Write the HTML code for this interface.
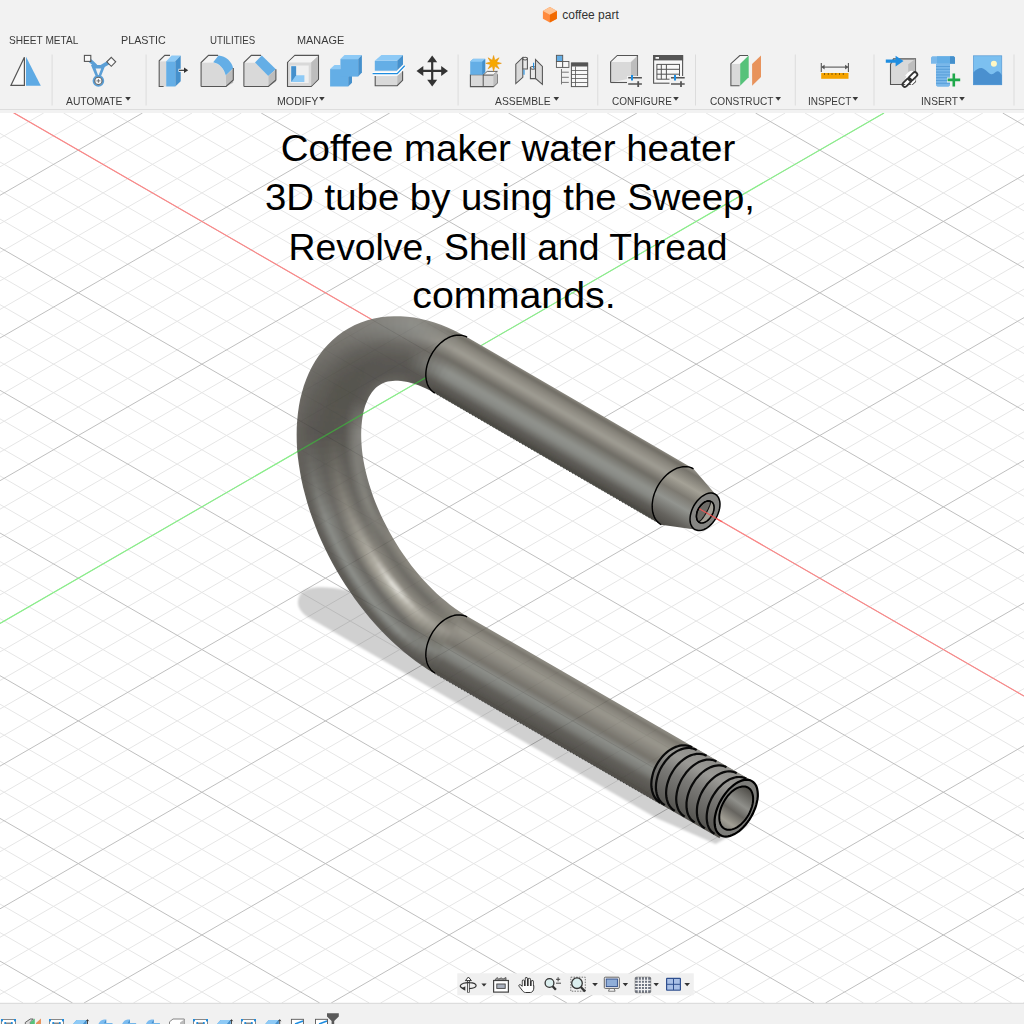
<!DOCTYPE html>
<html><head><meta charset="utf-8"><style>
html,body{margin:0;padding:0;width:1024px;height:1024px;overflow:hidden;background:#f0f0f0;font-family:"Liberation Sans",sans-serif;}
svg{display:block}
#vp{position:absolute;left:0;top:0;}
.tab{position:absolute;top:33px;font-size:10px;color:#3c3c3c;white-space:nowrap}
.lbl{position:absolute;top:94px;font-size:10px;color:#3c3c3c;white-space:nowrap}
.sep{position:absolute;top:55px;width:1px;height:50px;background:#d9d9d9}
.ic{position:absolute;}
</style></head><body>
<svg id="vp" width="1024" height="1024" viewBox="0 0 1024 1024">
<defs>
<clipPath id="vpclip"><rect x="0" y="113" width="1024" height="890"/></clipPath>
<filter id="blur1" x="-5%" y="-5%" width="110%" height="110%"><feGaussianBlur stdDeviation="0.8"/></filter>
<filter id="blur15" x="-10%" y="-10%" width="120%" height="120%"><feGaussianBlur stdDeviation="0.9"/></filter>
<clipPath id="tubeclip"><path d="M693.5 468.8L467.2 337.2L460.7 333.7L454.3 330.4L447.7 327.5L441.1 324.8L434.5 322.5L427.8 320.5L421.1 318.9L414.4 317.6L407.6 316.7L400.8 316.2L394.0 316.2L387.2 316.5L380.5 317.3L373.9 318.6L367.3 320.3L360.9 322.5L354.7 325.1L348.7 328.2L342.9 331.8L337.5 335.8L332.3 340.2L327.5 344.9L323.0 350.0L318.9 355.4L315.2 361.0L311.8 366.9L308.8 373.0L306.2 379.3L303.8 385.7L301.9 392.4L300.2 399.1L298.9 406.0L297.9 413.0L297.2 420.1L296.7 427.3L296.6 434.6L296.7 442.0L297.1 449.4L297.8 456.9L298.8 464.5L300.0 472.1L301.4 479.7L303.1 487.4L305.1 495.1L307.2 502.8L309.6 510.5L312.2 518.1L315.1 525.8L318.1 533.4L321.4 541.0L324.9 548.5L328.6 555.9L332.4 563.2L336.5 570.5L340.8 577.7L345.2 584.7L349.8 591.6L354.5 598.4L359.4 605.1L364.5 611.5L369.7 617.9L375.0 624.0L380.5 630.0L386.1 635.7L391.8 641.3L397.6 646.6L403.6 651.7L409.6 656.6L415.7 661.2L421.9 665.6L428.1 669.7L434.5 673.6L719.5 838.2L752.5 781.0L467.5 616.4L463.2 613.9L458.8 611.0L454.4 608.0L450.0 604.7L445.6 601.1L441.2 597.4L436.7 593.4L432.4 589.2L428.0 584.8L423.7 580.2L419.5 575.4L415.4 570.5L411.3 565.4L407.4 560.1L403.6 554.7L399.8 549.2L396.3 543.6L392.8 537.8L389.5 532.0L386.4 526.1L383.4 520.2L380.5 514.2L377.9 508.2L375.4 502.2L373.1 496.2L371.1 490.2L369.2 484.2L367.5 478.3L366.0 472.5L364.7 466.7L363.6 461.0L362.7 455.4L362.0 450.0L361.6 444.7L361.3 439.6L361.2 434.6L361.3 429.8L361.6 425.2L362.0 420.9L362.6 416.8L363.3 412.9L364.2 409.2L365.2 405.8L366.4 402.7L367.6 399.9L368.8 397.3L370.2 394.9L371.6 392.8L373.0 390.9L374.5 389.3L375.9 387.8L377.5 386.5L379.0 385.4L380.6 384.4L382.3 383.5L384.1 382.8L386.0 382.1L388.0 381.6L390.3 381.2L392.7 380.9L395.2 380.7L398.0 380.8L401.0 381.0L404.1 381.4L407.5 382.0L411.0 382.9L414.6 384.0L418.4 385.3L422.4 386.9L426.4 388.7L430.6 390.8L434.8 393.2L661.2 524.7Z"/></clipPath>
<linearGradient id="coneg" gradientUnits="userSpaceOnUse" x1="707" y1="476.3" x2="675" y2="531.7">
<stop offset="0" stop-color="#9a978e"/><stop offset="0.08" stop-color="#77746c"/><stop offset="0.28" stop-color="#a4a196"/><stop offset="0.45" stop-color="#7d7a72"/><stop offset="0.62" stop-color="#92948f"/><stop offset="0.85" stop-color="#65635e"/><stop offset="1" stop-color="#504e49"/></linearGradient>
<linearGradient id="thrg" gradientUnits="userSpaceOnUse" x1="722" y1="764" x2="690" y2="820">
<stop offset="0" stop-color="#8f8e8a"/><stop offset="0.25" stop-color="#9a9995"/><stop offset="0.5" stop-color="#7a7976"/><stop offset="0.75" stop-color="#686764"/><stop offset="1" stop-color="#555450"/></linearGradient>
<linearGradient id="holeg" gradientUnits="userSpaceOnUse" x1="750" y1="790" x2="722" y2="830">
<stop offset="0" stop-color="#4f4d48"/><stop offset="0.35" stop-color="#8f8f8a"/><stop offset="0.55" stop-color="#66645f"/><stop offset="0.8" stop-color="#a19e94"/><stop offset="1" stop-color="#777570"/></linearGradient>
</defs>
<rect x="0" y="113" width="1024" height="890" fill="#ffffff"/>
<g clip-path="url(#vpclip)">
<path d="M953.3 113.0L1024.0 153.8M903.8 113.0L1024.0 182.4M854.4 113.0L1024.0 210.9M0.0 138.2L43.7 113.0M805.0 113.0L1024.0 239.5M0.0 166.8L93.1 113.0M706.1 113.0L1024.0 296.5M0.0 223.8L192.0 113.0M656.7 113.0L1024.0 325.1M0.0 252.4L241.4 113.0M607.2 113.0L1024.0 353.6M0.0 280.9L290.8 113.0M557.8 113.0L1024.0 382.2M0.0 309.5L340.3 113.0M458.9 113.0L1024.0 439.2M0.0 366.5L439.1 113.0M409.5 113.0L1024.0 467.8M0.0 395.1L488.6 113.0M360.1 113.0L1024.0 496.3M0.0 423.6L538.0 113.0M310.6 113.0L1024.0 524.9M0.0 452.2L587.4 113.0M211.8 113.0L1024.0 581.9M0.0 509.2L686.3 113.0M162.3 113.0L1024.0 610.5M0.0 537.8L735.7 113.0M112.9 113.0L1024.0 639.0M0.0 566.3L785.2 113.0M63.5 113.0L1024.0 667.6M0.0 594.9L834.6 113.0M0.0 133.4L1024.0 724.6M0.0 651.9L933.5 113.0M0.0 162.0L1024.0 753.2M0.0 680.5L982.9 113.0M0.0 190.5L1024.0 781.7M0.0 709.0L1024.0 117.8M0.0 219.1L1024.0 810.3M0.0 737.6L1024.0 146.4M0.0 276.1L1024.0 867.3M0.0 794.6L1024.0 203.4M0.0 304.7L1024.0 895.9M0.0 823.2L1024.0 232.0M0.0 333.2L1024.0 924.4M0.0 851.7L1024.0 260.5M0.0 361.8L1024.0 953.0M0.0 880.3L1024.0 289.1M0.0 418.8L1011.8 1003.0M0.0 937.3L1024.0 346.1M0.0 447.4L962.4 1003.0M0.0 965.9L1024.0 374.7M0.0 475.9L912.9 1003.0M0.0 994.4L1024.0 403.2M0.0 504.5L863.5 1003.0M34.6 1003.0L1024.0 431.8M0.0 561.5L764.6 1003.0M133.4 1003.0L1024.0 488.8M0.0 590.1L715.2 1003.0M182.9 1003.0L1024.0 517.4M0.0 618.6L665.8 1003.0M232.3 1003.0L1024.0 545.9M0.0 647.2L616.3 1003.0M281.7 1003.0L1024.0 574.5M0.0 704.2L517.5 1003.0M380.6 1003.0L1024.0 631.5M0.0 732.8L468.0 1003.0M430.0 1003.0L1024.0 660.1M0.0 761.3L418.6 1003.0M479.5 1003.0L1024.0 688.6M0.0 789.9L369.2 1003.0M528.9 1003.0L1024.0 717.2M0.0 846.9L270.3 1003.0M627.8 1003.0L1024.0 774.2M0.0 875.5L220.9 1003.0M677.2 1003.0L1024.0 802.8M0.0 904.0L171.4 1003.0M726.6 1003.0L1024.0 831.3M0.0 932.6L122.0 1003.0M776.1 1003.0L1024.0 859.9M0.0 989.6L23.1 1003.0M874.9 1003.0L1024.0 916.9M924.4 1003.0L1024.0 945.5M973.8 1003.0L1024.0 974.0M1023.2 1003.0L1024.0 1002.6" stroke="#e6e6e6" stroke-width="1" fill="none"/>
<path d="M1002.7 113.0L1024.0 125.3M755.5 113.0L1024.0 268.0M0.0 195.3L142.5 113.0M508.4 113.0L1024.0 410.7M0.0 338.0L389.7 113.0M261.2 113.0L1024.0 553.4M0.0 480.7L636.9 113.0M14.0 113.0L1024.0 696.1M0.0 623.4L884.0 113.0M0.0 247.6L1024.0 838.8M0.0 766.1L1024.0 174.9M0.0 390.3L1024.0 981.5M0.0 908.8L1024.0 317.6M0.0 533.0L814.1 1003.0M84.0 1003.0L1024.0 460.3M0.0 675.7L566.9 1003.0M331.2 1003.0L1024.0 603.0M0.0 818.4L319.7 1003.0M578.3 1003.0L1024.0 745.7M0.0 961.1L72.6 1003.0M825.5 1003.0L1024.0 888.4" stroke="#bfbfbf" stroke-width="1" fill="none"/>
<line x1="13.5" y1="112.7" x2="1024" y2="696.1" stroke="#ff8585" stroke-width="1.15"/>
<line x1="884" y1="113" x2="0" y2="623.4" stroke="#88f288" stroke-width="1.15"/>
<path d="M420.0 640.0L347.8 590.3C318 584.5 305 588 301 593.5C297 599 297 606 300.5 610C302 612.5 304 614 306 615.9L656.2 818.1L715.6 844L748.4 825.6L740 780Z" fill="#000" fill-opacity="0.185" filter="url(#blur15)"/>
<g clip-path="url(#tubeclip)"><g filter="url(#blur1)"><path d="M693.5 468.8L467.2 337.2L460.7 333.7L454.3 330.4L447.7 327.5L441.1 324.8L434.5 322.5L427.8 320.5L421.1 318.9L414.4 317.6L407.6 316.7L400.8 316.2L394.0 316.2L387.2 316.5L380.5 317.3L373.9 318.6L367.3 320.3L360.9 322.5L354.7 325.1L348.7 328.2L342.9 331.8L337.5 335.8L332.3 340.2L327.5 344.9L323.0 350.0L318.9 355.4L315.2 361.0L311.8 366.9L308.8 373.0L306.2 379.3L303.8 385.7L301.9 392.4L300.2 399.1L298.9 406.0L297.9 413.0L297.2 420.1L296.7 427.3L296.6 434.6L296.7 442.0L297.1 449.4L297.8 456.9L298.8 464.5L300.0 472.1L301.4 479.7L303.1 487.4L305.1 495.1L307.2 502.8L309.6 510.5L312.2 518.1L315.1 525.8L318.1 533.4L321.4 541.0L324.9 548.5L328.6 555.9L332.4 563.2L336.5 570.5L340.8 577.7L345.2 584.7L349.8 591.6L354.5 598.4L359.4 605.1L364.5 611.5L369.7 617.9L375.0 624.0L380.5 630.0L386.1 635.7L391.8 641.3L397.6 646.6L403.6 651.7L409.6 656.6L415.7 661.2L421.9 665.6L428.1 669.7L434.5 673.6L719.5 838.2L752.5 781.0L467.5 616.4L463.2 613.9L458.8 611.0L454.4 608.0L450.0 604.7L445.6 601.1L441.2 597.4L436.7 593.4L432.4 589.2L428.0 584.8L423.7 580.2L419.5 575.4L415.4 570.5L411.3 565.4L407.4 560.1L403.6 554.7L399.8 549.2L396.3 543.6L392.8 537.8L389.5 532.0L386.4 526.1L383.4 520.2L380.5 514.2L377.9 508.2L375.4 502.2L373.1 496.2L371.1 490.2L369.2 484.2L367.5 478.3L366.0 472.5L364.7 466.7L363.6 461.0L362.7 455.4L362.0 450.0L361.6 444.7L361.3 439.6L361.2 434.6L361.3 429.8L361.6 425.2L362.0 420.9L362.6 416.8L363.3 412.9L364.2 409.2L365.2 405.8L366.4 402.7L367.6 399.9L368.8 397.3L370.2 394.9L371.6 392.8L373.0 390.9L374.5 389.3L375.9 387.8L377.5 386.5L379.0 385.4L380.6 384.4L382.3 383.5L384.1 382.8L386.0 382.1L388.0 381.6L390.3 381.2L392.7 380.9L395.2 380.7L398.0 380.8L401.0 381.0L404.1 381.4L407.5 382.0L411.0 382.9L414.6 384.0L418.4 385.3L422.4 386.9L426.4 388.7L430.6 390.8L434.8 393.2L661.2 524.7Z" fill="#6e6c66" stroke="#6e6c66" stroke-width="3"/><path d="M694.2 468.3L467.3 336.4L465.4 339.5L692.4 471.4Z" fill="#908d84"/><path d="M693.2 470.0L466.2 338.1L464.4 341.2L691.4 473.1Z" fill="#6f6c64"/><path d="M692.2 471.7L465.2 339.8L463.4 343.0L690.4 474.9Z" fill="#75726a"/><path d="M691.2 473.5L464.2 341.6L462.4 344.7L689.4 476.6Z" fill="#807d74"/><path d="M690.2 475.2L463.2 343.3L461.4 346.5L688.4 478.4Z" fill="#88857c"/><path d="M689.2 477.0L462.2 345.1L460.4 348.2L687.3 480.1Z" fill="#8e8b82"/><path d="M688.2 478.7L461.2 346.8L459.4 350.0L686.3 481.9Z" fill="#949188"/><path d="M687.1 480.5L460.2 348.6L458.4 351.7L685.3 483.6Z" fill="#99968d"/><path d="M686.1 482.2L459.2 350.3L457.4 353.5L684.3 485.4Z" fill="#9f9c93"/><path d="M685.1 484.0L458.2 352.1L456.3 355.2L683.3 487.1Z" fill="#9b988f"/><path d="M684.1 485.7L457.2 353.8L455.3 357.0L682.3 488.9Z" fill="#928f86"/><path d="M683.1 487.5L456.1 355.6L454.3 358.7L681.3 490.6Z" fill="#89867e"/><path d="M682.1 489.2L455.1 357.3L453.3 360.5L680.3 492.4Z" fill="#807d75"/><path d="M681.1 491.0L454.1 359.1L452.3 362.2L679.3 494.1Z" fill="#77746d"/><path d="M680.1 492.7L453.1 360.8L451.3 364.0L678.3 495.9Z" fill="#706d66"/><path d="M679.1 494.5L452.1 362.6L450.3 365.7L677.2 497.6Z" fill="#76746d"/><path d="M678.1 496.2L451.1 364.3L449.3 367.5L676.2 499.4Z" fill="#7c7b74"/><path d="M677.0 498.0L450.1 366.1L448.3 369.2L675.2 501.1Z" fill="#82827c"/><path d="M676.0 499.7L449.1 367.8L447.3 371.0L674.2 502.9Z" fill="#888983"/><path d="M675.0 501.5L448.1 369.6L446.3 372.7L673.2 504.6Z" fill="#8e908a"/><path d="M674.0 503.2L447.1 371.3L445.2 374.5L672.2 506.4Z" fill="#90928d"/><path d="M673.0 505.0L446.1 373.1L444.2 376.2L671.2 508.1Z" fill="#8d8f8a"/><path d="M672.0 506.7L445.0 374.8L443.2 378.0L670.2 509.9Z" fill="#8a8c87"/><path d="M671.0 508.5L444.0 376.6L442.2 379.7L669.2 511.6Z" fill="#858782"/><path d="M670.0 510.2L443.0 378.3L441.2 381.5L668.2 513.4Z" fill="#7c7c77"/><path d="M669.0 512.0L442.0 380.1L440.2 383.2L667.2 515.1Z" fill="#72726d"/><path d="M668.0 513.7L441.0 381.8L439.2 385.0L666.1 516.9Z" fill="#696863"/><path d="M667.0 515.5L440.0 383.6L438.2 386.7L665.1 518.6Z" fill="#5f5d58"/><path d="M665.9 517.2L439.0 385.3L437.2 388.5L664.1 520.4Z" fill="#5b5954"/><path d="M664.9 519.0L438.0 387.1L436.2 390.2L663.1 522.1Z" fill="#56544f"/><path d="M663.9 520.7L437.0 388.8L435.2 391.9L662.1 523.8Z" fill="#514f4a"/><path d="M662.9 522.5L436.0 390.6L434.1 393.7L661.1 525.6Z" fill="#4a4843"/><path d="M467.9 336.7L460.8 332.8L459.1 336.0L466.0 339.8Z" fill="#908d84"/><path d="M466.8 338.5L459.9 334.6L458.2 337.8L465.0 341.6Z" fill="#716e66"/><path d="M465.8 340.2L458.9 336.4L457.2 339.6L464.0 343.3Z" fill="#77746c"/><path d="M464.8 341.9L458.0 338.2L456.3 341.4L463.0 345.1Z" fill="#817e75"/><path d="M463.8 343.7L457.0 340.0L455.3 343.2L462.0 346.8Z" fill="#88867d"/><path d="M462.8 345.4L456.1 341.7L454.4 345.0L461.0 348.6Z" fill="#8e8b82"/><path d="M461.8 347.2L455.2 343.5L453.5 346.7L460.0 350.3Z" fill="#939088"/><path d="M460.8 348.9L454.2 345.3L452.5 348.5L459.0 352.1Z" fill="#98968d"/><path d="M459.8 350.7L453.3 347.1L451.6 350.3L458.0 353.8Z" fill="#9e9b92"/><path d="M458.8 352.4L452.3 348.9L450.6 352.1L457.0 355.6Z" fill="#99978e"/><path d="M457.8 354.2L451.4 350.7L449.7 353.9L455.9 357.3Z" fill="#918e86"/><path d="M456.8 355.9L450.4 352.5L448.8 355.7L454.9 359.1Z" fill="#88857d"/><path d="M455.7 357.7L449.5 354.2L447.8 357.5L453.9 360.8Z" fill="#7f7d75"/><path d="M454.7 359.4L448.6 356.0L446.9 359.2L452.9 362.6Z" fill="#77746d"/><path d="M453.7 361.2L447.6 357.8L445.9 361.0L451.9 364.3Z" fill="#6f6d66"/><path d="M452.7 362.9L446.7 359.6L445.0 362.8L450.9 366.1Z" fill="#75736d"/><path d="M451.7 364.7L445.7 361.4L444.0 364.6L449.9 367.8Z" fill="#7b7973"/><path d="M450.7 366.4L444.8 363.2L443.1 366.4L448.9 369.6Z" fill="#80807a"/><path d="M449.7 368.2L443.9 365.0L442.2 368.2L447.9 371.3Z" fill="#868681"/><path d="M448.7 369.9L442.9 366.7L441.2 370.0L446.9 373.1Z" fill="#8b8d87"/><path d="M447.7 371.7L442.0 368.5L440.3 371.7L445.9 374.8Z" fill="#8d8e89"/><path d="M446.7 373.4L441.0 370.3L439.3 373.5L444.8 376.6Z" fill="#8a8c87"/><path d="M445.7 375.2L440.1 372.1L438.4 375.3L443.8 378.3Z" fill="#878984"/><path d="M444.6 376.9L439.1 373.9L437.5 377.1L442.8 380.1Z" fill="#83847f"/><path d="M443.6 378.7L438.2 375.7L436.5 378.9L441.8 381.8Z" fill="#7a7a75"/><path d="M442.6 380.4L437.3 377.5L435.6 380.7L440.8 383.6Z" fill="#71706b"/><path d="M441.6 382.2L436.3 379.2L434.6 382.5L439.8 385.3Z" fill="#686762"/><path d="M440.6 383.9L435.4 381.0L433.7 384.2L438.8 387.1Z" fill="#5f5d58"/><path d="M439.6 385.7L434.4 382.8L432.7 386.0L437.8 388.8Z" fill="#5b5954"/><path d="M438.6 387.4L433.5 384.6L431.8 387.8L436.8 390.6Z" fill="#56544f"/><path d="M437.6 389.2L432.6 386.4L430.9 389.6L435.8 392.3Z" fill="#52504b"/><path d="M436.6 390.9L431.6 388.2L429.9 391.4L434.7 394.0Z" fill="#4c4a45"/><path d="M461.4 333.1L454.3 329.6L452.7 332.8L459.7 336.4Z" fill="#908d85"/><path d="M460.5 334.9L453.4 331.4L451.9 334.7L458.8 338.1Z" fill="#75736b"/><path d="M459.5 336.7L452.6 333.2L451.0 336.5L457.8 339.9Z" fill="#7a7870"/><path d="M458.6 338.5L451.7 335.0L450.1 338.3L456.9 341.7Z" fill="#838078"/><path d="M457.7 340.3L450.8 336.8L449.3 340.1L456.0 343.5Z" fill="#89877f"/><path d="M456.7 342.1L450.0 338.7L448.4 341.9L455.0 345.3Z" fill="#8e8b83"/><path d="M455.8 343.9L449.1 340.5L447.5 343.8L454.1 347.1Z" fill="#929087"/><path d="M454.8 345.6L448.2 342.3L446.6 345.6L453.1 348.9Z" fill="#96948c"/><path d="M453.9 347.4L447.3 344.1L445.8 347.4L452.2 350.6Z" fill="#9b9890"/><path d="M453.0 349.2L446.5 346.0L444.9 349.2L451.3 352.4Z" fill="#97948c"/><path d="M452.0 351.0L445.6 347.8L444.0 351.1L450.3 354.2Z" fill="#8f8c84"/><path d="M451.1 352.8L444.7 349.6L443.2 352.9L449.4 356.0Z" fill="#86847c"/><path d="M450.1 354.6L443.9 351.4L442.3 354.7L448.4 357.8Z" fill="#7e7c74"/><path d="M449.2 356.3L443.0 353.2L441.4 356.5L447.5 359.6Z" fill="#76736d"/><path d="M448.2 358.1L442.1 355.1L440.6 358.3L446.5 361.3Z" fill="#6f6d66"/><path d="M447.3 359.9L441.3 356.9L439.7 360.2L445.6 363.1Z" fill="#74726b"/><path d="M446.4 361.7L440.4 358.7L438.8 362.0L444.7 364.9Z" fill="#787771"/><path d="M445.4 363.5L439.5 360.5L438.0 363.8L443.7 366.7Z" fill="#7d7c76"/><path d="M444.5 365.3L438.7 362.4L437.1 365.6L442.8 368.5Z" fill="#81817c"/><path d="M443.5 367.1L437.8 364.2L436.2 367.5L441.8 370.3Z" fill="#868681"/><path d="M442.6 368.8L436.9 366.0L435.3 369.3L440.9 372.1Z" fill="#868883"/><path d="M441.7 370.6L436.0 367.8L434.5 371.1L440.0 373.8Z" fill="#848580"/><path d="M440.7 372.4L435.2 369.6L433.6 372.9L439.0 375.6Z" fill="#81837e"/><path d="M439.8 374.2L434.3 371.5L432.7 374.7L438.1 377.4Z" fill="#7d7e79"/><path d="M438.8 376.0L433.4 373.3L431.9 376.6L437.1 379.2Z" fill="#757671"/><path d="M437.9 377.8L432.6 375.1L431.0 378.4L436.2 381.0Z" fill="#6e6d68"/><path d="M436.9 379.6L431.7 376.9L430.1 380.2L435.2 382.8Z" fill="#66645f"/><path d="M436.0 381.3L430.8 378.8L429.3 382.0L434.3 384.6Z" fill="#5e5c57"/><path d="M435.1 383.1L430.0 380.6L428.4 383.9L433.4 386.3Z" fill="#5b5954"/><path d="M434.1 384.9L429.1 382.4L427.5 385.7L432.4 388.1Z" fill="#575550"/><path d="M433.2 386.7L428.2 384.2L426.7 387.5L431.5 389.9Z" fill="#54524d"/><path d="M432.2 388.5L427.3 386.0L425.8 389.3L430.5 391.7Z" fill="#4f4d48"/><path d="M454.9 329.9L447.7 326.6L446.3 329.9L453.4 333.1Z" fill="#908d85"/><path d="M454.1 331.7L446.9 328.5L445.5 331.8L452.5 335.0Z" fill="#797770"/><path d="M453.2 333.5L446.1 330.3L444.7 333.7L451.6 336.8Z" fill="#7d7b74"/><path d="M452.3 335.3L445.4 332.2L443.9 335.5L450.8 338.6Z" fill="#84827b"/><path d="M451.5 337.1L444.6 334.0L443.1 337.4L449.9 340.4Z" fill="#8a8880"/><path d="M450.6 339.0L443.8 335.9L442.3 339.2L449.0 342.2Z" fill="#8d8c84"/><path d="M449.7 340.8L443.0 337.7L441.6 341.1L448.1 344.1Z" fill="#918f87"/><path d="M448.8 342.6L442.2 339.6L440.8 342.9L447.3 345.9Z" fill="#94928b"/><path d="M448.0 344.4L441.4 341.5L440.0 344.8L446.4 347.7Z" fill="#98968e"/><path d="M447.1 346.3L440.6 343.3L439.2 346.7L445.5 349.5Z" fill="#94928a"/><path d="M446.2 348.1L439.8 345.2L438.4 348.5L444.7 351.4Z" fill="#8c8a83"/><path d="M445.4 349.9L439.0 347.0L437.6 350.4L443.8 353.2Z" fill="#85837b"/><path d="M444.5 351.7L438.2 348.9L436.8 352.2L442.9 355.0Z" fill="#7d7b74"/><path d="M443.6 353.5L437.4 350.7L436.0 354.1L442.1 356.8Z" fill="#76736c"/><path d="M442.8 355.4L436.6 352.6L435.2 355.9L441.2 358.6Z" fill="#6f6c66"/><path d="M441.9 357.2L435.8 354.5L434.4 357.8L440.3 360.5Z" fill="#72706a"/><path d="M441.0 359.0L435.1 356.3L433.6 359.7L439.5 362.3Z" fill="#76746f"/><path d="M440.2 360.8L434.3 358.2L432.8 361.5L438.6 364.1Z" fill="#797873"/><path d="M439.3 362.7L433.5 360.0L432.0 363.4L437.7 365.9Z" fill="#7d7c77"/><path d="M438.4 364.5L432.7 361.9L431.3 365.2L436.8 367.8Z" fill="#80807b"/><path d="M437.5 366.3L431.9 363.7L430.5 367.1L436.0 369.6Z" fill="#80817c"/><path d="M436.7 368.1L431.1 365.6L429.7 368.9L435.1 371.4Z" fill="#7e7f7a"/><path d="M435.8 369.9L430.3 367.5L428.9 370.8L434.2 373.2Z" fill="#7c7c77"/><path d="M434.9 371.8L429.5 369.3L428.1 372.7L433.4 375.0Z" fill="#787974"/><path d="M434.1 373.6L428.7 371.2L427.3 374.5L432.5 376.9Z" fill="#71716c"/><path d="M433.2 375.4L427.9 373.0L426.5 376.4L431.6 378.7Z" fill="#6a6a65"/><path d="M432.3 377.2L427.1 374.9L425.7 378.2L430.8 380.5Z" fill="#64625d"/><path d="M431.5 379.1L426.3 376.7L424.9 380.1L429.9 382.3Z" fill="#5d5b56"/><path d="M430.6 380.9L425.6 378.6L424.1 381.9L429.0 384.2Z" fill="#5b5954"/><path d="M429.7 382.7L424.8 380.5L423.3 383.8L428.2 386.0Z" fill="#585651"/><path d="M428.9 384.5L424.0 382.3L422.5 385.7L427.3 387.8Z" fill="#56544f"/><path d="M428.0 386.3L423.2 384.2L421.8 387.5L426.4 389.6Z" fill="#514f4a"/><path d="M448.4 326.9L441.1 324.0L439.8 327.4L446.9 330.2Z" fill="#908d86"/><path d="M447.6 328.7L440.4 325.9L439.1 329.3L446.2 332.1Z" fill="#7d7b74"/><path d="M446.8 330.6L439.7 327.7L438.4 331.1L445.4 333.9Z" fill="#817f78"/><path d="M446.0 332.4L439.0 329.6L437.7 333.0L444.6 335.8Z" fill="#86857d"/><path d="M445.2 334.3L438.3 331.5L437.0 334.9L443.8 337.6Z" fill="#8b8982"/><path d="M444.4 336.2L437.6 333.4L436.3 336.8L443.0 339.5Z" fill="#8d8c85"/><path d="M443.6 338.0L436.8 335.3L435.6 338.7L442.2 341.4Z" fill="#908e87"/><path d="M442.8 339.9L436.1 337.2L434.9 340.6L441.4 343.2Z" fill="#929189"/><path d="M442.0 341.7L435.4 339.1L434.2 342.5L440.6 345.1Z" fill="#95938c"/><path d="M441.2 343.6L434.7 341.0L433.4 344.4L439.8 346.9Z" fill="#919089"/><path d="M440.5 345.4L434.0 342.9L432.7 346.3L439.0 348.8Z" fill="#8a8882"/><path d="M439.7 347.3L433.3 344.8L432.0 348.2L438.2 350.6Z" fill="#83817a"/><path d="M438.9 349.2L432.6 346.6L431.3 350.0L437.4 352.5Z" fill="#7c7a73"/><path d="M438.1 351.0L431.9 348.5L430.6 351.9L436.7 354.4Z" fill="#75736c"/><path d="M437.3 352.9L431.2 350.4L429.9 353.8L435.9 356.2Z" fill="#6f6c66"/><path d="M436.5 354.7L430.5 352.3L429.2 355.7L435.1 358.1Z" fill="#716f69"/><path d="M435.7 356.6L429.8 354.2L428.5 357.6L434.3 359.9Z" fill="#73726c"/><path d="M434.9 358.4L429.0 356.1L427.8 359.5L433.5 361.8Z" fill="#76756f"/><path d="M434.1 360.3L428.3 358.0L427.1 361.4L432.7 363.6Z" fill="#787872"/><path d="M433.3 362.2L427.6 359.9L426.3 363.3L431.9 365.5Z" fill="#7a7a75"/><path d="M432.5 364.0L426.9 361.8L425.6 365.2L431.1 367.4Z" fill="#7a7a75"/><path d="M431.7 365.9L426.2 363.7L424.9 367.1L430.3 369.2Z" fill="#787873"/><path d="M430.9 367.7L425.5 365.5L424.2 368.9L429.5 371.1Z" fill="#767671"/><path d="M430.2 369.6L424.8 367.4L423.5 370.8L428.7 372.9Z" fill="#73736e"/><path d="M429.4 371.4L424.1 369.3L422.8 372.7L427.9 374.8Z" fill="#6d6d68"/><path d="M428.6 373.3L423.4 371.2L422.1 374.6L427.1 376.6Z" fill="#676661"/><path d="M427.8 375.2L422.7 373.1L421.4 376.5L426.4 378.5Z" fill="#62605b"/><path d="M427.0 377.0L421.9 375.0L420.7 378.4L425.6 380.4Z" fill="#5c5a55"/><path d="M426.2 378.9L421.2 376.9L420.0 380.3L424.8 382.2Z" fill="#5b5954"/><path d="M425.4 380.7L420.5 378.8L419.3 382.2L424.0 384.1Z" fill="#595752"/><path d="M424.6 382.6L419.8 380.7L418.5 384.1L423.2 385.9Z" fill="#575550"/><path d="M423.8 384.4L419.1 382.6L417.8 386.0L422.4 387.8Z" fill="#54524d"/><path d="M441.8 324.2L434.4 321.6L433.3 325.1L440.5 327.6Z" fill="#908e86"/><path d="M441.0 326.1L433.8 323.6L432.7 327.0L439.8 329.5Z" fill="#817f79"/><path d="M440.3 328.0L433.2 325.5L432.1 328.9L439.1 331.4Z" fill="#84827b"/><path d="M439.6 329.9L432.6 327.4L431.4 330.9L438.4 333.3Z" fill="#888780"/><path d="M438.9 331.8L431.9 329.3L430.8 332.8L437.6 335.2Z" fill="#8b8b84"/><path d="M438.2 333.7L431.3 331.3L430.2 334.7L436.9 337.1Z" fill="#8d8c86"/><path d="M437.5 335.6L430.7 333.2L429.6 336.6L436.2 339.0Z" fill="#8f8e87"/><path d="M436.8 337.4L430.1 335.1L429.0 338.6L435.5 340.8Z" fill="#908f88"/><path d="M436.1 339.3L429.5 337.0L428.3 340.5L434.8 342.7Z" fill="#92908a"/><path d="M435.4 341.2L428.8 338.9L427.7 342.4L434.1 344.6Z" fill="#8f8d87"/><path d="M434.7 343.1L428.2 340.9L427.1 344.3L433.4 346.5Z" fill="#888780"/><path d="M434.0 345.0L427.6 342.8L426.5 346.2L432.7 348.4Z" fill="#828079"/><path d="M433.2 346.9L427.0 344.7L425.9 348.2L432.0 350.3Z" fill="#7b7973"/><path d="M432.5 348.8L426.3 346.6L425.2 350.1L431.3 352.2Z" fill="#74726c"/><path d="M431.8 350.7L425.7 348.5L424.6 352.0L430.5 354.1Z" fill="#6f6c66"/><path d="M431.1 352.6L425.1 350.5L424.0 353.9L429.8 356.0Z" fill="#706e68"/><path d="M430.4 354.5L424.5 352.4L423.4 355.8L429.1 357.9Z" fill="#716f6a"/><path d="M429.7 356.3L423.9 354.3L422.7 357.8L428.4 359.7Z" fill="#72716c"/><path d="M429.0 358.2L423.2 356.2L422.1 359.7L427.7 361.6Z" fill="#74736d"/><path d="M428.3 360.1L422.6 358.1L421.5 361.6L427.0 363.5Z" fill="#75746f"/><path d="M427.6 362.0L422.0 360.1L420.9 363.5L426.3 365.4Z" fill="#74746f"/><path d="M426.9 363.9L421.4 362.0L420.3 365.4L425.6 367.3Z" fill="#72726d"/><path d="M426.2 365.8L420.8 363.9L419.6 367.4L424.9 369.2Z" fill="#70706b"/><path d="M425.4 367.7L420.1 365.8L419.0 369.3L424.2 371.1Z" fill="#6e6d68"/><path d="M424.7 369.6L419.5 367.7L418.4 371.2L423.5 373.0Z" fill="#696863"/><path d="M424.0 371.5L418.9 369.7L417.8 373.1L422.7 374.9Z" fill="#64635e"/><path d="M423.3 373.4L418.3 371.6L417.2 375.0L422.0 376.8Z" fill="#605e59"/><path d="M422.6 375.2L417.7 373.5L416.5 377.0L421.3 378.6Z" fill="#5b5a55"/><path d="M421.9 377.1L417.0 375.4L415.9 378.9L420.6 380.5Z" fill="#5b5954"/><path d="M421.2 379.0L416.4 377.4L415.3 380.8L419.9 382.4Z" fill="#5a5853"/><path d="M420.5 380.9L415.8 379.3L414.7 382.7L419.2 384.3Z" fill="#595752"/><path d="M419.8 382.8L415.2 381.2L414.1 384.7L418.5 386.2Z" fill="#575550"/><path d="M435.1 321.9L427.7 319.7L426.8 323.2L434.0 325.3Z" fill="#908e87"/><path d="M434.5 323.8L427.2 321.6L426.2 325.1L433.4 327.2Z" fill="#85847d"/><path d="M433.8 325.7L426.6 323.6L425.7 327.1L432.7 329.2Z" fill="#87867f"/><path d="M433.2 327.6L426.1 325.5L425.2 329.0L432.1 331.1Z" fill="#8a8983"/><path d="M432.6 329.5L425.6 327.5L424.6 331.0L431.5 333.0Z" fill="#8c8c86"/><path d="M432.0 331.5L425.1 329.4L424.1 332.9L430.9 334.9Z" fill="#8d8d86"/><path d="M431.4 333.4L424.5 331.4L423.6 334.9L430.2 336.8Z" fill="#8e8d87"/><path d="M430.7 335.3L424.0 333.3L423.1 336.8L429.6 338.8Z" fill="#8e8d87"/><path d="M430.1 337.2L423.5 335.3L422.5 338.8L429.0 340.7Z" fill="#8f8e88"/><path d="M429.5 339.2L423.0 337.2L422.0 340.7L428.4 342.6Z" fill="#8c8b85"/><path d="M428.9 341.1L422.4 339.2L421.5 342.7L427.8 344.5Z" fill="#86857f"/><path d="M428.3 343.0L421.9 341.1L421.0 344.6L427.1 346.4Z" fill="#807e79"/><path d="M427.6 344.9L421.4 343.1L420.4 346.6L426.5 348.4Z" fill="#7a7872"/><path d="M427.0 346.8L420.8 345.0L419.9 348.5L425.9 350.3Z" fill="#74726c"/><path d="M426.4 348.8L420.3 347.0L419.4 350.5L425.3 352.2Z" fill="#6e6c66"/><path d="M425.8 350.7L419.8 348.9L418.8 352.4L424.7 354.1Z" fill="#6f6d67"/><path d="M425.2 352.6L419.3 350.8L418.3 354.4L424.0 356.1Z" fill="#6f6d68"/><path d="M424.5 354.5L418.7 352.8L417.8 356.3L423.4 358.0Z" fill="#6f6d68"/><path d="M423.9 356.4L418.2 354.7L417.3 358.3L422.8 359.9Z" fill="#6f6e69"/><path d="M423.3 358.4L417.7 356.7L416.7 360.2L422.2 361.8Z" fill="#6f6e69"/><path d="M422.7 360.3L417.2 358.6L416.2 362.2L421.5 363.7Z" fill="#6e6d68"/><path d="M422.0 362.2L416.6 360.6L415.7 364.1L420.9 365.7Z" fill="#6c6b66"/><path d="M421.4 364.1L416.1 362.5L415.2 366.0L420.3 367.6Z" fill="#6b6a65"/><path d="M420.8 366.0L415.6 364.5L414.6 368.0L419.7 369.5Z" fill="#686863"/><path d="M420.2 368.0L415.1 366.4L414.1 369.9L419.1 371.4Z" fill="#65645f"/><path d="M419.6 369.9L414.5 368.4L413.6 371.9L418.4 373.3Z" fill="#61605b"/><path d="M418.9 371.8L414.0 370.3L413.1 373.8L417.8 375.3Z" fill="#5e5c57"/><path d="M418.3 373.7L413.5 372.3L412.5 375.8L417.2 377.2Z" fill="#5b5954"/><path d="M417.7 375.6L412.9 374.2L412.0 377.7L416.6 379.1Z" fill="#5b5954"/><path d="M417.1 377.6L412.4 376.2L411.5 379.7L416.0 381.0Z" fill="#5b5954"/><path d="M416.5 379.5L411.9 378.1L410.9 381.6L415.3 382.9Z" fill="#5b5954"/><path d="M415.8 381.4L411.4 380.1L410.4 383.6L414.7 384.9Z" fill="#5a5853"/><path d="M428.4 319.9L420.9 318.0L420.2 321.6L427.4 323.4Z" fill="#908e87"/><path d="M427.8 321.8L420.5 320.0L419.7 323.6L426.9 325.3Z" fill="#898882"/><path d="M427.3 323.7L420.1 322.0L419.3 325.5L426.4 327.3Z" fill="#8a8983"/><path d="M426.8 325.7L419.7 324.0L418.9 327.5L425.8 329.2Z" fill="#8c8b85"/><path d="M426.3 327.6L419.2 325.9L418.5 329.5L425.3 331.2Z" fill="#8d8d87"/><path d="M425.7 329.6L418.8 327.9L418.0 331.5L424.8 333.1Z" fill="#8d8d87"/><path d="M425.2 331.5L418.4 329.9L417.6 333.4L424.3 335.1Z" fill="#8c8c87"/><path d="M424.7 333.5L417.9 331.9L417.2 335.4L423.7 337.0Z" fill="#8c8c86"/><path d="M424.2 335.4L417.5 333.8L416.8 337.4L423.2 338.9Z" fill="#8c8b85"/><path d="M423.6 337.4L417.1 335.8L416.3 339.4L422.7 340.9Z" fill="#898983"/><path d="M423.1 339.3L416.7 337.8L415.9 341.3L422.2 342.8Z" fill="#84837d"/><path d="M422.6 341.3L416.2 339.7L415.5 343.3L421.6 344.8Z" fill="#7e7d78"/><path d="M422.1 343.2L415.8 341.7L415.0 345.3L421.1 346.7Z" fill="#797772"/><path d="M421.5 345.2L415.4 343.7L414.6 347.2L420.6 348.7Z" fill="#73716c"/><path d="M421.0 347.1L415.0 345.7L414.2 349.2L420.0 350.6Z" fill="#6e6c67"/><path d="M420.5 349.1L414.5 347.6L413.8 351.2L419.5 352.6Z" fill="#6d6b66"/><path d="M419.9 351.0L414.1 349.6L413.3 353.2L419.0 354.5Z" fill="#6c6a65"/><path d="M419.4 353.0L413.7 351.6L412.9 355.1L418.5 356.5Z" fill="#6b6a65"/><path d="M418.9 354.9L413.3 353.6L412.5 357.1L417.9 358.4Z" fill="#6b6964"/><path d="M418.4 356.9L412.8 355.5L412.1 359.1L417.4 360.4Z" fill="#6a6863"/><path d="M417.8 358.8L412.4 357.5L411.6 361.1L416.9 362.3Z" fill="#686762"/><path d="M417.3 360.8L412.0 359.5L411.2 363.0L416.4 364.3Z" fill="#666560"/><path d="M416.8 362.7L411.6 361.5L410.8 365.0L415.8 366.2Z" fill="#65645f"/><path d="M416.3 364.7L411.1 363.4L410.4 367.0L415.3 368.2Z" fill="#63625d"/><path d="M415.7 366.6L410.7 365.4L409.9 368.9L414.8 370.1Z" fill="#615f5a"/><path d="M415.2 368.6L410.3 367.4L409.5 370.9L414.3 372.1Z" fill="#5e5d58"/><path d="M414.7 370.5L409.8 369.3L409.1 372.9L413.7 374.0Z" fill="#5c5a55"/><path d="M414.1 372.5L409.4 371.3L408.7 374.9L413.2 376.0Z" fill="#5a5853"/><path d="M413.6 374.4L409.0 373.3L408.2 376.8L412.7 377.9Z" fill="#5b5954"/><path d="M413.1 376.4L408.6 375.3L407.8 378.8L412.1 379.9Z" fill="#5c5a55"/><path d="M412.6 378.3L408.1 377.2L407.4 380.8L411.6 381.8Z" fill="#5c5a55"/><path d="M412.0 380.3L407.7 379.2L406.9 382.8L411.1 383.8Z" fill="#5d5b56"/><path d="M421.6 318.2L414.1 316.8L413.6 320.4L420.8 321.7Z" fill="#908e88"/><path d="M421.2 320.2L413.8 318.8L413.2 322.4L420.4 323.7Z" fill="#8d8c86"/><path d="M420.8 322.1L413.5 320.8L412.9 324.4L420.0 325.7Z" fill="#8d8d87"/><path d="M420.3 324.1L413.2 322.8L412.6 326.3L419.6 327.7Z" fill="#8e8e88"/><path d="M419.9 326.1L412.9 324.8L412.3 328.3L419.1 329.6Z" fill="#8e8e89"/><path d="M419.5 328.1L412.5 326.7L412.0 330.3L418.7 331.6Z" fill="#8d8d88"/><path d="M419.1 330.0L412.2 328.7L411.6 332.3L418.3 333.6Z" fill="#8b8c87"/><path d="M418.6 332.0L411.9 330.7L411.3 334.3L417.9 335.6Z" fill="#8a8a85"/><path d="M418.2 334.0L411.6 332.7L411.0 336.3L417.4 337.5Z" fill="#898983"/><path d="M417.8 335.9L411.3 334.7L410.7 338.3L417.0 339.5Z" fill="#878681"/><path d="M417.4 337.9L410.9 336.7L410.4 340.3L416.6 341.5Z" fill="#82817c"/><path d="M416.9 339.9L410.6 338.7L410.0 342.3L416.2 343.4Z" fill="#7d7c77"/><path d="M416.5 341.9L410.3 340.7L409.7 344.3L415.7 345.4Z" fill="#787671"/><path d="M416.1 343.8L410.0 342.7L409.4 346.3L415.3 347.4Z" fill="#73716c"/><path d="M415.6 345.8L409.7 344.7L409.1 348.3L414.9 349.4Z" fill="#6e6c67"/><path d="M415.2 347.8L409.3 346.7L408.8 350.3L414.5 351.3Z" fill="#6c6a65"/><path d="M414.8 349.8L409.0 348.7L408.4 352.3L414.0 353.3Z" fill="#6a6863"/><path d="M414.4 351.7L408.7 350.7L408.1 354.3L413.6 355.3Z" fill="#686661"/><path d="M413.9 353.7L408.4 352.7L407.8 356.2L413.2 357.3Z" fill="#66645f"/><path d="M413.5 355.7L408.1 354.7L407.5 358.2L412.7 359.2Z" fill="#64625d"/><path d="M413.1 357.7L407.7 356.6L407.2 360.2L412.3 361.2Z" fill="#62605b"/><path d="M412.7 359.6L407.4 358.6L406.8 362.2L411.9 363.2Z" fill="#605f5a"/><path d="M412.2 361.6L407.1 360.6L406.5 364.2L411.5 365.2Z" fill="#5f5e59"/><path d="M411.8 363.6L406.8 362.6L406.2 366.2L411.0 367.1Z" fill="#5e5c57"/><path d="M411.4 365.5L406.5 364.6L405.9 368.2L410.6 369.1Z" fill="#5d5b56"/><path d="M411.0 367.5L406.1 366.6L405.6 370.2L410.2 371.1Z" fill="#5b5954"/><path d="M410.5 369.5L405.8 368.6L405.2 372.2L409.8 373.0Z" fill="#5a5853"/><path d="M410.1 371.5L405.5 370.6L404.9 374.2L409.3 375.0Z" fill="#595752"/><path d="M409.7 373.4L405.2 372.6L404.6 376.2L408.9 377.0Z" fill="#5b5954"/><path d="M409.2 375.4L404.9 374.6L404.3 378.2L408.5 379.0Z" fill="#5c5a55"/><path d="M408.8 377.4L404.5 376.6L404.0 380.2L408.1 380.9Z" fill="#5e5c57"/><path d="M408.4 379.4L404.2 378.6L403.6 382.2L407.6 382.9Z" fill="#605e59"/><path d="M414.8 316.9L407.3 315.9L406.9 319.5L414.2 320.5Z" fill="#8f8d87"/><path d="M414.5 318.9L407.1 317.9L406.7 321.5L413.9 322.5Z" fill="#8e8d88"/><path d="M414.2 320.9L406.9 319.9L406.5 323.5L413.6 324.5Z" fill="#8e8e88"/><path d="M413.9 322.9L406.7 321.9L406.3 325.5L413.3 326.5Z" fill="#8e8e88"/><path d="M413.5 324.9L406.5 323.9L406.1 327.5L413.0 328.5Z" fill="#8d8e89"/><path d="M413.2 326.9L406.3 325.9L405.9 329.6L412.7 330.4Z" fill="#8c8c87"/><path d="M412.9 328.8L406.1 327.9L405.7 331.6L412.3 332.4Z" fill="#8a8a85"/><path d="M412.6 330.8L405.9 330.0L405.5 333.6L412.0 334.4Z" fill="#888883"/><path d="M412.3 332.8L405.7 332.0L405.3 335.6L411.7 336.4Z" fill="#868681"/><path d="M411.9 334.8L405.5 334.0L405.1 337.6L411.4 338.4Z" fill="#84847f"/><path d="M411.6 336.8L405.2 336.0L404.9 339.6L411.1 340.4Z" fill="#807f7a"/><path d="M411.3 338.8L405.0 338.0L404.7 341.6L410.7 342.4Z" fill="#7b7a75"/><path d="M411.0 340.8L404.8 340.0L404.5 343.6L410.4 344.4Z" fill="#767570"/><path d="M410.7 342.8L404.6 342.0L404.3 345.6L410.1 346.4Z" fill="#72706b"/><path d="M410.3 344.8L404.4 344.0L404.0 347.6L409.8 348.4Z" fill="#6d6b66"/><path d="M410.0 346.8L404.2 346.0L403.8 349.6L409.5 350.4Z" fill="#6b6964"/><path d="M409.7 348.8L404.0 348.0L403.6 351.6L409.1 352.4Z" fill="#686661"/><path d="M409.4 350.8L403.8 350.0L403.4 353.7L408.8 354.4Z" fill="#66645f"/><path d="M409.1 352.8L403.6 352.0L403.2 355.7L408.5 356.4Z" fill="#63615c"/><path d="M408.8 354.8L403.4 354.1L403.0 357.7L408.2 358.4Z" fill="#615f5a"/><path d="M408.4 356.8L403.2 356.1L402.8 359.7L407.9 360.3Z" fill="#5e5c57"/><path d="M408.1 358.7L403.0 358.1L402.6 361.7L407.5 362.3Z" fill="#5d5b56"/><path d="M407.8 360.7L402.8 360.1L402.4 363.7L407.2 364.3Z" fill="#5c5a55"/><path d="M407.5 362.7L402.6 362.1L402.2 365.7L406.9 366.3Z" fill="#5b5954"/><path d="M407.2 364.7L402.4 364.1L402.0 367.7L406.6 368.3Z" fill="#5a5853"/><path d="M406.8 366.7L402.1 366.1L401.8 369.7L406.3 370.3Z" fill="#5a5853"/><path d="M406.5 368.7L401.9 368.1L401.6 371.7L405.9 372.3Z" fill="#595752"/><path d="M406.2 370.7L401.7 370.1L401.4 373.7L405.6 374.3Z" fill="#595752"/><path d="M405.9 372.7L401.5 372.1L401.2 375.7L405.3 376.3Z" fill="#5b5954"/><path d="M405.6 374.7L401.3 374.1L401.0 377.8L405.0 378.3Z" fill="#5d5b56"/><path d="M405.2 376.7L401.1 376.1L400.7 379.8L404.7 380.3Z" fill="#5f5d58"/><path d="M404.9 378.7L400.9 378.2L400.5 381.8L404.3 382.3Z" fill="#615f5a"/><path d="M408.0 316.0L400.5 315.4L400.3 319.1L407.6 319.6Z" fill="#8d8b86"/><path d="M407.8 318.0L400.4 317.4L400.2 321.1L407.4 321.6Z" fill="#8d8b86"/><path d="M407.6 320.0L400.3 319.5L400.1 323.1L407.2 323.6Z" fill="#8c8b86"/><path d="M407.4 322.0L400.2 321.5L400.1 325.1L407.0 325.6Z" fill="#8c8b86"/><path d="M407.2 324.0L400.1 323.5L400.0 327.1L406.8 327.6Z" fill="#8b8b86"/><path d="M407.0 326.0L400.0 325.5L399.9 329.1L406.6 329.6Z" fill="#8a8a85"/><path d="M406.8 328.0L399.9 327.5L399.8 331.2L406.4 331.6Z" fill="#888883"/><path d="M406.6 330.0L399.9 329.5L399.7 333.2L406.2 333.6Z" fill="#868681"/><path d="M406.4 332.0L399.8 331.6L399.6 335.2L406.0 335.7Z" fill="#84847f"/><path d="M406.1 334.0L399.7 333.6L399.5 337.2L405.8 337.7Z" fill="#82827d"/><path d="M405.9 336.1L399.6 335.6L399.4 339.2L405.6 339.7Z" fill="#7e7d78"/><path d="M405.7 338.1L399.5 337.6L399.4 341.2L405.4 341.7Z" fill="#797873"/><path d="M405.5 340.1L399.4 339.6L399.3 343.3L405.2 343.7Z" fill="#75736e"/><path d="M405.3 342.1L399.3 341.6L399.2 345.3L404.9 345.7Z" fill="#706e69"/><path d="M405.1 344.1L399.3 343.7L399.1 347.3L404.7 347.7Z" fill="#6c6a65"/><path d="M404.9 346.1L399.2 345.7L399.0 349.3L404.5 349.7Z" fill="#6a6863"/><path d="M404.7 348.1L399.1 347.7L398.9 351.3L404.3 351.7Z" fill="#676560"/><path d="M404.5 350.1L399.0 349.7L398.8 353.3L404.1 353.7Z" fill="#65635e"/><path d="M404.3 352.1L398.9 351.7L398.7 355.4L403.9 355.7Z" fill="#63615c"/><path d="M404.1 354.1L398.8 353.7L398.7 357.4L403.7 357.7Z" fill="#605e59"/><path d="M403.9 356.1L398.7 355.8L398.6 359.4L403.5 359.7Z" fill="#5e5c57"/><path d="M403.7 358.1L398.6 357.8L398.5 361.4L403.3 361.8Z" fill="#5d5b56"/><path d="M403.5 360.2L398.6 359.8L398.4 363.4L403.1 363.8Z" fill="#5c5a55"/><path d="M403.3 362.2L398.5 361.8L398.3 365.4L402.9 365.8Z" fill="#5b5954"/><path d="M403.1 364.2L398.4 363.8L398.2 367.5L402.7 367.8Z" fill="#5a5853"/><path d="M402.8 366.2L398.3 365.8L398.1 369.5L402.5 369.8Z" fill="#5a5853"/><path d="M402.6 368.2L398.2 367.9L398.1 371.5L402.3 371.8Z" fill="#595752"/><path d="M402.4 370.2L398.1 369.9L398.0 373.5L402.1 373.8Z" fill="#595752"/><path d="M402.2 372.2L398.0 371.9L397.9 375.5L401.9 375.8Z" fill="#5b5954"/><path d="M402.0 374.2L397.9 373.9L397.8 377.5L401.6 377.8Z" fill="#5d5b56"/><path d="M401.8 376.2L397.9 375.9L397.7 379.6L401.4 379.8Z" fill="#5f5d58"/><path d="M401.6 378.2L397.8 377.9L397.6 381.6L401.2 381.8Z" fill="#615f5a"/><path d="M401.2 315.5L393.6 315.4L393.7 319.0L401.0 319.1Z" fill="#8c8a84"/><path d="M401.1 317.5L393.7 317.4L393.7 321.0L400.9 321.1Z" fill="#8b8a84"/><path d="M401.0 319.5L393.7 319.4L393.8 323.0L400.8 323.1Z" fill="#8a8984"/><path d="M400.9 321.5L393.8 321.4L393.8 325.0L400.8 325.1Z" fill="#8a8984"/><path d="M400.8 323.5L393.8 323.4L393.9 327.1L400.7 327.1Z" fill="#898984"/><path d="M400.7 325.5L393.8 325.5L393.9 329.1L400.6 329.2Z" fill="#878883"/><path d="M400.6 327.6L393.9 327.5L393.9 331.1L400.5 331.2Z" fill="#868681"/><path d="M400.6 329.6L393.9 329.5L394.0 333.1L400.4 333.2Z" fill="#84847f"/><path d="M400.5 331.6L393.9 331.5L394.0 335.1L400.3 335.2Z" fill="#82817c"/><path d="M400.4 333.6L394.0 333.5L394.1 337.2L400.2 337.2Z" fill="#807f7a"/><path d="M400.3 335.6L394.0 335.5L394.1 339.2L400.1 339.3Z" fill="#7b7b76"/><path d="M400.2 337.6L394.1 337.6L394.1 341.2L400.1 341.3Z" fill="#777671"/><path d="M400.1 339.7L394.1 339.6L394.2 343.2L400.0 343.3Z" fill="#73716c"/><path d="M400.0 341.7L394.1 341.6L394.2 345.2L399.9 345.3Z" fill="#6f6d68"/><path d="M400.0 343.7L394.2 343.6L394.2 347.2L399.8 347.3Z" fill="#6b6964"/><path d="M399.9 345.7L394.2 345.6L394.3 349.3L399.7 349.3Z" fill="#696762"/><path d="M399.8 347.7L394.3 347.7L394.3 351.3L399.6 351.4Z" fill="#66645f"/><path d="M399.7 349.7L394.3 349.7L394.4 353.3L399.5 353.4Z" fill="#64625d"/><path d="M399.6 351.8L394.3 351.7L394.4 355.3L399.4 355.4Z" fill="#62605b"/><path d="M399.5 353.8L394.4 353.7L394.4 357.3L399.4 357.4Z" fill="#605e59"/><path d="M399.4 355.8L394.4 355.7L394.5 359.4L399.3 359.4Z" fill="#5d5b56"/><path d="M399.3 357.8L394.4 357.7L394.5 361.4L399.2 361.4Z" fill="#5c5a55"/><path d="M399.3 359.8L394.5 359.8L394.6 363.4L399.1 363.5Z" fill="#5c5a55"/><path d="M399.2 361.8L394.5 361.8L394.6 365.4L399.0 365.5Z" fill="#5b5954"/><path d="M399.1 363.9L394.6 363.8L394.6 367.4L398.9 367.5Z" fill="#5a5853"/><path d="M399.0 365.9L394.6 365.8L394.7 369.5L398.8 369.5Z" fill="#5a5853"/><path d="M398.9 367.9L394.6 367.8L394.7 371.5L398.8 371.5Z" fill="#595752"/><path d="M398.8 369.9L394.7 369.9L394.7 373.5L398.7 373.5Z" fill="#595752"/><path d="M398.7 371.9L394.7 371.9L394.8 375.5L398.6 375.6Z" fill="#5b5954"/><path d="M398.6 373.9L394.8 373.9L394.8 377.5L398.5 377.6Z" fill="#5d5b56"/><path d="M398.6 376.0L394.8 375.9L394.9 379.5L398.4 379.6Z" fill="#5f5d58"/><path d="M398.5 378.0L394.8 377.9L394.9 381.6L398.3 381.6Z" fill="#62605b"/><path d="M394.3 315.3L386.8 315.7L387.1 319.4L394.4 319.0Z" fill="#8a8882"/><path d="M394.4 317.4L387.0 317.7L387.3 321.4L394.4 321.0Z" fill="#898882"/><path d="M394.4 319.4L387.2 319.8L387.5 323.4L394.5 323.0Z" fill="#888782"/><path d="M394.5 321.4L387.3 321.8L387.6 325.4L394.5 325.0Z" fill="#888782"/><path d="M394.5 323.4L387.5 323.8L387.8 327.4L394.6 327.1Z" fill="#878782"/><path d="M394.5 325.4L387.7 325.8L388.0 329.4L394.6 329.1Z" fill="#858580"/><path d="M394.6 327.5L387.8 327.8L388.1 331.4L394.6 331.1Z" fill="#84837e"/><path d="M394.6 329.5L388.0 329.8L388.3 333.4L394.7 333.1Z" fill="#81817c"/><path d="M394.6 331.5L388.2 331.8L388.5 335.4L394.7 335.1Z" fill="#7f7f7a"/><path d="M394.7 333.5L388.3 333.8L388.6 337.5L394.8 337.1Z" fill="#7d7d78"/><path d="M394.7 335.5L388.5 335.8L388.8 339.5L394.8 339.2Z" fill="#797974"/><path d="M394.8 337.5L388.7 337.9L389.0 341.5L394.8 341.2Z" fill="#75746f"/><path d="M394.8 339.6L388.9 339.9L389.2 343.5L394.9 343.2Z" fill="#71706b"/><path d="M394.8 341.6L389.0 341.9L389.3 345.5L394.9 345.2Z" fill="#6d6c67"/><path d="M394.9 343.6L389.2 343.9L389.5 347.5L394.9 347.2Z" fill="#6a6863"/><path d="M394.9 345.6L389.4 345.9L389.7 349.5L395.0 349.3Z" fill="#686661"/><path d="M395.0 347.6L389.5 347.9L389.8 351.5L395.0 351.3Z" fill="#65635e"/><path d="M395.0 349.7L389.7 349.9L390.0 353.6L395.1 353.3Z" fill="#63615c"/><path d="M395.0 351.7L389.9 351.9L390.2 355.6L395.1 355.3Z" fill="#615f5a"/><path d="M395.1 353.7L390.0 354.0L390.3 357.6L395.1 357.3Z" fill="#5f5d58"/><path d="M395.1 355.7L390.2 356.0L390.5 359.6L395.2 359.3Z" fill="#5d5b56"/><path d="M395.1 357.7L390.4 358.0L390.7 361.6L395.2 361.4Z" fill="#5c5a55"/><path d="M395.2 359.8L390.5 360.0L390.8 363.6L395.3 363.4Z" fill="#5b5954"/><path d="M395.2 361.8L390.7 362.0L391.0 365.6L395.3 365.4Z" fill="#5b5954"/><path d="M395.3 363.8L390.9 364.0L391.2 367.6L395.3 367.4Z" fill="#5a5853"/><path d="M395.3 365.8L391.1 366.0L391.4 369.6L395.4 369.4Z" fill="#595752"/><path d="M395.3 367.8L391.2 368.0L391.5 371.7L395.4 371.5Z" fill="#595752"/><path d="M395.4 369.8L391.4 370.0L391.7 373.7L395.4 373.5Z" fill="#595752"/><path d="M395.4 371.9L391.6 372.1L391.9 375.7L395.5 375.5Z" fill="#5a5853"/><path d="M395.5 373.9L391.7 374.1L392.0 377.7L395.5 377.5Z" fill="#5d5b56"/><path d="M395.5 375.9L391.9 376.1L392.2 379.7L395.6 379.5Z" fill="#5f5d58"/><path d="M395.5 377.9L392.1 378.1L392.4 381.7L395.6 381.5Z" fill="#62605b"/><path d="M387.5 315.7L380.1 316.6L380.6 320.1L387.8 319.3Z" fill="#888680"/><path d="M387.7 317.7L380.4 318.5L380.9 322.1L388.0 321.3Z" fill="#878680"/><path d="M387.9 319.7L380.7 320.5L381.2 324.1L388.2 323.3Z" fill="#868580"/><path d="M388.0 321.7L381.0 322.5L381.5 326.1L388.3 325.3Z" fill="#868580"/><path d="M388.2 323.7L381.3 324.5L381.8 328.1L388.5 327.3Z" fill="#85847f"/><path d="M388.4 325.7L381.6 326.5L382.1 330.1L388.7 329.4Z" fill="#83837e"/><path d="M388.5 327.7L381.9 328.5L382.4 332.1L388.8 331.4Z" fill="#81817c"/><path d="M388.7 329.8L382.2 330.5L382.7 334.1L389.0 333.4Z" fill="#7f7f7a"/><path d="M388.9 331.8L382.5 332.5L383.0 336.1L389.2 335.4Z" fill="#7d7d78"/><path d="M389.0 333.8L382.8 334.5L383.3 338.1L389.3 337.4Z" fill="#7b7a75"/><path d="M389.2 335.8L383.1 336.5L383.6 340.1L389.5 339.4Z" fill="#777671"/><path d="M389.4 337.8L383.4 338.5L383.9 342.1L389.7 341.4Z" fill="#73726d"/><path d="M389.5 339.8L383.7 340.5L384.3 344.1L389.9 343.4Z" fill="#6f6e69"/><path d="M389.7 341.8L384.0 342.5L384.6 346.1L390.0 345.4Z" fill="#6c6a65"/><path d="M389.9 343.8L384.3 344.5L384.9 348.1L390.2 347.5Z" fill="#696762"/><path d="M390.1 345.8L384.6 346.5L385.2 350.1L390.4 349.5Z" fill="#676560"/><path d="M390.2 347.9L384.9 348.5L385.5 352.1L390.5 351.5Z" fill="#64625d"/><path d="M390.4 349.9L385.2 350.5L385.8 354.1L390.7 353.5Z" fill="#62605b"/><path d="M390.6 351.9L385.5 352.5L386.1 356.1L390.9 355.5Z" fill="#605e59"/><path d="M390.7 353.9L385.8 354.5L386.4 358.1L391.0 357.5Z" fill="#5e5c57"/><path d="M390.9 355.9L386.1 356.5L386.7 360.1L391.2 359.5Z" fill="#5c5a55"/><path d="M391.1 357.9L386.4 358.5L387.0 362.1L391.4 361.5Z" fill="#5b5954"/><path d="M391.2 359.9L386.7 360.5L387.3 364.1L391.5 363.5Z" fill="#5b5954"/><path d="M391.4 361.9L387.1 362.5L387.6 366.0L391.7 365.6Z" fill="#5a5853"/><path d="M391.6 364.0L387.4 364.4L387.9 368.0L391.9 367.6Z" fill="#5a5853"/><path d="M391.7 366.0L387.7 366.4L388.2 370.0L392.1 369.6Z" fill="#595752"/><path d="M391.9 368.0L388.0 368.4L388.5 372.0L392.2 371.6Z" fill="#595752"/><path d="M392.1 370.0L388.3 370.4L388.8 374.0L392.4 373.6Z" fill="#595752"/><path d="M392.3 372.0L388.6 372.4L389.1 376.0L392.6 375.6Z" fill="#5a5853"/><path d="M392.4 374.0L388.9 374.4L389.4 378.0L392.7 377.6Z" fill="#5d5b56"/><path d="M392.6 376.0L389.2 376.4L389.7 380.0L392.9 379.6Z" fill="#5f5d58"/><path d="M392.8 378.0L389.5 378.4L390.0 382.0L393.1 381.7Z" fill="#62605b"/><path d="M380.7 316.4L373.4 317.8L374.2 321.4L381.3 320.0Z" fill="#86857f"/><path d="M381.0 318.4L373.8 319.8L374.6 323.4L381.6 322.0Z" fill="#85847e"/><path d="M381.4 320.4L374.2 321.8L375.0 325.3L381.9 324.0Z" fill="#84837e"/><path d="M381.7 322.4L374.7 323.7L375.5 327.3L382.2 326.0Z" fill="#84837d"/><path d="M382.0 324.4L375.1 325.7L375.9 329.3L382.5 328.0Z" fill="#83827d"/><path d="M382.3 326.4L375.6 327.7L376.4 331.2L382.8 330.0Z" fill="#81817c"/><path d="M382.6 328.4L376.0 329.7L376.8 333.2L383.1 332.0Z" fill="#7f7f7a"/><path d="M382.9 330.4L376.5 331.6L377.3 335.2L383.4 334.0Z" fill="#7d7c77"/><path d="M383.2 332.4L376.9 333.6L377.7 337.1L383.7 336.0Z" fill="#7b7a75"/><path d="M383.5 334.4L377.3 335.6L378.1 339.1L384.0 338.0Z" fill="#797873"/><path d="M383.8 336.4L377.8 337.5L378.6 341.1L384.3 340.0Z" fill="#75746f"/><path d="M384.1 338.4L378.2 339.5L379.0 343.0L384.6 342.0Z" fill="#72706b"/><path d="M384.4 340.4L378.7 341.5L379.5 345.0L384.9 344.0Z" fill="#6e6c67"/><path d="M384.7 342.4L379.1 343.4L379.9 347.0L385.2 346.0Z" fill="#6a6964"/><path d="M385.0 344.4L379.6 345.4L380.4 349.0L385.6 348.0Z" fill="#676560"/><path d="M385.3 346.4L380.0 347.4L380.8 350.9L385.9 350.0Z" fill="#65635e"/><path d="M385.6 348.4L380.4 349.4L381.2 352.9L386.2 352.0Z" fill="#64625d"/><path d="M385.9 350.4L380.9 351.3L381.7 354.9L386.5 354.0Z" fill="#62605b"/><path d="M386.2 352.4L381.3 353.3L382.1 356.8L386.8 356.0Z" fill="#605e59"/><path d="M386.5 354.4L381.8 355.3L382.6 358.8L387.1 358.0Z" fill="#5e5c57"/><path d="M386.8 356.4L382.2 357.2L383.0 360.8L387.4 360.0Z" fill="#5c5a55"/><path d="M387.1 358.4L382.7 359.2L383.5 362.7L387.7 361.9Z" fill="#5b5954"/><path d="M387.4 360.4L383.1 361.2L383.9 364.7L388.0 363.9Z" fill="#5b5954"/><path d="M387.7 362.3L383.5 363.1L384.3 366.7L388.3 365.9Z" fill="#5a5853"/><path d="M388.1 364.3L384.0 365.1L384.8 368.7L388.6 367.9Z" fill="#5a5853"/><path d="M388.4 366.3L384.4 367.1L385.2 370.6L388.9 369.9Z" fill="#595752"/><path d="M388.7 368.3L384.9 369.0L385.7 372.6L389.2 371.9Z" fill="#595752"/><path d="M389.0 370.3L385.3 371.0L386.1 374.6L389.5 373.9Z" fill="#595752"/><path d="M389.3 372.3L385.8 373.0L386.6 376.5L389.8 375.9Z" fill="#5a5853"/><path d="M389.6 374.3L386.2 375.0L387.0 378.5L390.1 377.9Z" fill="#5d5b56"/><path d="M389.9 376.3L386.6 376.9L387.4 380.5L390.4 379.9Z" fill="#605e59"/><path d="M390.2 378.3L387.1 378.9L387.9 382.4L390.7 381.9Z" fill="#62605b"/><path d="M374.0 317.7L366.8 319.6L367.8 323.1L374.8 321.2Z" fill="#85837d"/><path d="M374.5 319.7L367.3 321.5L368.4 325.0L375.3 323.2Z" fill="#84827c"/><path d="M374.9 321.6L367.9 323.5L369.0 326.9L375.7 325.2Z" fill="#83817c"/><path d="M375.4 323.6L368.5 325.4L369.6 328.9L376.2 327.1Z" fill="#82817b"/><path d="M375.8 325.6L369.1 327.3L370.1 330.8L376.6 329.1Z" fill="#80807b"/><path d="M376.3 327.5L369.7 329.3L370.7 332.7L377.1 331.1Z" fill="#7f7e79"/><path d="M376.7 329.5L370.3 331.2L371.3 334.7L377.5 333.0Z" fill="#7d7c77"/><path d="M377.1 331.5L370.8 333.1L371.9 336.6L377.9 335.0Z" fill="#7b7a75"/><path d="M377.6 333.4L371.4 335.1L372.5 338.5L378.4 337.0Z" fill="#797873"/><path d="M378.0 335.4L372.0 337.0L373.1 340.5L378.8 339.0Z" fill="#777671"/><path d="M378.5 337.4L372.6 338.9L373.6 342.4L379.3 340.9Z" fill="#73726d"/><path d="M378.9 339.4L373.2 340.9L374.2 344.3L379.7 342.9Z" fill="#706e69"/><path d="M379.4 341.3L373.8 342.8L374.8 346.3L380.2 344.9Z" fill="#6c6a65"/><path d="M379.8 343.3L374.3 344.7L375.4 348.2L380.6 346.8Z" fill="#696762"/><path d="M380.2 345.3L374.9 346.7L376.0 350.1L381.0 348.8Z" fill="#66645f"/><path d="M380.7 347.2L375.5 348.6L376.6 352.1L381.5 350.8Z" fill="#64625d"/><path d="M381.1 349.2L376.1 350.5L377.1 354.0L381.9 352.7Z" fill="#63615c"/><path d="M381.6 351.2L376.7 352.5L377.7 355.9L382.4 354.7Z" fill="#615f5a"/><path d="M382.0 353.1L377.3 354.4L378.3 357.9L382.8 356.7Z" fill="#5f5d58"/><path d="M382.5 355.1L377.8 356.3L378.9 359.8L383.3 358.7Z" fill="#5d5b56"/><path d="M382.9 357.1L378.4 358.3L379.5 361.7L383.7 360.6Z" fill="#5b5954"/><path d="M383.3 359.0L379.0 360.2L380.1 363.7L384.1 362.6Z" fill="#5b5954"/><path d="M383.8 361.0L379.6 362.1L380.6 365.6L384.6 364.6Z" fill="#5a5853"/><path d="M384.2 363.0L380.2 364.0L381.2 367.5L385.0 366.5Z" fill="#5a5853"/><path d="M384.7 365.0L380.8 366.0L381.8 369.5L385.5 368.5Z" fill="#5a5853"/><path d="M385.1 366.9L381.3 367.9L382.4 371.4L385.9 370.5Z" fill="#595752"/><path d="M385.6 368.9L381.9 369.8L383.0 373.3L386.4 372.4Z" fill="#595752"/><path d="M386.0 370.9L382.5 371.8L383.6 375.3L386.8 374.4Z" fill="#595752"/><path d="M386.4 372.8L383.1 373.7L384.1 377.2L387.2 376.4Z" fill="#5a5853"/><path d="M386.9 374.8L383.7 375.6L384.7 379.1L387.7 378.3Z" fill="#5d5b56"/><path d="M387.3 376.8L384.3 377.6L385.3 381.1L388.1 380.3Z" fill="#605e59"/><path d="M387.8 378.7L384.8 379.5L385.9 383.0L388.6 382.3Z" fill="#63615c"/><path d="M367.4 319.4L360.3 321.8L361.6 325.2L368.5 322.9Z" fill="#83817b"/><path d="M368.0 321.3L361.0 323.7L362.3 327.1L369.1 324.8Z" fill="#82807a"/><path d="M368.6 323.3L361.8 325.6L363.1 329.0L369.7 326.7Z" fill="#817f7a"/><path d="M369.2 325.2L362.5 327.5L363.8 330.9L370.2 328.7Z" fill="#807e79"/><path d="M369.8 327.1L363.2 329.4L364.5 332.8L370.8 330.6Z" fill="#7e7d78"/><path d="M370.4 329.1L363.9 331.3L365.2 334.6L371.4 332.5Z" fill="#7d7c77"/><path d="M370.9 331.0L364.7 333.1L366.0 336.5L372.0 334.5Z" fill="#7b7a75"/><path d="M371.5 332.9L365.4 335.0L366.7 338.4L372.6 336.4Z" fill="#797873"/><path d="M372.1 334.9L366.1 336.9L367.4 340.3L373.2 338.3Z" fill="#777570"/><path d="M372.7 336.8L366.8 338.8L368.1 342.2L373.7 340.3Z" fill="#74736e"/><path d="M373.3 338.7L367.6 340.7L368.9 344.1L374.3 342.2Z" fill="#71706b"/><path d="M373.9 340.7L368.3 342.6L369.6 346.0L374.9 344.1Z" fill="#6e6c67"/><path d="M374.4 342.6L369.0 344.4L370.3 347.8L375.5 346.1Z" fill="#6a6964"/><path d="M375.0 344.5L369.7 346.3L371.0 349.7L376.1 348.0Z" fill="#686661"/><path d="M375.6 346.5L370.4 348.2L371.7 351.6L376.6 349.9Z" fill="#65635e"/><path d="M376.2 348.4L371.2 350.1L372.5 353.5L377.2 351.9Z" fill="#63615c"/><path d="M376.8 350.3L371.9 352.0L373.2 355.4L377.8 353.8Z" fill="#62605b"/><path d="M377.3 352.3L372.6 353.9L373.9 357.3L378.4 355.7Z" fill="#605e59"/><path d="M377.9 354.2L373.3 355.8L374.6 359.1L379.0 357.7Z" fill="#5e5c57"/><path d="M378.5 356.1L374.1 357.6L375.4 361.0L379.6 359.6Z" fill="#5c5a55"/><path d="M379.1 358.0L374.8 359.5L376.1 362.9L380.1 361.5Z" fill="#5b5954"/><path d="M379.7 360.0L375.5 361.4L376.8 364.8L380.7 363.5Z" fill="#5a5853"/><path d="M380.3 361.9L376.2 363.3L377.5 366.7L381.3 365.4Z" fill="#5a5853"/><path d="M380.8 363.8L377.0 365.2L378.3 368.6L381.9 367.3Z" fill="#5a5853"/><path d="M381.4 365.8L377.7 367.1L379.0 370.5L382.5 369.3Z" fill="#5a5853"/><path d="M382.0 367.7L378.4 368.9L379.7 372.3L383.1 371.2Z" fill="#595752"/><path d="M382.6 369.6L379.1 370.8L380.4 374.2L383.6 373.1Z" fill="#595752"/><path d="M383.2 371.6L379.9 372.7L381.2 376.1L384.2 375.1Z" fill="#595752"/><path d="M383.8 373.5L380.6 374.6L381.9 378.0L384.8 377.0Z" fill="#5a5853"/><path d="M384.3 375.4L381.3 376.5L382.6 379.9L385.4 378.9Z" fill="#5d5b56"/><path d="M384.9 377.4L382.0 378.4L383.3 381.8L386.0 380.9Z" fill="#605e59"/><path d="M385.5 379.3L382.7 380.3L384.1 383.6L386.6 382.8Z" fill="#63615c"/><path d="M361.0 321.6L354.0 324.5L355.6 327.8L362.3 325.0Z" fill="#817f79"/><path d="M361.7 323.5L354.9 326.4L356.5 329.7L363.0 326.9Z" fill="#807e79"/><path d="M362.4 325.4L355.8 328.2L357.3 331.5L363.7 328.7Z" fill="#7f7d78"/><path d="M363.1 327.2L356.6 330.0L358.2 333.3L364.4 330.6Z" fill="#7e7c77"/><path d="M363.9 329.1L357.5 331.8L359.0 335.1L365.2 332.5Z" fill="#7c7b76"/><path d="M364.6 331.0L358.4 333.7L359.9 337.0L365.9 334.4Z" fill="#7b7a75"/><path d="M365.3 332.9L359.2 335.5L360.8 338.8L366.6 336.3Z" fill="#797873"/><path d="M366.0 334.8L360.1 337.3L361.6 340.6L367.3 338.2Z" fill="#777570"/><path d="M366.8 336.7L360.9 339.1L362.5 342.4L368.1 340.1Z" fill="#74736e"/><path d="M367.5 338.5L361.8 341.0L363.4 344.3L368.8 341.9Z" fill="#72716c"/><path d="M368.2 340.4L362.7 342.8L364.2 346.1L369.5 343.8Z" fill="#6f6d68"/><path d="M368.9 342.3L363.5 344.6L365.1 347.9L370.2 345.7Z" fill="#6c6a65"/><path d="M369.7 344.2L364.4 346.4L365.9 349.7L371.0 347.6Z" fill="#696762"/><path d="M370.4 346.1L365.3 348.3L366.8 351.6L371.7 349.5Z" fill="#66645f"/><path d="M371.1 348.0L366.1 350.1L367.7 353.4L372.4 351.4Z" fill="#64625d"/><path d="M371.8 349.8L367.0 351.9L368.5 355.2L373.1 353.2Z" fill="#62605b"/><path d="M372.5 351.7L367.8 353.7L369.4 357.0L373.8 355.1Z" fill="#615f5a"/><path d="M373.3 353.6L368.7 355.6L370.3 358.9L374.6 357.0Z" fill="#5f5d58"/><path d="M374.0 355.5L369.6 357.4L371.1 360.7L375.3 358.9Z" fill="#5d5b56"/><path d="M374.7 357.4L370.4 359.2L372.0 362.5L376.0 360.8Z" fill="#5c5a55"/><path d="M375.4 359.3L371.3 361.0L372.8 364.3L376.7 362.7Z" fill="#5a5853"/><path d="M376.2 361.2L372.2 362.9L373.7 366.2L377.5 364.5Z" fill="#5a5853"/><path d="M376.9 363.0L373.0 364.7L374.6 368.0L378.2 366.4Z" fill="#5a5853"/><path d="M377.6 364.9L373.9 366.5L375.4 369.8L378.9 368.3Z" fill="#595752"/><path d="M378.3 366.8L374.7 368.3L376.3 371.6L379.6 370.2Z" fill="#595752"/><path d="M379.1 368.7L375.6 370.2L377.2 373.5L380.4 372.1Z" fill="#595752"/><path d="M379.8 370.6L376.5 372.0L378.0 375.3L381.1 374.0Z" fill="#595752"/><path d="M380.5 372.5L377.3 373.8L378.9 377.1L381.8 375.9Z" fill="#595752"/><path d="M381.2 374.3L378.2 375.6L379.7 378.9L382.5 377.7Z" fill="#5a5853"/><path d="M382.0 376.2L379.1 377.5L380.6 380.8L383.3 379.6Z" fill="#5d5b56"/><path d="M382.7 378.1L379.9 379.3L381.5 382.6L384.0 381.5Z" fill="#605e59"/><path d="M383.4 380.0L380.8 381.1L382.3 384.4L384.7 383.4Z" fill="#63615c"/><path d="M354.7 324.2L348.0 327.7L349.8 330.9L356.2 327.5Z" fill="#807e78"/><path d="M355.5 326.1L349.0 329.5L350.8 332.6L357.1 329.4Z" fill="#7e7c77"/><path d="M356.4 327.9L350.0 331.2L351.8 334.4L358.0 331.2Z" fill="#7d7b76"/><path d="M357.3 329.7L351.0 333.0L352.8 336.1L358.8 333.0Z" fill="#7c7a75"/><path d="M358.1 331.5L352.0 334.7L353.8 337.9L359.7 334.8Z" fill="#7a7974"/><path d="M359.0 333.4L353.0 336.5L354.8 339.6L360.5 336.7Z" fill="#797772"/><path d="M359.9 335.2L354.0 338.2L355.8 341.4L361.4 338.5Z" fill="#777671"/><path d="M360.7 337.0L355.0 340.0L356.8 343.2L362.3 340.3Z" fill="#75736e"/><path d="M361.6 338.8L356.0 341.8L357.8 344.9L363.1 342.1Z" fill="#72716c"/><path d="M362.4 340.7L357.0 343.5L358.8 346.7L364.0 344.0Z" fill="#706e69"/><path d="M363.3 342.5L358.0 345.3L359.8 348.4L364.9 345.8Z" fill="#6d6b66"/><path d="M364.2 344.3L359.0 347.0L360.8 350.2L365.7 347.6Z" fill="#6a6863"/><path d="M365.0 346.1L360.0 348.8L361.8 351.9L366.6 349.4Z" fill="#676560"/><path d="M365.9 348.0L361.0 350.5L362.8 353.7L367.4 351.3Z" fill="#65635e"/><path d="M366.8 349.8L362.0 352.3L363.8 355.4L368.3 353.1Z" fill="#63615c"/><path d="M367.6 351.6L363.0 354.0L364.8 357.2L369.2 354.9Z" fill="#615f5a"/><path d="M368.5 353.4L364.0 355.8L365.7 359.0L370.0 356.7Z" fill="#605e59"/><path d="M369.3 355.3L364.9 357.6L366.7 360.7L370.9 358.6Z" fill="#5e5c57"/><path d="M370.2 357.1L365.9 359.3L367.7 362.5L371.8 360.4Z" fill="#5d5b56"/><path d="M371.1 358.9L366.9 361.1L368.7 364.2L372.6 362.2Z" fill="#5b5954"/><path d="M371.9 360.7L367.9 362.8L369.7 366.0L373.5 364.0Z" fill="#5a5853"/><path d="M372.8 362.6L368.9 364.6L370.7 367.7L374.3 365.9Z" fill="#595752"/><path d="M373.6 364.4L369.9 366.3L371.7 369.5L375.2 367.7Z" fill="#595752"/><path d="M374.5 366.2L370.9 368.1L372.7 371.2L376.1 369.5Z" fill="#595752"/><path d="M375.4 368.0L371.9 369.8L373.7 373.0L376.9 371.3Z" fill="#595752"/><path d="M376.2 369.9L372.9 371.6L374.7 374.8L377.8 373.2Z" fill="#595752"/><path d="M377.1 371.7L373.9 373.3L375.7 376.5L378.7 375.0Z" fill="#595752"/><path d="M378.0 373.5L374.9 375.1L376.7 378.3L379.5 376.8Z" fill="#595752"/><path d="M378.8 375.3L375.9 376.9L377.7 380.0L380.4 378.6Z" fill="#5a5853"/><path d="M379.7 377.2L376.9 378.6L378.7 381.8L381.2 380.5Z" fill="#5d5b56"/><path d="M380.5 379.0L377.9 380.4L379.7 383.5L382.1 382.3Z" fill="#605e59"/><path d="M381.4 380.8L378.9 382.1L380.7 385.3L383.0 384.1Z" fill="#63615c"/><path d="M348.6 327.4L342.2 331.3L344.2 334.3L350.4 330.5Z" fill="#7e7c76"/><path d="M349.6 329.1L343.3 333.0L345.4 336.0L351.4 332.3Z" fill="#7c7a75"/><path d="M350.6 330.9L344.5 334.7L346.5 337.7L352.4 334.0Z" fill="#7b7974"/><path d="M351.6 332.6L345.6 336.4L347.6 339.4L353.4 335.8Z" fill="#7a7872"/><path d="M352.6 334.4L346.7 338.0L348.7 341.0L354.4 337.5Z" fill="#787671"/><path d="M353.6 336.1L347.8 339.7L349.9 342.7L355.4 339.3Z" fill="#777570"/><path d="M354.6 337.9L349.0 341.4L351.0 344.4L356.4 341.1Z" fill="#75736e"/><path d="M355.6 339.7L350.1 343.1L352.1 346.1L357.4 342.8Z" fill="#72716c"/><path d="M356.6 341.4L351.2 344.7L353.2 347.7L358.4 344.6Z" fill="#706e69"/><path d="M357.6 343.2L352.3 346.4L354.4 349.4L359.4 346.3Z" fill="#6e6c67"/><path d="M358.6 344.9L353.5 348.1L355.5 351.1L360.4 348.1Z" fill="#6b6964"/><path d="M359.6 346.7L354.6 349.8L356.6 352.8L361.4 349.8Z" fill="#686661"/><path d="M360.6 348.4L355.7 351.4L357.8 354.4L362.4 351.6Z" fill="#65635e"/><path d="M361.6 350.2L356.8 353.1L358.9 356.1L363.4 353.3Z" fill="#63615c"/><path d="M362.6 351.9L358.0 354.8L360.0 357.8L364.4 355.1Z" fill="#62605b"/><path d="M363.6 353.7L359.1 356.5L361.1 359.5L365.4 356.9Z" fill="#605e59"/><path d="M364.6 355.4L360.2 358.1L362.3 361.1L366.4 358.6Z" fill="#5f5d58"/><path d="M365.6 357.2L361.4 359.8L363.4 362.8L367.4 360.4Z" fill="#5d5b56"/><path d="M366.6 359.0L362.5 361.5L364.5 364.5L368.4 362.1Z" fill="#5c5a55"/><path d="M367.6 360.7L363.6 363.2L365.6 366.2L369.3 363.9Z" fill="#5b5954"/><path d="M368.6 362.5L364.7 364.8L366.8 367.8L370.3 365.6Z" fill="#595752"/><path d="M369.5 364.2L365.9 366.5L367.9 369.5L371.3 367.4Z" fill="#595752"/><path d="M370.5 366.0L367.0 368.2L369.0 371.2L372.3 369.1Z" fill="#595752"/><path d="M371.5 367.7L368.1 369.9L370.1 372.9L373.3 370.9Z" fill="#595752"/><path d="M372.5 369.5L369.2 371.5L371.3 374.5L374.3 372.6Z" fill="#595752"/><path d="M373.5 371.2L370.4 373.2L372.4 376.2L375.3 374.4Z" fill="#595752"/><path d="M374.5 373.0L371.5 374.9L373.5 377.9L376.3 376.2Z" fill="#595752"/><path d="M375.5 374.8L372.6 376.6L374.7 379.6L377.3 377.9Z" fill="#5a5853"/><path d="M376.5 376.5L373.8 378.2L375.8 381.2L378.3 379.7Z" fill="#5a5853"/><path d="M377.5 378.3L374.9 379.9L376.9 382.9L379.3 381.4Z" fill="#5d5b56"/><path d="M378.5 380.0L376.0 381.6L378.0 384.6L380.3 383.2Z" fill="#605e59"/><path d="M379.5 381.8L377.1 383.3L379.2 386.3L381.3 384.9Z" fill="#64625d"/><path d="M342.8 330.9L336.7 335.4L338.9 338.2L344.8 334.0Z" fill="#7c7a74"/><path d="M343.9 332.6L337.9 337.0L340.2 339.8L345.9 335.6Z" fill="#7b7973"/><path d="M345.0 334.3L339.2 338.6L341.4 341.4L347.1 337.3Z" fill="#797772"/><path d="M346.2 336.0L340.4 340.1L342.7 343.0L348.2 339.0Z" fill="#787670"/><path d="M347.3 337.6L341.7 341.7L343.9 344.6L349.3 340.7Z" fill="#76746f"/><path d="M348.4 339.3L342.9 343.3L345.2 346.2L350.4 342.3Z" fill="#74736d"/><path d="M349.5 341.0L344.2 344.9L346.4 347.7L351.6 344.0Z" fill="#73716c"/><path d="M350.7 342.7L345.4 346.5L347.7 349.3L352.7 345.7Z" fill="#706e69"/><path d="M351.8 344.3L346.7 348.1L348.9 350.9L353.8 347.4Z" fill="#6e6c67"/><path d="M352.9 346.0L347.9 349.7L350.2 352.5L355.0 349.0Z" fill="#6b6964"/><path d="M354.0 347.7L349.2 351.2L351.4 354.1L356.1 350.7Z" fill="#696762"/><path d="M355.2 349.4L350.4 352.8L352.7 355.7L357.2 352.4Z" fill="#66645f"/><path d="M356.3 351.0L351.7 354.4L353.9 357.3L358.3 354.1Z" fill="#64625d"/><path d="M357.4 352.7L352.9 356.0L355.2 358.8L359.5 355.7Z" fill="#62605b"/><path d="M358.6 354.4L354.2 357.6L356.4 360.4L360.6 357.4Z" fill="#605e59"/><path d="M359.7 356.1L355.4 359.2L357.7 362.0L361.7 359.1Z" fill="#5f5d58"/><path d="M360.8 357.7L356.7 360.8L358.9 363.6L362.8 360.8Z" fill="#5e5c57"/><path d="M361.9 359.4L357.9 362.3L360.2 365.2L364.0 362.4Z" fill="#5d5b56"/><path d="M363.1 361.1L359.2 363.9L361.4 366.8L365.1 364.1Z" fill="#5b5954"/><path d="M364.2 362.8L360.4 365.5L362.7 368.4L366.2 365.8Z" fill="#5a5853"/><path d="M365.3 364.4L361.7 367.1L363.9 369.9L367.3 367.5Z" fill="#595752"/><path d="M366.4 366.1L362.9 368.7L365.2 371.5L368.5 369.1Z" fill="#585651"/><path d="M367.6 367.8L364.2 370.3L366.4 373.1L369.6 370.8Z" fill="#595752"/><path d="M368.7 369.5L365.4 371.8L367.7 374.7L370.7 372.5Z" fill="#595752"/><path d="M369.8 371.1L366.7 373.4L368.9 376.3L371.9 374.2Z" fill="#595752"/><path d="M371.0 372.8L367.9 375.0L370.2 377.9L373.0 375.8Z" fill="#595752"/><path d="M372.1 374.5L369.2 376.6L371.4 379.5L374.1 377.5Z" fill="#595752"/><path d="M373.2 376.2L370.4 378.2L372.7 381.0L375.2 379.2Z" fill="#5a5853"/><path d="M374.3 377.8L371.7 379.8L373.9 382.6L376.4 380.9Z" fill="#5a5853"/><path d="M375.5 379.5L372.9 381.4L375.2 384.2L377.5 382.5Z" fill="#5d5b56"/><path d="M376.6 381.2L374.2 382.9L376.4 385.8L378.6 384.2Z" fill="#605e59"/><path d="M377.7 382.9L375.4 384.5L377.7 387.4L379.7 385.9Z" fill="#64625d"/><path d="M337.2 334.9L331.5 339.8L334.0 342.5L339.5 337.8Z" fill="#7a7873"/><path d="M338.5 336.5L332.9 341.3L335.3 344.0L340.7 339.4Z" fill="#797771"/><path d="M339.7 338.1L334.2 342.8L336.7 345.5L342.0 341.0Z" fill="#777570"/><path d="M341.0 339.7L335.6 344.3L338.1 347.0L343.2 342.6Z" fill="#76746e"/><path d="M342.2 341.3L337.0 345.8L339.4 348.5L344.5 344.1Z" fill="#74726d"/><path d="M343.5 342.9L338.3 347.3L340.8 349.9L345.7 345.7Z" fill="#73716b"/><path d="M344.7 344.5L339.7 348.8L342.1 351.4L347.0 347.3Z" fill="#716f6a"/><path d="M346.0 346.0L341.1 350.2L343.5 352.9L348.2 348.9Z" fill="#6e6c67"/><path d="M347.2 347.6L342.4 351.7L344.9 354.4L349.5 350.5Z" fill="#6c6a65"/><path d="M348.5 349.2L343.8 353.2L346.2 355.9L350.7 352.1Z" fill="#6a6863"/><path d="M349.7 350.8L345.1 354.7L347.6 357.4L352.0 353.7Z" fill="#676560"/><path d="M351.0 352.4L346.5 356.2L349.0 358.9L353.2 355.2Z" fill="#65635e"/><path d="M352.2 354.0L347.9 357.7L350.3 360.4L354.5 356.8Z" fill="#62605b"/><path d="M353.5 355.6L349.2 359.2L351.7 361.9L355.7 358.4Z" fill="#615f5a"/><path d="M354.7 357.1L350.6 360.7L353.0 363.3L357.0 360.0Z" fill="#605e58"/><path d="M356.0 358.7L352.0 362.2L354.4 364.8L358.2 361.6Z" fill="#5e5c57"/><path d="M357.2 360.3L353.3 363.6L355.8 366.3L359.5 363.2Z" fill="#5d5b56"/><path d="M358.5 361.9L354.7 365.1L357.1 367.8L360.7 364.8Z" fill="#5c5a55"/><path d="M359.7 363.5L356.0 366.6L358.5 369.3L362.0 366.3Z" fill="#5b5954"/><path d="M361.0 365.1L357.4 368.1L359.9 370.8L363.2 367.9Z" fill="#595752"/><path d="M362.2 366.7L358.8 369.6L361.2 372.3L364.5 369.5Z" fill="#585651"/><path d="M363.5 368.2L360.1 371.1L362.6 373.8L365.7 371.1Z" fill="#585651"/><path d="M364.7 369.8L361.5 372.6L364.0 375.3L367.0 372.7Z" fill="#585651"/><path d="M366.0 371.4L362.9 374.1L365.3 376.7L368.2 374.3Z" fill="#595752"/><path d="M367.2 373.0L364.2 375.6L366.7 378.2L369.5 375.9Z" fill="#595752"/><path d="M368.5 374.6L365.6 377.0L368.0 379.7L370.7 377.4Z" fill="#595752"/><path d="M369.7 376.2L367.0 378.5L369.4 381.2L372.0 379.0Z" fill="#595752"/><path d="M371.0 377.8L368.3 380.0L370.8 382.7L373.2 380.6Z" fill="#5a5853"/><path d="M372.2 379.3L369.7 381.5L372.1 384.2L374.5 382.2Z" fill="#5a5853"/><path d="M373.5 380.9L371.0 383.0L373.5 385.7L375.7 383.8Z" fill="#5d5b56"/><path d="M374.7 382.5L372.4 384.5L374.9 387.2L377.0 385.4Z" fill="#605e59"/><path d="M376.0 384.1L373.8 386.0L376.2 388.7L378.2 387.0Z" fill="#64625d"/><path d="M332.0 339.3L326.7 344.6L329.3 347.1L334.5 342.0Z" fill="#797771"/><path d="M333.4 340.8L328.1 346.0L330.8 348.5L335.8 343.5Z" fill="#777570"/><path d="M334.7 342.3L329.6 347.4L332.2 349.9L337.2 345.0Z" fill="#76746e"/><path d="M336.1 343.8L331.1 348.8L333.7 351.3L338.6 346.5Z" fill="#74726d"/><path d="M337.5 345.3L332.5 350.2L335.2 352.7L339.9 348.0Z" fill="#72706b"/><path d="M338.8 346.8L334.0 351.6L336.6 354.1L341.3 349.5Z" fill="#716f6a"/><path d="M340.2 348.3L335.5 352.9L338.1 355.4L342.7 351.0Z" fill="#6f6d68"/><path d="M341.6 349.8L336.9 354.3L339.6 356.8L344.0 352.5Z" fill="#6d6b66"/><path d="M342.9 351.3L338.4 355.7L341.0 358.2L345.4 353.9Z" fill="#6b6964"/><path d="M344.3 352.7L339.9 357.1L342.5 359.6L346.7 355.4Z" fill="#686661"/><path d="M345.7 354.2L341.3 358.5L344.0 361.0L348.1 356.9Z" fill="#66645f"/><path d="M347.0 355.7L342.8 359.9L345.4 362.4L349.5 358.4Z" fill="#64625d"/><path d="M348.4 357.2L344.3 361.3L346.9 363.8L350.8 359.9Z" fill="#62605a"/><path d="M349.7 358.7L345.7 362.6L348.4 365.1L352.2 361.4Z" fill="#605e59"/><path d="M351.1 360.2L347.2 364.0L349.9 366.5L353.6 362.9Z" fill="#5f5d57"/><path d="M352.5 361.7L348.7 365.4L351.3 367.9L354.9 364.4Z" fill="#5e5c56"/><path d="M353.8 363.2L350.1 366.8L352.8 369.3L356.3 365.9Z" fill="#5c5a55"/><path d="M355.2 364.7L351.6 368.2L354.3 370.7L357.7 367.3Z" fill="#5b5954"/><path d="M356.6 366.1L353.1 369.6L355.7 372.1L359.0 368.8Z" fill="#5a5853"/><path d="M357.9 367.6L354.5 371.0L357.2 373.5L360.4 370.3Z" fill="#595752"/><path d="M359.3 369.1L356.0 372.4L358.7 374.8L361.7 371.8Z" fill="#585651"/><path d="M360.7 370.6L357.5 373.7L360.1 376.2L363.1 373.3Z" fill="#585651"/><path d="M362.0 372.1L359.0 375.1L361.6 377.6L364.5 374.8Z" fill="#585651"/><path d="M363.4 373.6L360.4 376.5L363.1 379.0L365.8 376.3Z" fill="#585651"/><path d="M364.7 375.1L361.9 377.9L364.5 380.4L367.2 377.8Z" fill="#585651"/><path d="M366.1 376.6L363.4 379.3L366.0 381.8L368.6 379.3Z" fill="#595752"/><path d="M367.5 378.1L364.8 380.7L367.5 383.2L369.9 380.7Z" fill="#595752"/><path d="M368.8 379.5L366.3 382.1L368.9 384.5L371.3 382.2Z" fill="#5a5853"/><path d="M370.2 381.0L367.8 383.4L370.4 385.9L372.7 383.7Z" fill="#5a5853"/><path d="M371.6 382.5L369.2 384.8L371.9 387.3L374.0 385.2Z" fill="#5d5b56"/><path d="M372.9 384.0L370.7 386.2L373.3 388.7L375.4 386.7Z" fill="#605e59"/><path d="M374.3 385.5L372.2 387.6L374.8 390.1L376.7 388.2Z" fill="#63615c"/><path d="M327.1 344.1L322.2 349.8L325.0 352.1L329.8 346.6Z" fill="#777570"/><path d="M328.6 345.5L323.7 351.0L326.6 353.3L331.3 348.0Z" fill="#76746e"/><path d="M330.1 346.9L325.3 352.3L328.1 354.6L332.7 349.4Z" fill="#74726d"/><path d="M331.5 348.3L326.9 353.6L329.7 355.9L334.2 350.8Z" fill="#72706b"/><path d="M333.0 349.7L328.4 354.9L331.2 357.2L335.7 352.2Z" fill="#716f6a"/><path d="M334.5 351.1L330.0 356.2L332.8 358.5L337.1 353.5Z" fill="#6f6d68"/><path d="M336.0 352.4L331.5 357.4L334.4 359.7L338.6 354.9Z" fill="#6e6c67"/><path d="M337.4 353.8L333.1 358.7L335.9 361.0L340.1 356.3Z" fill="#6b6964"/><path d="M338.9 355.2L334.7 360.0L337.5 362.3L341.5 357.7Z" fill="#696762"/><path d="M340.4 356.6L336.2 361.3L339.0 363.6L343.0 359.1Z" fill="#676560"/><path d="M341.8 358.0L337.8 362.6L340.6 364.9L344.5 360.5Z" fill="#65635e"/><path d="M343.3 359.4L339.4 363.8L342.2 366.1L345.9 361.9Z" fill="#63615c"/><path d="M344.8 360.8L340.9 365.1L343.7 367.4L347.4 363.2Z" fill="#615f59"/><path d="M346.2 362.1L342.5 366.4L345.3 368.7L348.9 364.6Z" fill="#5f5d58"/><path d="M347.7 363.5L344.0 367.7L346.9 370.0L350.3 366.0Z" fill="#5e5c56"/><path d="M349.2 364.9L345.6 369.0L348.4 371.3L351.8 367.4Z" fill="#5d5b55"/><path d="M350.6 366.3L347.2 370.2L350.0 372.5L353.3 368.8Z" fill="#5c5a54"/><path d="M352.1 367.7L348.7 371.5L351.5 373.8L354.7 370.2Z" fill="#5b5953"/><path d="M353.6 369.1L350.3 372.8L353.1 375.1L356.2 371.6Z" fill="#5a5852"/><path d="M355.0 370.5L351.9 374.1L354.7 376.4L357.7 373.0Z" fill="#595751"/><path d="M356.5 371.8L353.4 375.3L356.2 377.7L359.1 374.3Z" fill="#585651"/><path d="M358.0 373.2L355.0 376.6L357.8 378.9L360.6 375.7Z" fill="#585650"/><path d="M359.4 374.6L356.5 377.9L359.3 380.2L362.1 377.1Z" fill="#585651"/><path d="M360.9 376.0L358.1 379.2L360.9 381.5L363.5 378.5Z" fill="#585651"/><path d="M362.4 377.4L359.7 380.5L362.5 382.8L365.0 379.9Z" fill="#585651"/><path d="M363.8 378.8L361.2 381.7L364.0 384.0L366.5 381.3Z" fill="#595752"/><path d="M365.3 380.2L362.8 383.0L365.6 385.3L367.9 382.7Z" fill="#595752"/><path d="M366.8 381.5L364.3 384.3L367.2 386.6L369.4 384.0Z" fill="#5a5853"/><path d="M368.2 382.9L365.9 385.6L368.7 387.9L370.9 385.4Z" fill="#5a5853"/><path d="M369.7 384.3L367.5 386.9L370.3 389.2L372.3 386.8Z" fill="#5c5a55"/><path d="M371.2 385.7L369.0 388.1L371.8 390.4L373.8 388.2Z" fill="#5f5d58"/><path d="M372.6 387.1L370.6 389.4L373.4 391.7L375.3 389.6Z" fill="#62605b"/><path d="M322.6 349.2L318.1 355.2L321.0 357.3L325.4 351.5Z" fill="#76746e"/><path d="M324.2 350.5L319.7 356.4L322.7 358.5L327.0 352.8Z" fill="#74726c"/><path d="M325.7 351.8L321.4 357.5L324.3 359.6L328.6 354.1Z" fill="#72706b"/><path d="M327.3 353.1L323.0 358.7L326.0 360.8L330.1 355.4Z" fill="#716f69"/><path d="M328.9 354.3L324.6 359.9L327.6 362.0L331.7 356.6Z" fill="#6f6d68"/><path d="M330.4 355.6L326.3 361.0L329.3 363.2L333.2 357.9Z" fill="#6e6c66"/><path d="M332.0 356.9L327.9 362.2L330.9 364.3L334.8 359.2Z" fill="#6c6a65"/><path d="M333.6 358.2L329.6 363.4L332.5 365.5L336.4 360.5Z" fill="#6a6863"/><path d="M335.1 359.5L331.2 364.6L334.2 366.7L337.9 361.8Z" fill="#686661"/><path d="M336.7 360.7L332.9 365.7L335.8 367.8L339.5 363.0Z" fill="#66645f"/><path d="M338.2 362.0L334.5 366.9L337.5 369.0L341.1 364.3Z" fill="#64625d"/><path d="M339.8 363.3L336.2 368.1L339.1 370.2L342.6 365.6Z" fill="#62605b"/><path d="M341.4 364.6L337.8 369.2L340.8 371.3L344.2 366.9Z" fill="#605e58"/><path d="M342.9 365.9L339.5 370.4L342.4 372.5L345.7 368.2Z" fill="#5e5c57"/><path d="M344.5 367.1L341.1 371.6L344.1 373.7L347.3 369.4Z" fill="#5d5b56"/><path d="M346.0 368.4L342.7 372.7L345.7 374.8L348.9 370.7Z" fill="#5c5a54"/><path d="M347.6 369.7L344.4 373.9L347.4 376.0L350.4 372.0Z" fill="#5b5953"/><path d="M349.2 371.0L346.0 375.1L349.0 377.2L352.0 373.3Z" fill="#5a5852"/><path d="M350.7 372.2L347.7 376.3L350.6 378.4L353.5 374.6Z" fill="#595752"/><path d="M352.3 373.5L349.3 377.4L352.3 379.5L355.1 375.8Z" fill="#595751"/><path d="M353.9 374.8L351.0 378.6L353.9 380.7L356.7 377.1Z" fill="#585650"/><path d="M355.4 376.1L352.6 379.8L355.6 381.9L358.2 378.4Z" fill="#575550"/><path d="M357.0 377.4L354.3 380.9L357.2 383.0L359.8 379.7Z" fill="#585650"/><path d="M358.5 378.6L355.9 382.1L358.9 384.2L361.4 380.9Z" fill="#585651"/><path d="M360.1 379.9L357.6 383.3L360.5 385.4L362.9 382.2Z" fill="#585651"/><path d="M361.7 381.2L359.2 384.4L362.2 386.5L364.5 383.5Z" fill="#595752"/><path d="M363.2 382.5L360.8 385.6L363.8 387.7L366.0 384.8Z" fill="#595752"/><path d="M364.8 383.8L362.5 386.8L365.5 388.9L367.6 386.1Z" fill="#5a5853"/><path d="M366.4 385.0L364.1 387.9L367.1 390.1L369.2 387.3Z" fill="#5a5853"/><path d="M367.9 386.3L365.8 389.1L368.7 391.2L370.7 388.6Z" fill="#5c5a55"/><path d="M369.5 387.6L367.4 390.3L370.4 392.4L372.3 389.9Z" fill="#5f5d58"/><path d="M371.0 388.9L369.1 391.5L372.0 393.6L373.8 391.2Z" fill="#62605b"/><path d="M318.5 354.6L314.3 360.9L317.4 362.8L321.4 356.7Z" fill="#74726c"/><path d="M320.1 355.8L316.0 362.0L319.1 363.9L323.1 357.9Z" fill="#72706b"/><path d="M321.8 357.0L317.8 363.0L320.8 364.9L324.7 359.1Z" fill="#716f69"/><path d="M323.4 358.1L319.5 364.1L322.6 366.0L326.4 360.2Z" fill="#6f6d68"/><path d="M325.0 359.3L321.2 365.1L324.3 367.0L328.0 361.4Z" fill="#6d6b66"/><path d="M326.7 360.5L322.9 366.2L326.0 368.1L329.7 362.6Z" fill="#6c6a65"/><path d="M328.3 361.6L324.6 367.3L327.7 369.2L331.3 363.8Z" fill="#6a6863"/><path d="M330.0 362.8L326.3 368.3L329.4 370.2L332.9 364.9Z" fill="#686661"/><path d="M331.6 364.0L328.1 369.4L331.2 371.3L334.6 366.1Z" fill="#66645f"/><path d="M333.3 365.2L329.8 370.4L332.9 372.3L336.2 367.3Z" fill="#65635d"/><path d="M334.9 366.3L331.5 371.5L334.6 373.4L337.9 368.4Z" fill="#63615b"/><path d="M336.6 367.5L333.2 372.5L336.3 374.5L339.5 369.6Z" fill="#615f59"/><path d="M338.2 368.7L334.9 373.6L338.0 375.5L341.2 370.8Z" fill="#5f5d58"/><path d="M339.9 369.8L336.7 374.7L339.8 376.6L342.8 371.9Z" fill="#5e5c56"/><path d="M341.5 371.0L338.4 375.7L341.5 377.6L344.5 373.1Z" fill="#5c5a55"/><path d="M343.1 372.2L340.1 376.8L343.2 378.7L346.1 374.3Z" fill="#5b5953"/><path d="M344.8 373.3L341.8 377.8L344.9 379.7L347.8 375.4Z" fill="#5a5852"/><path d="M346.4 374.5L343.5 378.9L346.6 380.8L349.4 376.6Z" fill="#5a5852"/><path d="M348.1 375.7L345.3 380.0L348.3 381.9L351.0 377.8Z" fill="#595751"/><path d="M349.7 376.9L347.0 381.0L350.1 382.9L352.7 379.0Z" fill="#585651"/><path d="M351.4 378.0L348.7 382.1L351.8 384.0L354.3 380.1Z" fill="#585650"/><path d="M353.0 379.2L350.4 383.1L353.5 385.0L356.0 381.3Z" fill="#575550"/><path d="M354.7 380.4L352.1 384.2L355.2 386.1L357.6 382.5Z" fill="#575550"/><path d="M356.3 381.5L353.8 385.3L356.9 387.2L359.3 383.6Z" fill="#575550"/><path d="M358.0 382.7L355.6 386.3L358.7 388.2L360.9 384.8Z" fill="#585651"/><path d="M359.6 383.9L357.3 387.4L360.4 389.3L362.6 386.0Z" fill="#585651"/><path d="M361.2 385.0L359.0 388.4L362.1 390.3L364.2 387.1Z" fill="#595752"/><path d="M362.9 386.2L360.7 389.5L363.8 391.4L365.9 388.3Z" fill="#5a5853"/><path d="M364.5 387.4L362.4 390.5L365.5 392.5L367.5 389.5Z" fill="#5b5954"/><path d="M366.2 388.5L364.2 391.6L367.3 393.5L369.1 390.7Z" fill="#5c5a55"/><path d="M367.8 389.7L365.9 392.7L369.0 394.6L370.8 391.8Z" fill="#5f5d58"/><path d="M369.5 390.9L367.6 393.7L370.7 395.6L372.4 393.0Z" fill="#615f5a"/><path d="M314.7 360.3L310.9 366.8L314.1 368.5L317.8 362.2Z" fill="#72706b"/><path d="M316.4 361.4L312.7 367.8L315.9 369.5L319.5 363.3Z" fill="#716f69"/><path d="M318.1 362.4L314.5 368.7L317.7 370.4L321.2 364.3Z" fill="#6f6d68"/><path d="M319.8 363.5L316.3 369.7L319.5 371.4L322.9 365.4Z" fill="#6d6b66"/><path d="M321.6 364.5L318.1 370.6L321.3 372.3L324.7 366.4Z" fill="#6c6a65"/><path d="M323.3 365.6L319.8 371.6L323.1 373.3L326.4 367.5Z" fill="#6a6863"/><path d="M325.0 366.7L321.6 372.5L324.8 374.2L328.1 368.6Z" fill="#696762"/><path d="M326.7 367.7L323.4 373.5L326.6 375.2L329.8 369.6Z" fill="#676560"/><path d="M328.4 368.8L325.2 374.4L328.4 376.1L331.5 370.7Z" fill="#65635e"/><path d="M330.2 369.8L327.0 375.4L330.2 377.1L333.2 371.7Z" fill="#63615c"/><path d="M331.9 370.9L328.8 376.3L332.0 378.0L335.0 372.8Z" fill="#62605a"/><path d="M333.6 372.0L330.5 377.3L333.8 379.0L336.7 373.9Z" fill="#605e58"/><path d="M335.3 373.0L332.3 378.2L335.5 379.9L338.4 374.9Z" fill="#5e5c57"/><path d="M337.0 374.1L334.1 379.2L337.3 380.9L340.1 376.0Z" fill="#5d5b55"/><path d="M338.7 375.1L335.9 380.1L339.1 381.8L341.8 377.0Z" fill="#5c5a54"/><path d="M340.5 376.2L337.7 381.1L340.9 382.8L343.6 378.1Z" fill="#5a5852"/><path d="M342.2 377.2L339.5 382.0L342.7 383.7L345.3 379.2Z" fill="#5a5851"/><path d="M343.9 378.3L341.2 383.0L344.4 384.7L347.0 380.2Z" fill="#595751"/><path d="M345.6 379.4L343.0 383.9L346.2 385.6L348.7 381.3Z" fill="#585651"/><path d="M347.3 380.4L344.8 384.9L348.0 386.6L350.4 382.3Z" fill="#585650"/><path d="M349.1 381.5L346.6 385.8L349.8 387.5L352.2 383.4Z" fill="#575550"/><path d="M350.8 382.5L348.4 386.8L351.6 388.5L353.9 384.4Z" fill="#575550"/><path d="M352.5 383.6L350.1 387.7L353.4 389.4L355.6 385.5Z" fill="#575550"/><path d="M354.2 384.7L351.9 388.6L355.1 390.4L357.3 386.6Z" fill="#575550"/><path d="M355.9 385.7L353.7 389.6L356.9 391.3L359.0 387.6Z" fill="#575550"/><path d="M357.7 386.8L355.5 390.5L358.7 392.3L360.7 388.7Z" fill="#585651"/><path d="M359.4 387.8L357.3 391.5L360.5 393.2L362.5 389.7Z" fill="#595752"/><path d="M361.1 388.9L359.1 392.4L362.3 394.1L364.2 390.8Z" fill="#5a5853"/><path d="M362.8 390.0L360.8 393.4L364.0 395.1L365.9 391.9Z" fill="#5b5954"/><path d="M364.5 391.0L362.6 394.3L365.8 396.0L367.6 392.9Z" fill="#5c5a55"/><path d="M366.2 392.1L364.4 395.3L367.6 397.0L369.3 394.0Z" fill="#5e5c57"/><path d="M368.0 393.1L366.2 396.2L369.4 397.9L371.1 395.0Z" fill="#605e59"/><path d="M311.3 366.2L307.9 373.0L311.2 374.5L314.5 367.9Z" fill="#716f69"/><path d="M313.0 367.2L309.8 373.8L313.1 375.3L316.3 368.9Z" fill="#6f6d68"/><path d="M314.8 368.1L311.6 374.7L314.9 376.2L318.0 369.8Z" fill="#6d6b66"/><path d="M316.6 369.1L313.4 375.5L316.7 377.0L319.8 370.8Z" fill="#6c6a65"/><path d="M318.4 370.0L315.3 376.3L318.6 377.9L321.6 371.7Z" fill="#6a6863"/><path d="M320.2 371.0L317.1 377.2L320.4 378.7L323.4 372.7Z" fill="#696762"/><path d="M322.0 371.9L318.9 378.0L322.2 379.5L325.2 373.6Z" fill="#676560"/><path d="M323.7 372.9L320.8 378.9L324.1 380.4L327.0 374.6Z" fill="#65635e"/><path d="M325.5 373.8L322.6 379.7L325.9 381.2L328.7 375.5Z" fill="#64625c"/><path d="M327.3 374.8L324.5 380.5L327.8 382.0L330.5 376.5Z" fill="#62605b"/><path d="M329.1 375.7L326.3 381.4L329.6 382.9L332.3 377.4Z" fill="#615f59"/><path d="M330.9 376.7L328.1 382.2L331.4 383.7L334.1 378.4Z" fill="#5f5d57"/><path d="M332.7 377.6L330.0 383.1L333.3 384.6L335.9 379.3Z" fill="#5e5c56"/><path d="M334.4 378.5L331.8 383.9L335.1 385.4L337.6 380.3Z" fill="#5c5a54"/><path d="M336.2 379.5L333.6 384.7L336.9 386.2L339.4 381.2Z" fill="#5b5953"/><path d="M338.0 380.4L335.5 385.6L338.8 387.1L341.2 382.2Z" fill="#5a5851"/><path d="M339.8 381.4L337.3 386.4L340.6 387.9L343.0 383.1Z" fill="#595750"/><path d="M341.6 382.3L339.1 387.3L342.4 388.8L344.8 384.0Z" fill="#585650"/><path d="M343.3 383.3L341.0 388.1L344.3 389.6L346.6 385.0Z" fill="#585650"/><path d="M345.1 384.2L342.8 388.9L346.1 390.4L348.3 385.9Z" fill="#585650"/><path d="M346.9 385.2L344.7 389.8L348.0 391.3L350.1 386.9Z" fill="#57554f"/><path d="M348.7 386.1L346.5 390.6L349.8 392.1L351.9 387.8Z" fill="#57554f"/><path d="M350.5 387.1L348.3 391.4L351.6 393.0L353.7 388.8Z" fill="#57554f"/><path d="M352.3 388.0L350.2 392.3L353.5 393.8L355.5 389.7Z" fill="#575550"/><path d="M354.0 389.0L352.0 393.1L355.3 394.6L357.2 390.7Z" fill="#575550"/><path d="M355.8 389.9L353.8 394.0L357.1 395.5L359.0 391.6Z" fill="#585651"/><path d="M357.6 390.9L355.7 394.8L359.0 396.3L360.8 392.6Z" fill="#595752"/><path d="M359.4 391.8L357.5 395.6L360.8 397.2L362.6 393.5Z" fill="#5a5853"/><path d="M361.2 392.8L359.3 396.5L362.6 398.0L364.4 394.5Z" fill="#5b5954"/><path d="M363.0 393.7L361.2 397.3L364.5 398.8L366.2 395.4Z" fill="#5c5a55"/><path d="M364.7 394.7L363.0 398.2L366.3 399.7L367.9 396.4Z" fill="#5e5c57"/><path d="M366.5 395.6L364.8 399.0L368.2 400.5L369.7 397.3Z" fill="#605e59"/><path d="M308.2 372.4L305.3 379.3L308.7 380.6L311.5 373.9Z" fill="#6f6d68"/><path d="M310.1 373.2L307.2 380.1L310.5 381.4L313.4 374.7Z" fill="#6d6b66"/><path d="M311.9 374.0L309.0 380.8L312.4 382.1L315.2 375.5Z" fill="#6c6a65"/><path d="M313.7 374.9L310.9 381.5L314.3 382.8L317.0 376.4Z" fill="#6a6863"/><path d="M315.6 375.7L312.8 382.3L316.2 383.6L318.9 377.2Z" fill="#696761"/><path d="M317.4 376.5L314.7 383.0L318.1 384.3L320.7 378.1Z" fill="#676560"/><path d="M319.2 377.4L316.6 383.7L319.9 385.0L322.5 378.9Z" fill="#65635e"/><path d="M321.1 378.2L318.4 384.4L321.8 385.8L324.4 379.7Z" fill="#64625d"/><path d="M322.9 379.1L320.3 385.2L323.7 386.5L326.2 380.6Z" fill="#62605b"/><path d="M324.7 379.9L322.2 385.9L325.6 387.2L328.0 381.4Z" fill="#615f59"/><path d="M326.6 380.7L324.1 386.6L327.5 388.0L329.9 382.3Z" fill="#5f5d58"/><path d="M328.4 381.6L326.0 387.4L329.4 388.7L331.7 383.1Z" fill="#5e5c56"/><path d="M330.3 382.4L327.8 388.1L331.2 389.4L333.6 383.9Z" fill="#5d5b55"/><path d="M332.1 383.3L329.7 388.8L333.1 390.2L335.4 384.8Z" fill="#5c5a53"/><path d="M333.9 384.1L331.6 389.6L335.0 390.9L337.2 385.6Z" fill="#5a5852"/><path d="M335.8 384.9L333.5 390.3L336.9 391.6L339.1 386.4Z" fill="#595750"/><path d="M337.6 385.8L335.4 391.0L338.8 392.4L340.9 387.3Z" fill="#58564f"/><path d="M339.4 386.6L337.3 391.8L340.6 393.1L342.7 388.1Z" fill="#58564f"/><path d="M341.3 387.5L339.1 392.5L342.5 393.8L344.6 389.0Z" fill="#58564f"/><path d="M343.1 388.3L341.0 393.2L344.4 394.5L346.4 389.8Z" fill="#57554f"/><path d="M344.9 389.1L342.9 394.0L346.3 395.3L348.2 390.6Z" fill="#57554f"/><path d="M346.8 390.0L344.8 394.7L348.2 396.0L350.1 391.5Z" fill="#57554f"/><path d="M348.6 390.8L346.7 395.4L350.0 396.7L351.9 392.3Z" fill="#57554f"/><path d="M350.4 391.6L348.5 396.2L351.9 397.5L353.8 393.2Z" fill="#56544f"/><path d="M352.3 392.5L350.4 396.9L353.8 398.2L355.6 394.0Z" fill="#575550"/><path d="M354.1 393.3L352.3 397.6L355.7 398.9L357.4 394.8Z" fill="#585651"/><path d="M356.0 394.2L354.2 398.4L357.6 399.7L359.3 395.7Z" fill="#595752"/><path d="M357.8 395.0L356.1 399.1L359.5 400.4L361.1 396.5Z" fill="#5a5853"/><path d="M359.6 395.8L358.0 399.8L361.3 401.1L362.9 397.4Z" fill="#5b5954"/><path d="M361.5 396.7L359.8 400.6L363.2 401.9L364.8 398.2Z" fill="#5c5a55"/><path d="M363.3 397.5L361.7 401.3L365.1 402.6L366.6 399.0Z" fill="#5e5c57"/><path d="M365.1 398.4L363.6 402.0L367.0 403.3L368.4 399.9Z" fill="#5f5d58"/><path d="M305.5 378.7L303.0 385.8L306.4 387.0L308.9 380.0Z" fill="#6e6c67"/><path d="M307.4 379.4L304.9 386.5L308.3 387.6L310.8 380.7Z" fill="#6c6a65"/><path d="M309.3 380.1L306.8 387.1L310.3 388.2L312.7 381.5Z" fill="#6a6863"/><path d="M311.2 380.9L308.7 387.7L312.2 388.8L314.6 382.2Z" fill="#696762"/><path d="M313.1 381.6L310.6 388.3L314.1 389.5L316.4 382.9Z" fill="#676560"/><path d="M314.9 382.3L312.6 389.0L316.0 390.1L318.3 383.7Z" fill="#65635e"/><path d="M316.8 383.1L314.5 389.6L317.9 390.7L320.2 384.4Z" fill="#64625d"/><path d="M318.7 383.8L316.4 390.2L319.9 391.4L322.1 385.1Z" fill="#62605b"/><path d="M320.6 384.5L318.3 390.9L321.8 392.0L324.0 385.8Z" fill="#615f5a"/><path d="M322.5 385.3L320.2 391.5L323.7 392.6L325.8 386.6Z" fill="#605e58"/><path d="M324.3 386.0L322.2 392.1L325.6 393.2L327.7 387.3Z" fill="#5e5c57"/><path d="M326.2 386.7L324.1 392.7L327.5 393.9L329.6 388.0Z" fill="#5d5b55"/><path d="M328.1 387.5L326.0 393.4L329.4 394.5L331.5 388.8Z" fill="#5c5a54"/><path d="M330.0 388.2L327.9 394.0L331.4 395.1L333.4 389.5Z" fill="#5b5953"/><path d="M331.9 388.9L329.8 394.6L333.3 395.8L335.3 390.2Z" fill="#5a5851"/><path d="M333.7 389.7L331.7 395.2L335.2 396.4L337.1 391.0Z" fill="#595750"/><path d="M335.6 390.4L333.7 395.9L337.1 397.0L339.0 391.7Z" fill="#58564f"/><path d="M337.5 391.1L335.6 396.5L339.0 397.6L340.9 392.4Z" fill="#58564f"/><path d="M339.4 391.8L337.5 397.1L341.0 398.3L342.8 393.2Z" fill="#57554f"/><path d="M341.3 392.6L339.4 397.8L342.9 398.9L344.7 393.9Z" fill="#57554f"/><path d="M343.2 393.3L341.3 398.4L344.8 399.5L346.5 394.6Z" fill="#57554f"/><path d="M345.0 394.0L343.3 399.0L346.7 400.1L348.4 395.4Z" fill="#57554f"/><path d="M346.9 394.8L345.2 399.6L348.6 400.8L350.3 396.1Z" fill="#57554f"/><path d="M348.8 395.5L347.1 400.3L350.5 401.4L352.2 396.8Z" fill="#56544f"/><path d="M350.7 396.2L349.0 400.9L352.5 402.0L354.1 397.6Z" fill="#575550"/><path d="M352.6 397.0L350.9 401.5L354.4 402.7L355.9 398.3Z" fill="#585651"/><path d="M354.4 397.7L352.9 402.2L356.3 403.3L357.8 399.0Z" fill="#5a5853"/><path d="M356.3 398.4L354.8 402.8L358.2 403.9L359.7 399.8Z" fill="#5b5954"/><path d="M358.2 399.2L356.7 403.4L360.1 404.5L361.6 400.5Z" fill="#5d5b56"/><path d="M360.1 399.9L358.6 404.0L362.1 405.2L363.5 401.2Z" fill="#5e5c57"/><path d="M362.0 400.6L360.5 404.7L364.0 405.8L365.4 401.9Z" fill="#605e59"/><path d="M363.8 401.4L362.4 405.3L365.9 406.4L367.2 402.7Z" fill="#615f5a"/><path d="M303.2 385.2L301.0 392.5L304.5 393.4L306.6 386.3Z" fill="#6d6a65"/><path d="M305.1 385.8L302.9 393.0L306.5 394.0L308.6 386.9Z" fill="#6b6964"/><path d="M307.0 386.4L304.9 393.5L308.4 394.5L310.5 387.6Z" fill="#696762"/><path d="M308.9 387.0L306.8 394.1L310.4 395.0L312.4 388.2Z" fill="#686560"/><path d="M310.9 387.7L308.8 394.6L312.3 395.5L314.3 388.8Z" fill="#66645f"/><path d="M312.8 388.3L310.7 395.1L314.3 396.1L316.2 389.4Z" fill="#64625d"/><path d="M314.7 388.9L312.7 395.7L316.2 396.6L318.2 390.1Z" fill="#62605b"/><path d="M316.6 389.6L314.6 396.2L318.1 397.1L320.1 390.7Z" fill="#615f5a"/><path d="M318.5 390.2L316.6 396.7L320.1 397.7L322.0 391.3Z" fill="#605e59"/><path d="M320.5 390.8L318.5 397.2L322.0 398.2L323.9 391.9Z" fill="#5f5d57"/><path d="M322.4 391.4L320.5 397.8L324.0 398.7L325.8 392.6Z" fill="#5e5c56"/><path d="M324.3 392.1L322.4 398.3L325.9 399.2L327.7 393.2Z" fill="#5d5b55"/><path d="M326.2 392.7L324.4 398.8L327.9 399.8L329.7 393.8Z" fill="#5c5a54"/><path d="M328.1 393.3L326.3 399.3L329.8 400.3L331.6 394.5Z" fill="#5a5852"/><path d="M330.0 394.0L328.3 399.9L331.8 400.8L333.5 395.1Z" fill="#595751"/><path d="M332.0 394.6L330.2 400.4L333.7 401.3L335.4 395.7Z" fill="#585650"/><path d="M333.9 395.2L332.2 400.9L335.7 401.9L337.3 396.3Z" fill="#58564f"/><path d="M335.8 395.8L334.1 401.4L337.6 402.4L339.3 397.0Z" fill="#58564f"/><path d="M337.7 396.5L336.1 402.0L339.6 402.9L341.2 397.6Z" fill="#57554f"/><path d="M339.6 397.1L338.0 402.5L341.5 403.4L343.1 398.2Z" fill="#57554f"/><path d="M341.6 397.7L340.0 403.0L343.5 404.0L345.0 398.9Z" fill="#57554f"/><path d="M343.5 398.3L341.9 403.6L345.4 404.5L346.9 399.5Z" fill="#575550"/><path d="M345.4 399.0L343.9 404.1L347.4 405.0L348.8 400.1Z" fill="#575550"/><path d="M347.3 399.6L345.8 404.6L349.3 405.6L350.8 400.7Z" fill="#575550"/><path d="M349.2 400.2L347.8 405.1L351.3 406.1L352.7 401.4Z" fill="#585651"/><path d="M351.2 400.9L349.7 405.7L353.2 406.6L354.6 402.0Z" fill="#5a5853"/><path d="M353.1 401.5L351.7 406.2L355.2 407.1L356.5 402.6Z" fill="#5c5a55"/><path d="M355.0 402.1L353.6 406.7L357.1 407.7L358.4 403.2Z" fill="#5e5d58"/><path d="M356.9 402.7L355.6 407.2L359.1 408.2L360.4 403.9Z" fill="#615f5a"/><path d="M358.8 403.4L357.5 407.8L361.0 408.7L362.3 404.5Z" fill="#63615c"/><path d="M360.7 404.0L359.5 408.3L363.0 409.2L364.2 405.1Z" fill="#64635e"/><path d="M362.7 404.6L361.4 408.8L364.9 409.8L366.1 405.8Z" fill="#66645f"/><path d="M301.2 391.8L299.4 399.3L302.9 400.1L304.7 392.8Z" fill="#6c6964"/><path d="M303.1 392.3L301.3 399.7L304.9 400.5L306.6 393.3Z" fill="#6a6862"/><path d="M305.1 392.9L303.3 400.1L306.9 400.9L308.6 393.8Z" fill="#686661"/><path d="M307.0 393.4L305.3 400.6L308.8 401.3L310.5 394.3Z" fill="#66645f"/><path d="M309.0 393.9L307.3 401.0L310.8 401.8L312.5 394.9Z" fill="#65635d"/><path d="M310.9 394.4L309.2 401.4L312.8 402.2L314.4 395.4Z" fill="#63615c"/><path d="M312.9 395.0L311.2 401.9L314.7 402.6L316.4 395.9Z" fill="#615f5a"/><path d="M314.8 395.5L313.2 402.3L316.7 403.1L318.3 396.5Z" fill="#605e59"/><path d="M316.8 396.0L315.1 402.7L318.7 403.5L320.3 397.0Z" fill="#5f5d58"/><path d="M318.7 396.6L317.1 403.2L320.7 403.9L322.2 397.5Z" fill="#5e5c57"/><path d="M320.7 397.1L319.1 403.6L322.6 404.4L324.2 398.0Z" fill="#5d5b55"/><path d="M322.6 397.6L321.1 404.0L324.6 404.8L326.1 398.6Z" fill="#5c5a54"/><path d="M324.6 398.1L323.0 404.4L326.6 405.2L328.1 399.1Z" fill="#5b5953"/><path d="M326.5 398.7L325.0 404.9L328.6 405.6L330.0 399.6Z" fill="#5a5852"/><path d="M328.5 399.2L327.0 405.3L330.5 406.1L332.0 400.1Z" fill="#595751"/><path d="M330.4 399.7L328.9 405.7L332.5 406.5L333.9 400.7Z" fill="#585650"/><path d="M332.4 400.2L330.9 406.2L334.5 406.9L335.9 401.2Z" fill="#58564f"/><path d="M334.3 400.8L332.9 406.6L336.4 407.4L337.8 401.7Z" fill="#58564f"/><path d="M336.3 401.3L334.9 407.0L338.4 407.8L339.8 402.2Z" fill="#58564f"/><path d="M338.2 401.8L336.8 407.5L340.4 408.2L341.7 402.8Z" fill="#575550"/><path d="M340.2 402.4L338.8 407.9L342.4 408.7L343.7 403.3Z" fill="#575550"/><path d="M342.1 402.9L340.8 408.3L344.3 409.1L345.6 403.8Z" fill="#575550"/><path d="M344.1 403.4L342.8 408.7L346.3 409.5L347.6 404.4Z" fill="#575550"/><path d="M346.0 403.9L344.7 409.2L348.3 409.9L349.5 404.9Z" fill="#575550"/><path d="M348.0 404.5L346.7 409.6L350.3 410.4L351.5 405.4Z" fill="#595752"/><path d="M349.9 405.0L348.7 410.0L352.2 410.8L353.4 405.9Z" fill="#5c5a55"/><path d="M351.9 405.5L350.6 410.5L354.2 411.2L355.4 406.5Z" fill="#5f5d58"/><path d="M353.8 406.0L352.6 410.9L356.2 411.7L357.3 407.0Z" fill="#61605b"/><path d="M355.7 406.6L354.6 411.3L358.1 412.1L359.3 407.5Z" fill="#64635e"/><path d="M357.7 407.1L356.6 411.7L360.1 412.5L361.2 408.0Z" fill="#676560"/><path d="M359.6 407.6L358.5 412.2L362.1 413.0L363.2 408.6Z" fill="#696762"/><path d="M361.6 408.1L360.5 412.6L364.1 413.4L365.1 409.1Z" fill="#6b6a65"/><path d="M299.5 398.6L298.0 406.2L301.6 406.8L303.1 399.4Z" fill="#6b6863"/><path d="M301.5 399.0L300.0 406.5L303.6 407.2L305.0 399.8Z" fill="#696661"/><path d="M303.5 399.5L302.0 406.9L305.6 407.5L307.0 400.2Z" fill="#67655f"/><path d="M305.4 399.9L304.0 407.2L307.6 407.8L309.0 400.7Z" fill="#65635e"/><path d="M307.4 400.3L306.0 407.6L309.6 408.2L311.0 401.1Z" fill="#63615c"/><path d="M309.4 400.8L308.0 407.9L311.6 408.5L312.9 401.5Z" fill="#62605a"/><path d="M311.3 401.2L310.0 408.2L313.6 408.8L314.9 402.0Z" fill="#605e59"/><path d="M313.3 401.6L312.0 408.6L315.6 409.2L316.9 402.4Z" fill="#5f5d58"/><path d="M315.3 402.0L314.0 408.9L317.5 409.5L318.8 402.8Z" fill="#5e5c57"/><path d="M317.3 402.5L316.0 409.2L319.5 409.8L320.8 403.2Z" fill="#5d5b56"/><path d="M319.2 402.9L317.9 409.6L321.5 410.2L322.8 403.7Z" fill="#5c5a55"/><path d="M321.2 403.3L319.9 409.9L323.5 410.5L324.8 404.1Z" fill="#5b5954"/><path d="M323.2 403.8L321.9 410.2L325.5 410.8L326.7 404.5Z" fill="#5b5953"/><path d="M325.2 404.2L323.9 410.6L327.5 411.2L328.7 405.0Z" fill="#5a5852"/><path d="M327.1 404.6L325.9 410.9L329.5 411.5L330.7 405.4Z" fill="#595751"/><path d="M329.1 405.0L327.9 411.3L331.5 411.9L332.6 405.8Z" fill="#585650"/><path d="M331.1 405.5L329.9 411.6L333.5 412.2L334.6 406.3Z" fill="#58564f"/><path d="M333.0 405.9L331.9 411.9L335.5 412.5L336.6 406.7Z" fill="#58564f"/><path d="M335.0 406.3L333.9 412.3L337.5 412.9L338.6 407.1Z" fill="#585650"/><path d="M337.0 406.8L335.9 412.6L339.4 413.2L340.5 407.5Z" fill="#585650"/><path d="M339.0 407.2L337.9 412.9L341.4 413.5L342.5 408.0Z" fill="#585650"/><path d="M340.9 407.6L339.8 413.3L343.4 413.9L344.5 408.4Z" fill="#585650"/><path d="M342.9 408.1L341.8 413.6L345.4 414.2L346.5 408.8Z" fill="#585650"/><path d="M344.9 408.5L343.8 413.9L347.4 414.5L348.4 409.3Z" fill="#585651"/><path d="M346.9 408.9L345.8 414.3L349.4 414.9L350.4 409.7Z" fill="#5a5853"/><path d="M348.8 409.3L347.8 414.6L351.4 415.2L352.4 410.1Z" fill="#5d5b56"/><path d="M350.8 409.8L349.8 415.0L353.4 415.6L354.3 410.5Z" fill="#615f5a"/><path d="M352.8 410.2L351.8 415.3L355.4 415.9L356.3 411.0Z" fill="#64635e"/><path d="M354.7 410.6L353.8 415.6L357.4 416.2L358.3 411.4Z" fill="#686762"/><path d="M356.7 411.1L355.8 416.0L359.4 416.6L360.3 411.8Z" fill="#6b6a65"/><path d="M358.7 411.5L357.8 416.3L361.3 416.9L362.2 412.3Z" fill="#6e6c67"/><path d="M360.7 411.9L359.7 416.6L363.3 417.2L364.2 412.7Z" fill="#706f6a"/><path d="M298.2 405.5L297.0 413.2L300.6 413.7L301.7 406.1Z" fill="#6a6762"/><path d="M300.1 405.9L299.0 413.5L302.6 413.9L303.7 406.5Z" fill="#686560"/><path d="M302.1 406.2L301.0 413.7L304.6 414.2L305.7 406.8Z" fill="#66645e"/><path d="M304.1 406.5L303.0 414.0L306.7 414.4L307.7 407.1Z" fill="#64625d"/><path d="M306.1 406.9L305.0 414.2L308.7 414.7L309.7 407.5Z" fill="#62605b"/><path d="M308.1 407.2L307.1 414.5L310.7 414.9L311.7 407.8Z" fill="#605e59"/><path d="M310.1 407.5L309.1 414.7L312.7 415.2L313.7 408.1Z" fill="#5f5d58"/><path d="M312.1 407.9L311.1 415.0L314.7 415.4L315.7 408.5Z" fill="#5e5c57"/><path d="M314.1 408.2L313.1 415.2L316.7 415.7L317.7 408.8Z" fill="#5d5b56"/><path d="M316.1 408.5L315.1 415.5L318.7 415.9L319.7 409.1Z" fill="#5c5a55"/><path d="M318.1 408.9L317.1 415.7L320.7 416.2L321.6 409.5Z" fill="#5b5954"/><path d="M320.1 409.2L319.1 416.0L322.7 416.4L323.6 409.8Z" fill="#5b5953"/><path d="M322.0 409.6L321.1 416.2L324.7 416.6L325.6 410.2Z" fill="#5a5852"/><path d="M324.0 409.9L323.1 416.5L326.7 416.9L327.6 410.5Z" fill="#595751"/><path d="M326.0 410.2L325.1 416.7L328.7 417.1L329.6 410.8Z" fill="#595750"/><path d="M328.0 410.6L327.1 416.9L330.7 417.4L331.6 411.2Z" fill="#58564f"/><path d="M330.0 410.9L329.1 417.2L332.7 417.6L333.6 411.5Z" fill="#57554f"/><path d="M332.0 411.2L331.1 417.4L334.7 417.9L335.6 411.8Z" fill="#58564f"/><path d="M334.0 411.6L333.1 417.7L336.7 418.1L337.6 412.2Z" fill="#585650"/><path d="M336.0 411.9L335.1 417.9L338.7 418.4L339.6 412.5Z" fill="#585650"/><path d="M338.0 412.2L337.1 418.2L340.7 418.6L341.6 412.8Z" fill="#585650"/><path d="M340.0 412.6L339.1 418.4L342.7 418.9L343.5 413.2Z" fill="#585651"/><path d="M342.0 412.9L341.1 418.7L344.7 419.1L345.5 413.5Z" fill="#585651"/><path d="M343.9 413.3L343.1 418.9L346.7 419.4L347.5 413.9Z" fill="#585651"/><path d="M345.9 413.6L345.1 419.2L348.7 419.6L349.5 414.2Z" fill="#5a5853"/><path d="M347.9 413.9L347.1 419.4L350.7 419.9L351.5 414.5Z" fill="#5f5d58"/><path d="M349.9 414.3L349.1 419.7L352.7 420.1L353.5 414.9Z" fill="#63615c"/><path d="M351.9 414.6L351.1 419.9L354.7 420.3L355.5 415.2Z" fill="#686661"/><path d="M353.9 414.9L353.1 420.2L356.7 420.6L357.5 415.5Z" fill="#6c6a65"/><path d="M355.9 415.3L355.1 420.4L358.7 420.8L359.5 415.9Z" fill="#6f6e69"/><path d="M357.9 415.6L357.1 420.6L360.7 421.1L361.5 416.2Z" fill="#72716c"/><path d="M359.9 415.9L359.1 420.9L362.8 421.3L363.4 416.5Z" fill="#76746f"/><path d="M297.1 412.6L296.3 420.4L299.9 420.7L300.7 413.0Z" fill="#696660"/><path d="M299.1 412.8L298.3 420.5L302.0 420.8L302.7 413.2Z" fill="#67645f"/><path d="M301.1 413.0L300.3 420.7L304.0 421.0L304.7 413.5Z" fill="#65625d"/><path d="M303.1 413.3L302.4 420.9L306.0 421.2L306.7 413.7Z" fill="#63615b"/><path d="M305.1 413.5L304.4 421.0L308.0 421.3L308.7 414.0Z" fill="#615f5a"/><path d="M307.1 413.8L306.4 421.2L310.0 421.5L310.7 414.2Z" fill="#5f5d58"/><path d="M309.1 414.0L308.4 421.4L312.0 421.6L312.7 414.5Z" fill="#5d5b56"/><path d="M311.1 414.3L310.4 421.5L314.0 421.8L314.8 414.7Z" fill="#5d5b55"/><path d="M313.1 414.5L312.4 421.7L316.0 422.0L316.8 415.0Z" fill="#5c5a55"/><path d="M315.2 414.8L314.4 421.8L318.1 422.1L318.8 415.2Z" fill="#5b5954"/><path d="M317.2 415.0L316.4 422.0L320.1 422.3L320.8 415.5Z" fill="#5b5953"/><path d="M319.2 415.3L318.5 422.2L322.1 422.4L322.8 415.7Z" fill="#5a5852"/><path d="M321.2 415.5L320.5 422.3L324.1 422.6L324.8 416.0Z" fill="#595752"/><path d="M323.2 415.8L322.5 422.5L326.1 422.8L326.8 416.2Z" fill="#595751"/><path d="M325.2 416.0L324.5 422.6L328.1 422.9L328.8 416.4Z" fill="#585650"/><path d="M327.2 416.2L326.5 422.8L330.1 423.1L330.8 416.7Z" fill="#58564f"/><path d="M329.2 416.5L328.5 423.0L332.1 423.2L332.8 416.9Z" fill="#57554f"/><path d="M331.2 416.7L330.5 423.1L334.2 423.4L334.8 417.2Z" fill="#585650"/><path d="M333.2 417.0L332.5 423.3L336.2 423.6L336.8 417.4Z" fill="#585650"/><path d="M335.2 417.2L334.6 423.4L338.2 423.7L338.8 417.7Z" fill="#585650"/><path d="M337.2 417.5L336.6 423.6L340.2 423.9L340.8 417.9Z" fill="#585651"/><path d="M339.2 417.7L338.6 423.8L342.2 424.1L342.8 418.2Z" fill="#585651"/><path d="M341.2 418.0L340.6 423.9L344.2 424.2L344.8 418.4Z" fill="#585651"/><path d="M343.2 418.2L342.6 424.1L346.2 424.4L346.8 418.7Z" fill="#595752"/><path d="M345.2 418.5L344.6 424.2L348.2 424.5L348.8 418.9Z" fill="#5b5954"/><path d="M347.2 418.7L346.6 424.4L350.3 424.7L350.8 419.2Z" fill="#605f5a"/><path d="M349.2 419.0L348.6 424.6L352.3 424.9L352.8 419.4Z" fill="#65645f"/><path d="M351.2 419.2L350.7 424.7L354.3 425.0L354.8 419.7Z" fill="#6b6964"/><path d="M353.2 419.5L352.7 424.9L356.3 425.2L356.8 419.9Z" fill="#706e69"/><path d="M355.2 419.7L354.7 425.0L358.3 425.3L358.8 420.1Z" fill="#74726d"/><path d="M357.2 419.9L356.7 425.2L360.3 425.5L360.8 420.4Z" fill="#777671"/><path d="M359.2 420.2L358.7 425.4L362.3 425.7L362.8 420.6Z" fill="#7b7974"/><path d="M296.4 419.7L295.9 427.6L299.5 427.8L300.0 420.0Z" fill="#68655f"/><path d="M298.4 419.9L297.9 427.7L301.6 427.8L302.0 420.1Z" fill="#66635d"/><path d="M300.4 420.0L299.9 427.8L303.6 427.9L304.0 420.3Z" fill="#64615c"/><path d="M302.4 420.2L302.0 427.9L305.6 428.0L306.0 420.5Z" fill="#625f5a"/><path d="M304.4 420.3L304.0 427.9L307.6 428.1L308.1 420.6Z" fill="#605d58"/><path d="M306.4 420.5L306.0 428.0L309.6 428.2L310.1 420.8Z" fill="#5e5c57"/><path d="M308.5 420.7L308.0 428.1L311.6 428.2L312.1 420.9Z" fill="#5c5a55"/><path d="M310.5 420.8L310.0 428.2L313.7 428.3L314.1 421.1Z" fill="#5b5954"/><path d="M312.5 421.0L312.0 428.3L315.7 428.4L316.1 421.3Z" fill="#5b5954"/><path d="M314.5 421.1L314.1 428.3L317.7 428.5L318.1 421.4Z" fill="#5a5853"/><path d="M316.5 421.3L316.1 428.4L319.7 428.6L320.1 421.6Z" fill="#5a5852"/><path d="M318.5 421.5L318.1 428.5L321.7 428.6L322.1 421.7Z" fill="#595752"/><path d="M320.5 421.6L320.1 428.6L323.7 428.7L324.2 421.9Z" fill="#595751"/><path d="M322.5 421.8L322.1 428.6L325.8 428.8L326.2 422.1Z" fill="#585651"/><path d="M324.6 421.9L324.2 428.7L327.8 428.9L328.2 422.2Z" fill="#585650"/><path d="M326.6 422.1L326.2 428.8L329.8 428.9L330.2 422.4Z" fill="#57554f"/><path d="M328.6 422.3L328.2 428.9L331.8 429.0L332.2 422.6Z" fill="#57554f"/><path d="M330.6 422.4L330.2 429.0L333.8 429.1L334.2 422.7Z" fill="#585650"/><path d="M332.6 422.6L332.2 429.0L335.9 429.2L336.2 422.9Z" fill="#585650"/><path d="M334.6 422.7L334.2 429.1L337.9 429.3L338.2 423.0Z" fill="#585650"/><path d="M336.6 422.9L336.3 429.2L339.9 429.3L340.2 423.2Z" fill="#585651"/><path d="M338.6 423.1L338.3 429.3L341.9 429.4L342.3 423.4Z" fill="#595751"/><path d="M340.7 423.2L340.3 429.4L343.9 429.5L344.3 423.5Z" fill="#595752"/><path d="M342.7 423.4L342.3 429.4L345.9 429.6L346.3 423.7Z" fill="#595752"/><path d="M344.7 423.5L344.3 429.5L348.0 429.7L348.3 423.8Z" fill="#5c5a55"/><path d="M346.7 423.7L346.3 429.6L350.0 429.7L350.3 424.0Z" fill="#62605b"/><path d="M348.7 423.9L348.4 429.7L352.0 429.8L352.3 424.2Z" fill="#686661"/><path d="M350.7 424.0L350.4 429.7L354.0 429.9L354.3 424.3Z" fill="#6e6c67"/><path d="M352.7 424.2L352.4 429.8L356.0 430.0L356.3 424.5Z" fill="#73726d"/><path d="M354.7 424.4L354.4 429.9L358.0 430.0L358.4 424.6Z" fill="#787772"/><path d="M356.8 424.5L356.4 430.0L360.1 430.1L360.4 424.8Z" fill="#7c7b76"/><path d="M358.8 424.7L358.4 430.1L362.1 430.2L362.4 425.0Z" fill="#807f7a"/><path d="M295.9 426.9L295.8 435.0L299.4 435.0L299.6 427.1Z" fill="#66645e"/><path d="M298.0 427.0L297.8 435.0L301.4 435.0L301.6 427.1Z" fill="#64625c"/><path d="M300.0 427.1L299.8 435.0L303.5 435.0L303.6 427.2Z" fill="#62605a"/><path d="M302.0 427.2L301.8 435.0L305.5 435.0L305.6 427.3Z" fill="#605e59"/><path d="M304.0 427.2L303.9 435.0L307.5 435.0L307.6 427.4Z" fill="#5e5c57"/><path d="M306.0 427.3L305.9 435.0L309.5 435.0L309.7 427.5Z" fill="#5c5a55"/><path d="M308.0 427.4L307.9 435.0L311.5 435.0L311.7 427.5Z" fill="#5b5954"/><path d="M310.1 427.5L309.9 435.0L313.5 435.0L313.7 427.6Z" fill="#5a5853"/><path d="M312.1 427.6L311.9 435.0L315.6 435.0L315.7 427.7Z" fill="#5a5853"/><path d="M314.1 427.6L314.0 435.0L317.6 435.0L317.7 427.8Z" fill="#595752"/><path d="M316.1 427.7L316.0 435.0L319.6 435.0L319.7 427.9Z" fill="#595752"/><path d="M318.1 427.8L318.0 435.0L321.6 435.0L321.8 427.9Z" fill="#595751"/><path d="M320.1 427.9L320.0 435.0L323.6 435.0L323.8 428.0Z" fill="#585651"/><path d="M322.2 427.9L322.0 435.0L325.7 435.0L325.8 428.1Z" fill="#585650"/><path d="M324.2 428.0L324.0 435.0L327.7 435.0L327.8 428.2Z" fill="#585650"/><path d="M326.2 428.1L326.1 435.0L329.7 435.0L329.8 428.2Z" fill="#57554f"/><path d="M328.2 428.2L328.1 435.0L331.7 435.0L331.8 428.3Z" fill="#57554f"/><path d="M330.2 428.3L330.1 435.0L333.7 435.0L333.9 428.4Z" fill="#585650"/><path d="M332.2 428.3L332.1 435.0L335.8 435.0L335.9 428.5Z" fill="#585650"/><path d="M334.3 428.4L334.1 435.0L337.8 435.0L337.9 428.6Z" fill="#585651"/><path d="M336.3 428.5L336.2 435.0L339.8 435.0L339.9 428.6Z" fill="#595751"/><path d="M338.3 428.6L338.2 435.0L341.8 435.0L341.9 428.7Z" fill="#595752"/><path d="M340.3 428.7L340.2 435.0L343.8 435.0L343.9 428.8Z" fill="#595752"/><path d="M342.3 428.7L342.2 435.0L345.8 435.0L346.0 428.9Z" fill="#5a5853"/><path d="M344.4 428.8L344.2 435.0L347.9 435.0L348.0 429.0Z" fill="#5d5b56"/><path d="M346.4 428.9L346.3 435.0L349.9 435.0L350.0 429.0Z" fill="#64625d"/><path d="M348.4 429.0L348.3 435.0L351.9 435.0L352.0 429.1Z" fill="#6a6964"/><path d="M350.4 429.0L350.3 435.0L353.9 435.0L354.0 429.2Z" fill="#716f6a"/><path d="M352.4 429.1L352.3 435.0L355.9 435.0L356.1 429.3Z" fill="#777671"/><path d="M354.4 429.2L354.3 435.0L358.0 435.0L358.1 429.3Z" fill="#7c7b76"/><path d="M356.5 429.3L356.3 435.0L360.0 435.0L360.1 429.4Z" fill="#81807b"/><path d="M358.5 429.4L358.4 435.0L362.0 435.0L362.1 429.5Z" fill="#85847f"/><path d="M295.8 434.2L295.9 442.4L299.6 442.2L299.4 434.2Z" fill="#66635d"/><path d="M297.8 434.2L298.0 442.3L301.6 442.1L301.4 434.2Z" fill="#64615b"/><path d="M299.8 434.2L300.0 442.2L303.6 442.1L303.5 434.2Z" fill="#625f5a"/><path d="M301.8 434.2L302.0 442.1L305.6 442.0L305.5 434.2Z" fill="#605e59"/><path d="M303.9 434.2L304.0 442.1L307.6 441.9L307.5 434.2Z" fill="#5f5d57"/><path d="M305.9 434.2L306.0 442.0L309.7 441.8L309.5 434.2Z" fill="#5d5b56"/><path d="M307.9 434.2L308.0 441.9L311.7 441.8L311.5 434.2Z" fill="#5c5a55"/><path d="M309.9 434.2L310.1 441.8L313.7 441.7L313.5 434.2Z" fill="#5b5a55"/><path d="M311.9 434.2L312.1 441.8L315.7 441.6L315.6 434.2Z" fill="#5b5954"/><path d="M314.0 434.2L314.1 441.7L317.7 441.5L317.6 434.2Z" fill="#5b5953"/><path d="M316.0 434.2L316.1 441.6L319.7 441.5L319.6 434.2Z" fill="#5a5853"/><path d="M318.0 434.2L318.1 441.5L321.8 441.4L321.6 434.2Z" fill="#5a5852"/><path d="M320.0 434.2L320.1 441.5L323.8 441.3L323.6 434.2Z" fill="#595751"/><path d="M322.0 434.2L322.2 441.4L325.8 441.2L325.7 434.2Z" fill="#595751"/><path d="M324.0 434.2L324.2 441.3L327.8 441.2L327.7 434.2Z" fill="#595751"/><path d="M326.1 434.2L326.2 441.2L329.8 441.1L329.7 434.2Z" fill="#595751"/><path d="M328.1 434.2L328.2 441.1L331.8 441.0L331.7 434.2Z" fill="#595751"/><path d="M330.1 434.2L330.2 441.1L333.9 440.9L333.7 434.2Z" fill="#5a5852"/><path d="M332.1 434.2L332.2 441.0L335.9 440.9L335.8 434.2Z" fill="#5a5852"/><path d="M334.1 434.2L334.3 440.9L337.9 440.8L337.8 434.2Z" fill="#5a5853"/><path d="M336.2 434.2L336.3 440.8L339.9 440.7L339.8 434.2Z" fill="#5a5853"/><path d="M338.2 434.2L338.3 440.8L341.9 440.6L341.8 434.2Z" fill="#5a5853"/><path d="M340.2 434.2L340.3 440.7L343.9 440.6L343.8 434.2Z" fill="#5b5953"/><path d="M342.2 434.2L342.3 440.6L346.0 440.5L345.8 434.2Z" fill="#5b5954"/><path d="M344.2 434.2L344.4 440.5L348.0 440.4L347.9 434.2Z" fill="#5e5c57"/><path d="M346.3 434.2L346.4 440.5L350.0 440.3L349.9 434.2Z" fill="#65635e"/><path d="M348.3 434.2L348.4 440.4L352.0 440.3L351.9 434.2Z" fill="#6c6a65"/><path d="M350.3 434.2L350.4 440.3L354.0 440.2L353.9 434.2Z" fill="#73716c"/><path d="M352.3 434.2L352.4 440.2L356.1 440.1L355.9 434.2Z" fill="#797873"/><path d="M354.3 434.2L354.4 440.2L358.1 440.0L358.0 434.2Z" fill="#7e7d78"/><path d="M356.3 434.2L356.5 440.1L360.1 440.0L360.0 434.2Z" fill="#83827d"/><path d="M358.4 434.2L358.5 440.0L362.1 439.9L362.0 434.2Z" fill="#878681"/><path d="M295.9 441.7L296.4 449.8L300.0 449.6L299.5 441.5Z" fill="#65625c"/><path d="M297.9 441.6L298.4 449.7L302.0 449.4L301.6 441.4Z" fill="#63615b"/><path d="M299.9 441.5L300.4 449.5L304.0 449.3L303.6 441.4Z" fill="#62605a"/><path d="M302.0 441.4L302.4 449.4L306.0 449.1L305.6 441.3Z" fill="#625f5a"/><path d="M304.0 441.4L304.4 449.2L308.0 449.0L307.6 441.2Z" fill="#615f5a"/><path d="M306.0 441.3L306.4 449.1L310.1 448.8L309.6 441.1Z" fill="#615f5a"/><path d="M308.0 441.2L308.4 448.9L312.1 448.7L311.6 441.1Z" fill="#605e59"/><path d="M310.0 441.1L310.5 448.8L314.1 448.5L313.7 441.0Z" fill="#5f5e58"/><path d="M312.0 441.1L312.5 448.6L316.1 448.4L315.7 440.9Z" fill="#5e5d57"/><path d="M314.1 441.0L314.5 448.5L318.1 448.2L317.7 440.8Z" fill="#5e5c56"/><path d="M316.1 440.9L316.5 448.4L320.1 448.1L319.7 440.8Z" fill="#5d5b56"/><path d="M318.1 440.8L318.5 448.2L322.1 447.9L321.7 440.7Z" fill="#5c5a55"/><path d="M320.1 440.8L320.5 448.1L324.1 447.8L323.7 440.6Z" fill="#5b5954"/><path d="M322.1 440.7L322.5 447.9L326.2 447.6L325.8 440.5Z" fill="#5b5953"/><path d="M324.2 440.6L324.5 447.8L328.2 447.5L327.8 440.5Z" fill="#5c5a54"/><path d="M326.2 440.5L326.6 447.6L330.2 447.4L329.8 440.4Z" fill="#5c5a54"/><path d="M328.2 440.4L328.6 447.5L332.2 447.2L331.8 440.3Z" fill="#5d5b54"/><path d="M330.2 440.4L330.6 447.3L334.2 447.1L333.8 440.2Z" fill="#5e5c56"/><path d="M332.2 440.3L332.6 447.2L336.2 446.9L335.9 440.2Z" fill="#5f5c56"/><path d="M334.2 440.2L334.6 447.0L338.2 446.8L337.9 440.1Z" fill="#5e5c56"/><path d="M336.3 440.1L336.6 446.9L340.3 446.6L339.9 440.0Z" fill="#5e5c56"/><path d="M338.3 440.1L338.6 446.7L342.3 446.5L341.9 439.9Z" fill="#5d5b56"/><path d="M340.3 440.0L340.7 446.6L344.3 446.3L343.9 439.9Z" fill="#5d5b55"/><path d="M342.3 439.9L342.7 446.4L346.3 446.2L345.9 439.8Z" fill="#5c5a55"/><path d="M344.3 439.8L344.7 446.3L348.3 446.0L348.0 439.7Z" fill="#605e59"/><path d="M346.3 439.8L346.7 446.1L350.3 445.9L350.0 439.6Z" fill="#666560"/><path d="M348.4 439.7L348.7 446.0L352.3 445.7L352.0 439.6Z" fill="#6d6c66"/><path d="M350.4 439.6L350.7 445.8L354.3 445.6L354.0 439.5Z" fill="#74736d"/><path d="M352.4 439.5L352.7 445.7L356.4 445.4L356.0 439.4Z" fill="#7b7a74"/><path d="M354.4 439.5L354.7 445.6L358.4 445.3L358.0 439.3Z" fill="#7f7e79"/><path d="M356.4 439.4L356.8 445.4L360.4 445.1L360.1 439.3Z" fill="#82817c"/><path d="M358.4 439.3L358.8 445.3L362.4 445.0L362.1 439.2Z" fill="#85847f"/><path d="M296.3 449.1L297.1 457.4L300.7 457.0L299.9 448.9Z" fill="#64615b"/><path d="M298.3 449.0L299.1 457.1L302.7 456.8L301.9 448.7Z" fill="#63615b"/><path d="M300.3 448.8L301.1 456.9L304.7 456.5L304.0 448.6Z" fill="#63605b"/><path d="M302.4 448.7L303.1 456.7L306.7 456.3L306.0 448.4Z" fill="#63615b"/><path d="M304.4 448.5L305.1 456.5L308.7 456.1L308.0 448.3Z" fill="#63615c"/><path d="M306.4 448.4L307.1 456.3L310.7 455.9L310.0 448.1Z" fill="#64625d"/><path d="M308.4 448.2L309.1 456.1L312.7 455.7L312.0 448.0Z" fill="#64635e"/><path d="M310.4 448.1L311.1 455.8L314.7 455.5L314.0 447.8Z" fill="#63615c"/><path d="M312.4 447.9L313.1 455.6L316.7 455.2L316.0 447.7Z" fill="#62605b"/><path d="M314.4 447.8L315.1 455.4L318.7 455.0L318.1 447.5Z" fill="#615f5a"/><path d="M316.4 447.7L317.1 455.2L320.7 454.8L320.1 447.4Z" fill="#5f5e58"/><path d="M318.5 447.5L319.1 455.0L322.7 454.6L322.1 447.2Z" fill="#5e5c57"/><path d="M320.5 447.4L321.1 454.8L324.8 454.4L324.1 447.1Z" fill="#5d5b56"/><path d="M322.5 447.2L323.1 454.5L326.8 454.2L326.1 446.9Z" fill="#5d5b56"/><path d="M324.5 447.1L325.2 454.3L328.8 453.9L328.1 446.8Z" fill="#5e5c56"/><path d="M326.5 446.9L327.2 454.1L330.8 453.7L330.1 446.7Z" fill="#5f5d57"/><path d="M328.5 446.8L329.2 453.9L332.8 453.5L332.1 446.5Z" fill="#605e58"/><path d="M330.5 446.6L331.2 453.7L334.8 453.3L334.2 446.4Z" fill="#626059"/><path d="M332.6 446.5L333.2 453.5L336.8 453.1L336.2 446.2Z" fill="#63615b"/><path d="M334.6 446.3L335.2 453.2L338.8 452.9L338.2 446.1Z" fill="#62605a"/><path d="M336.6 446.2L337.2 453.0L340.8 452.6L340.2 445.9Z" fill="#615f59"/><path d="M338.6 446.0L339.2 452.8L342.8 452.4L342.2 445.8Z" fill="#605e58"/><path d="M340.6 445.9L341.2 452.6L344.8 452.2L344.2 445.6Z" fill="#5f5d58"/><path d="M342.6 445.7L343.2 452.4L346.8 452.0L346.2 445.5Z" fill="#5e5c57"/><path d="M344.6 445.6L345.2 452.2L348.8 451.8L348.3 445.3Z" fill="#615f5a"/><path d="M346.6 445.4L347.2 452.0L350.8 451.6L350.3 445.2Z" fill="#686661"/><path d="M348.7 445.3L349.2 451.7L352.9 451.3L352.3 445.0Z" fill="#6e6d68"/><path d="M350.7 445.2L351.2 451.5L354.9 451.1L354.3 444.9Z" fill="#75746e"/><path d="M352.7 445.0L353.3 451.3L356.9 450.9L356.3 444.7Z" fill="#7c7b75"/><path d="M354.7 444.9L355.3 451.1L358.9 450.7L358.3 444.6Z" fill="#7f7e79"/><path d="M356.7 444.7L357.3 450.9L360.9 450.5L360.3 444.4Z" fill="#81807b"/><path d="M358.7 444.6L359.3 450.7L362.9 450.3L362.3 444.3Z" fill="#83827d"/><path d="M297.0 456.7L298.0 464.9L301.6 464.4L300.6 456.3Z" fill="#63605b"/><path d="M299.0 456.4L300.0 464.7L303.6 464.2L302.6 456.1Z" fill="#63605b"/><path d="M301.0 456.2L302.0 464.4L305.6 463.9L304.6 455.8Z" fill="#63605b"/><path d="M303.0 456.0L304.0 464.1L307.6 463.6L306.6 455.6Z" fill="#64625d"/><path d="M305.0 455.8L306.0 463.8L309.6 463.3L308.6 455.4Z" fill="#65645f"/><path d="M307.0 455.6L308.0 463.5L311.6 463.0L310.6 455.2Z" fill="#676661"/><path d="M309.0 455.4L310.0 463.2L313.6 462.7L312.6 455.0Z" fill="#686762"/><path d="M311.0 455.1L312.0 463.0L315.6 462.5L314.6 454.8Z" fill="#666560"/><path d="M313.0 454.9L314.0 462.7L317.6 462.2L316.7 454.5Z" fill="#65645f"/><path d="M315.0 454.7L316.0 462.4L319.6 461.9L318.7 454.3Z" fill="#63625d"/><path d="M317.1 454.5L318.0 462.1L321.6 461.6L320.7 454.1Z" fill="#62605b"/><path d="M319.1 454.3L320.0 461.8L323.6 461.3L322.7 453.9Z" fill="#615f59"/><path d="M321.1 454.1L322.0 461.6L325.6 461.0L324.7 453.7Z" fill="#5f5d58"/><path d="M323.1 453.9L324.0 461.3L327.6 460.8L326.7 453.5Z" fill="#605e58"/><path d="M325.1 453.6L326.0 461.0L329.6 460.5L328.7 453.2Z" fill="#615f59"/><path d="M327.1 453.4L328.0 460.7L331.6 460.2L330.7 453.0Z" fill="#62605a"/><path d="M329.1 453.2L330.0 460.4L333.6 459.9L332.7 452.8Z" fill="#64625b"/><path d="M331.1 453.0L332.0 460.1L335.6 459.6L334.7 452.6Z" fill="#66645d"/><path d="M333.1 452.8L334.0 459.9L337.6 459.4L336.7 452.4Z" fill="#68655f"/><path d="M335.1 452.6L336.0 459.6L339.6 459.1L338.7 452.2Z" fill="#66645d"/><path d="M337.1 452.3L338.0 459.3L341.6 458.8L340.7 451.9Z" fill="#64625c"/><path d="M339.1 452.1L340.0 459.0L343.6 458.5L342.7 451.7Z" fill="#63615b"/><path d="M341.1 451.9L342.0 458.7L345.6 458.2L344.8 451.5Z" fill="#615f5a"/><path d="M343.1 451.7L344.0 458.4L347.6 457.9L346.8 451.3Z" fill="#605e59"/><path d="M345.2 451.5L346.0 458.2L349.6 457.7L348.8 451.1Z" fill="#62605b"/><path d="M347.2 451.3L348.0 457.9L351.6 457.4L350.8 450.9Z" fill="#696762"/><path d="M349.2 451.0L350.0 457.6L353.6 457.1L352.8 450.7Z" fill="#706e69"/><path d="M351.2 450.8L352.0 457.3L355.6 456.8L354.8 450.4Z" fill="#76756f"/><path d="M353.2 450.6L354.0 457.0L357.6 456.5L356.8 450.2Z" fill="#7d7c76"/><path d="M355.2 450.4L356.0 456.8L359.6 456.2L358.8 450.0Z" fill="#7f7e79"/><path d="M357.2 450.2L358.0 456.5L361.6 456.0L360.8 449.8Z" fill="#807f7a"/><path d="M359.2 450.0L360.0 456.2L363.6 455.7L362.8 449.6Z" fill="#81807b"/><path d="M297.9 464.3L299.2 472.6L302.8 471.9L301.5 463.7Z" fill="#62605a"/><path d="M299.9 464.0L301.2 472.2L304.8 471.6L303.5 463.5Z" fill="#63605b"/><path d="M301.9 463.7L303.2 471.9L306.8 471.3L305.5 463.2Z" fill="#63615b"/><path d="M303.9 463.4L305.2 471.5L308.8 470.9L307.5 462.9Z" fill="#65635e"/><path d="M305.9 463.1L307.2 471.2L310.8 470.6L309.5 462.6Z" fill="#686661"/><path d="M307.9 462.8L309.2 470.8L312.8 470.2L311.5 462.3Z" fill="#6a6964"/><path d="M309.9 462.6L311.2 470.5L314.7 469.9L313.5 462.0Z" fill="#6c6b66"/><path d="M311.9 462.3L313.1 470.1L316.7 469.5L315.5 461.8Z" fill="#6a6964"/><path d="M313.9 462.0L315.1 469.8L318.7 469.2L317.5 461.5Z" fill="#686762"/><path d="M315.9 461.7L317.1 469.5L320.7 468.8L319.5 461.2Z" fill="#666560"/><path d="M317.9 461.4L319.1 469.1L322.7 468.5L321.5 460.9Z" fill="#65635e"/><path d="M319.9 461.1L321.1 468.8L324.7 468.1L323.5 460.6Z" fill="#63615c"/><path d="M321.9 460.9L323.1 468.4L326.7 467.8L325.5 460.4Z" fill="#615f5a"/><path d="M323.9 460.6L325.1 468.1L328.7 467.4L327.5 460.1Z" fill="#62605a"/><path d="M325.9 460.3L327.1 467.7L330.7 467.1L329.5 459.8Z" fill="#64625c"/><path d="M327.9 460.0L329.1 467.4L332.6 466.8L331.5 459.5Z" fill="#66645d"/><path d="M329.9 459.7L331.0 467.0L334.6 466.4L333.5 459.2Z" fill="#68665f"/><path d="M331.9 459.4L333.0 466.7L336.6 466.1L335.5 458.9Z" fill="#6a6861"/><path d="M333.9 459.2L335.0 466.3L338.6 465.7L337.5 458.7Z" fill="#6c6a63"/><path d="M335.9 458.9L337.0 466.0L340.6 465.4L339.5 458.4Z" fill="#6a6861"/><path d="M337.9 458.6L339.0 465.6L342.6 465.0L341.5 458.1Z" fill="#68665f"/><path d="M339.9 458.3L341.0 465.3L344.6 464.7L343.5 457.8Z" fill="#66635e"/><path d="M341.9 458.0L343.0 465.0L346.6 464.3L345.5 457.5Z" fill="#64615c"/><path d="M343.9 457.8L345.0 464.6L348.6 464.0L347.5 457.2Z" fill="#615f5a"/><path d="M345.9 457.5L347.0 464.3L350.5 463.6L349.5 457.0Z" fill="#64625d"/><path d="M347.9 457.2L348.9 463.9L352.5 463.3L351.5 456.7Z" fill="#6a6963"/><path d="M349.9 456.9L350.9 463.6L354.5 462.9L353.5 456.4Z" fill="#716f6a"/><path d="M351.9 456.6L352.9 463.2L356.5 462.6L355.5 456.1Z" fill="#777671"/><path d="M353.9 456.3L354.9 462.9L358.5 462.3L357.5 455.8Z" fill="#7e7d77"/><path d="M355.9 456.1L356.9 462.5L360.5 461.9L359.5 455.5Z" fill="#807f79"/><path d="M357.9 455.8L358.9 462.2L362.5 461.6L361.5 455.3Z" fill="#807e79"/><path d="M359.9 455.5L360.9 461.8L364.5 461.2L363.5 455.0Z" fill="#807e79"/><path d="M299.1 471.9L300.7 480.2L304.3 479.5L302.7 471.3Z" fill="#615f59"/><path d="M301.1 471.5L302.7 479.8L306.2 479.1L304.7 470.9Z" fill="#62605a"/><path d="M303.1 471.2L304.6 479.4L308.2 478.7L306.7 470.6Z" fill="#63615c"/><path d="M305.1 470.8L306.6 479.0L310.2 478.3L308.7 470.2Z" fill="#676560"/><path d="M307.1 470.5L308.6 478.6L312.2 477.9L310.6 469.9Z" fill="#6a6963"/><path d="M309.1 470.2L310.6 478.2L314.1 477.5L312.6 469.5Z" fill="#6d6c67"/><path d="M311.0 469.8L312.6 477.8L316.1 477.1L314.6 469.2Z" fill="#70706b"/><path d="M313.0 469.5L314.5 477.4L318.1 476.7L316.6 468.8Z" fill="#6e6d68"/><path d="M315.0 469.1L316.5 477.0L320.1 476.2L318.6 468.5Z" fill="#6c6b66"/><path d="M317.0 468.8L318.5 476.6L322.0 475.8L320.6 468.1Z" fill="#696863"/><path d="M319.0 468.4L320.5 476.2L324.0 475.4L322.6 467.8Z" fill="#676661"/><path d="M321.0 468.1L322.4 475.8L326.0 475.0L324.6 467.5Z" fill="#65645e"/><path d="M323.0 467.7L324.4 475.3L328.0 474.6L326.6 467.1Z" fill="#63615c"/><path d="M325.0 467.4L326.4 474.9L330.0 474.2L328.5 466.8Z" fill="#64625d"/><path d="M327.0 467.0L328.4 474.5L331.9 473.8L330.5 466.4Z" fill="#67645e"/><path d="M328.9 466.7L330.4 474.1L333.9 473.4L332.5 466.1Z" fill="#696760"/><path d="M330.9 466.3L332.3 473.7L335.9 473.0L334.5 465.7Z" fill="#6b6962"/><path d="M332.9 466.0L334.3 473.3L337.9 472.6L336.5 465.4Z" fill="#6e6c65"/><path d="M334.9 465.7L336.3 472.9L339.8 472.2L338.5 465.0Z" fill="#706e67"/><path d="M336.9 465.3L338.3 472.5L341.8 471.8L340.5 464.7Z" fill="#6e6b65"/><path d="M338.9 465.0L340.2 472.1L343.8 471.4L342.5 464.3Z" fill="#6b6962"/><path d="M340.9 464.6L342.2 471.7L345.8 470.9L344.5 464.0Z" fill="#686660"/><path d="M342.9 464.3L344.2 471.3L347.8 470.5L346.4 463.6Z" fill="#66645e"/><path d="M344.9 463.9L346.2 470.9L349.7 470.1L348.4 463.3Z" fill="#63615c"/><path d="M346.8 463.6L348.1 470.5L351.7 469.7L350.4 463.0Z" fill="#65635e"/><path d="M348.8 463.2L350.1 470.1L353.7 469.3L352.4 462.6Z" fill="#6c6a65"/><path d="M350.8 462.9L352.1 469.6L355.7 468.9L354.4 462.3Z" fill="#72716b"/><path d="M352.8 462.5L354.1 469.2L357.6 468.5L356.4 461.9Z" fill="#797772"/><path d="M354.8 462.2L356.1 468.8L359.6 468.1L358.4 461.6Z" fill="#7f7e78"/><path d="M356.8 461.8L358.0 468.4L361.6 467.7L360.4 461.2Z" fill="#807f79"/><path d="M358.8 461.5L360.0 468.0L363.6 467.3L362.4 460.9Z" fill="#7f7e78"/><path d="M360.8 461.2L362.0 467.6L365.5 466.9L364.3 460.5Z" fill="#7e7c77"/><path d="M300.6 479.5L302.4 487.9L305.9 487.1L304.1 478.8Z" fill="#615e59"/><path d="M302.5 479.1L304.4 487.5L307.9 486.6L306.1 478.4Z" fill="#62605a"/><path d="M304.5 478.7L306.3 487.0L309.9 486.1L308.1 478.0Z" fill="#64615c"/><path d="M306.5 478.3L308.3 486.5L311.8 485.7L310.0 477.6Z" fill="#686661"/><path d="M308.5 477.9L310.3 486.1L313.8 485.2L312.0 477.2Z" fill="#6c6b66"/><path d="M310.4 477.5L312.2 485.6L315.8 484.7L314.0 476.8Z" fill="#70706b"/><path d="M312.4 477.1L314.2 485.1L317.7 484.3L316.0 476.4Z" fill="#74746f"/><path d="M314.4 476.7L316.2 484.7L319.7 483.8L318.0 476.0Z" fill="#71716c"/><path d="M316.4 476.3L318.1 484.2L321.7 483.4L319.9 475.6Z" fill="#6f6e69"/><path d="M318.3 475.9L320.1 483.7L323.6 482.9L321.9 475.1Z" fill="#6c6c66"/><path d="M320.3 475.5L322.1 483.3L325.6 482.4L323.9 474.7Z" fill="#6a6964"/><path d="M322.3 475.1L324.0 482.8L327.6 482.0L325.9 474.3Z" fill="#686661"/><path d="M324.3 474.7L326.0 482.3L329.5 481.5L327.8 473.9Z" fill="#65635e"/><path d="M326.3 474.3L327.9 481.9L331.5 481.0L329.8 473.5Z" fill="#66645f"/><path d="M328.2 473.8L329.9 481.4L333.4 480.6L331.8 473.1Z" fill="#696761"/><path d="M330.2 473.4L331.9 480.9L335.4 480.1L333.8 472.7Z" fill="#6c6a63"/><path d="M332.2 473.0L333.8 480.5L337.4 479.6L335.7 472.3Z" fill="#6f6d66"/><path d="M334.2 472.6L335.8 480.0L339.3 479.2L337.7 471.9Z" fill="#727069"/><path d="M336.1 472.2L337.8 479.5L341.3 478.7L339.7 471.5Z" fill="#75726b"/><path d="M338.1 471.8L339.7 479.1L343.3 478.2L341.7 471.1Z" fill="#726f68"/><path d="M340.1 471.4L341.7 478.6L345.2 477.8L343.7 470.7Z" fill="#6e6c66"/><path d="M342.1 471.0L343.7 478.1L347.2 477.3L345.6 470.3Z" fill="#6b6963"/><path d="M344.1 470.6L345.6 477.7L349.2 476.8L347.6 469.9Z" fill="#686660"/><path d="M346.0 470.2L347.6 477.2L351.1 476.4L349.6 469.4Z" fill="#65635e"/><path d="M348.0 469.8L349.6 476.7L353.1 475.9L351.6 469.0Z" fill="#66655f"/><path d="M350.0 469.4L351.5 476.3L355.0 475.4L353.5 468.6Z" fill="#6d6b66"/><path d="M352.0 469.0L353.5 475.8L357.0 475.0L355.5 468.2Z" fill="#73726c"/><path d="M353.9 468.5L355.4 475.3L359.0 474.5L357.5 467.8Z" fill="#7a7873"/><path d="M355.9 468.1L357.4 474.9L360.9 474.0L359.5 467.4Z" fill="#807f79"/><path d="M357.9 467.7L359.4 474.4L362.9 473.6L361.5 467.0Z" fill="#807f7a"/><path d="M359.9 467.3L361.3 473.9L364.9 473.1L363.4 466.6Z" fill="#7e7d77"/><path d="M361.8 466.9L363.3 473.5L366.8 472.6L365.4 466.2Z" fill="#7c7b75"/><path d="M302.2 487.2L304.4 495.6L307.9 494.7L305.8 486.4Z" fill="#605d58"/><path d="M304.2 486.8L306.3 495.1L309.8 494.2L307.7 485.9Z" fill="#625f5a"/><path d="M306.2 486.3L308.3 494.6L311.8 493.6L309.7 485.5Z" fill="#64625c"/><path d="M308.1 485.8L310.2 494.1L313.7 493.1L311.7 485.0Z" fill="#696862"/><path d="M310.1 485.4L312.2 493.5L315.7 492.6L313.6 484.5Z" fill="#6e6d68"/><path d="M312.1 484.9L314.1 493.0L317.6 492.1L315.6 484.1Z" fill="#73736e"/><path d="M314.0 484.4L316.1 492.5L319.6 491.5L317.6 483.6Z" fill="#787873"/><path d="M316.0 484.0L318.0 492.0L321.5 491.0L319.5 483.1Z" fill="#757570"/><path d="M318.0 483.5L320.0 491.4L323.5 490.5L321.5 482.7Z" fill="#72726d"/><path d="M319.9 483.0L321.9 490.9L325.4 490.0L323.5 482.2Z" fill="#6f6f6a"/><path d="M321.9 482.6L323.9 490.4L327.4 489.4L325.4 481.7Z" fill="#6d6c66"/><path d="M323.9 482.1L325.8 489.9L329.3 488.9L327.4 481.3Z" fill="#6a6863"/><path d="M325.8 481.6L327.8 489.3L331.3 488.4L329.4 480.8Z" fill="#676560"/><path d="M327.8 481.2L329.7 488.8L333.2 487.9L331.3 480.3Z" fill="#696761"/><path d="M329.7 480.7L331.7 488.3L335.2 487.4L333.3 479.9Z" fill="#6c6a64"/><path d="M331.7 480.2L333.6 487.8L337.1 486.8L335.2 479.4Z" fill="#6f6d67"/><path d="M333.7 479.8L335.6 487.2L339.1 486.3L337.2 478.9Z" fill="#737069"/><path d="M335.6 479.3L337.5 486.7L341.0 485.8L339.2 478.5Z" fill="#76746d"/><path d="M337.6 478.8L339.5 486.2L343.0 485.3L341.1 478.0Z" fill="#79776f"/><path d="M339.6 478.4L341.4 485.7L344.9 484.7L343.1 477.5Z" fill="#76736c"/><path d="M341.5 477.9L343.4 485.2L346.9 484.2L345.1 477.1Z" fill="#726f69"/><path d="M343.5 477.4L345.3 484.6L348.8 483.7L347.0 476.6Z" fill="#6e6c66"/><path d="M345.5 477.0L347.3 484.1L350.8 483.2L349.0 476.1Z" fill="#6a6862"/><path d="M347.4 476.5L349.2 483.6L352.7 482.6L351.0 475.7Z" fill="#67645f"/><path d="M349.4 476.0L351.2 483.1L354.7 482.1L352.9 475.2Z" fill="#686661"/><path d="M351.4 475.6L353.1 482.5L356.6 481.6L354.9 474.7Z" fill="#6e6c67"/><path d="M353.3 475.1L355.1 482.0L358.6 481.1L356.9 474.3Z" fill="#75736d"/><path d="M355.3 474.6L357.0 481.5L360.5 480.5L358.8 473.8Z" fill="#7b7a74"/><path d="M357.2 474.2L359.0 481.0L362.5 480.0L360.8 473.3Z" fill="#81807a"/><path d="M359.2 473.7L360.9 480.4L364.4 479.5L362.7 472.9Z" fill="#81807a"/><path d="M361.2 473.2L362.9 479.9L366.4 479.0L364.7 472.4Z" fill="#7d7c77"/><path d="M363.1 472.8L364.8 479.4L368.3 478.5L366.7 471.9Z" fill="#7a7973"/><path d="M304.2 494.9L306.5 503.3L310.0 502.3L307.7 494.0Z" fill="#5f5d57"/><path d="M306.1 494.4L308.5 502.8L312.0 501.7L309.6 493.5Z" fill="#615f5a"/><path d="M308.1 493.9L310.4 502.2L313.9 501.1L311.6 493.0Z" fill="#64625d"/><path d="M310.0 493.4L312.3 501.6L315.8 500.6L313.5 492.4Z" fill="#6a6964"/><path d="M312.0 492.9L314.3 501.0L317.8 500.0L315.5 491.9Z" fill="#70706b"/><path d="M313.9 492.3L316.2 500.4L319.7 499.4L317.4 491.4Z" fill="#767772"/><path d="M315.9 491.8L318.2 499.9L321.6 498.8L319.4 490.9Z" fill="#7c7c77"/><path d="M317.8 491.3L320.1 499.3L323.6 498.2L321.3 490.3Z" fill="#797974"/><path d="M319.8 490.8L322.0 498.7L325.5 497.7L323.3 489.8Z" fill="#767570"/><path d="M321.7 490.2L324.0 498.1L327.4 497.1L325.2 489.3Z" fill="#72726d"/><path d="M323.7 489.7L325.9 497.5L329.4 496.5L327.2 488.8Z" fill="#6f6e69"/><path d="M325.6 489.2L327.8 497.0L331.3 495.9L329.1 488.2Z" fill="#6c6b66"/><path d="M327.6 488.7L329.8 496.4L333.3 495.3L331.1 487.7Z" fill="#696762"/><path d="M329.5 488.1L331.7 495.8L335.2 494.8L333.0 487.2Z" fill="#6b6963"/><path d="M331.5 487.6L333.6 495.2L337.1 494.2L335.0 486.7Z" fill="#6f6d66"/><path d="M333.4 487.1L335.6 494.6L339.1 493.6L336.9 486.2Z" fill="#73706a"/><path d="M335.4 486.6L337.5 494.1L341.0 493.0L338.9 485.6Z" fill="#77746d"/><path d="M337.3 486.0L339.4 493.5L342.9 492.4L340.8 485.1Z" fill="#7b7870"/><path d="M339.3 485.5L341.4 492.9L344.9 491.9L342.8 484.6Z" fill="#7e7b73"/><path d="M341.2 485.0L343.3 492.3L346.8 491.3L344.7 484.1Z" fill="#79776f"/><path d="M343.2 484.5L345.3 491.8L348.7 490.7L346.7 483.5Z" fill="#75736c"/><path d="M345.1 484.0L347.2 491.2L350.7 490.1L348.6 483.0Z" fill="#716f68"/><path d="M347.1 483.4L349.1 490.6L352.6 489.6L350.6 482.5Z" fill="#6d6a65"/><path d="M349.0 482.9L351.1 490.0L354.5 489.0L352.5 482.0Z" fill="#686661"/><path d="M351.0 482.4L353.0 489.4L356.5 488.4L354.5 481.4Z" fill="#696762"/><path d="M352.9 481.9L354.9 488.9L358.4 487.8L356.4 480.9Z" fill="#6f6e68"/><path d="M354.9 481.3L356.9 488.3L360.4 487.2L358.4 480.4Z" fill="#76746f"/><path d="M356.8 480.8L358.8 487.7L362.3 486.7L360.3 479.9Z" fill="#7c7b75"/><path d="M358.8 480.3L360.7 487.1L364.2 486.1L362.3 479.3Z" fill="#82817b"/><path d="M360.7 479.8L362.7 486.5L366.2 485.5L364.2 478.8Z" fill="#81807a"/><path d="M362.7 479.2L364.6 486.0L368.1 484.9L366.2 478.3Z" fill="#7d7b76"/><path d="M364.6 478.7L366.5 485.4L370.0 484.3L368.1 477.8Z" fill="#787772"/><path d="M306.3 502.7L308.9 511.0L312.4 509.9L309.8 501.6Z" fill="#5e5c57"/><path d="M308.3 502.1L310.9 510.4L314.3 509.3L311.8 501.0Z" fill="#615f5a"/><path d="M310.2 501.5L312.8 509.8L316.2 508.6L313.7 500.5Z" fill="#64625d"/><path d="M312.1 500.9L314.7 509.1L318.2 508.0L315.6 499.9Z" fill="#6b6a65"/><path d="M314.1 500.3L316.6 508.5L320.1 507.4L317.6 499.3Z" fill="#73726d"/><path d="M316.0 499.8L318.5 507.9L322.0 506.7L319.5 498.7Z" fill="#7a7a75"/><path d="M318.0 499.2L320.5 507.2L323.9 506.1L321.4 498.1Z" fill="#80817c"/><path d="M319.9 498.6L322.4 506.6L325.8 505.5L323.4 497.6Z" fill="#7c7d78"/><path d="M321.8 498.0L324.3 506.0L327.8 504.8L325.3 497.0Z" fill="#797974"/><path d="M323.8 497.5L326.2 505.3L329.7 504.2L327.2 496.4Z" fill="#757570"/><path d="M325.7 496.9L328.2 504.7L331.6 503.6L329.2 495.8Z" fill="#72716c"/><path d="M327.6 496.3L330.1 504.1L333.5 502.9L331.1 495.3Z" fill="#6f6d68"/><path d="M329.6 495.7L332.0 503.4L335.4 502.3L333.1 494.7Z" fill="#6b6964"/><path d="M331.5 495.1L333.9 502.8L337.4 501.7L335.0 494.1Z" fill="#6d6b66"/><path d="M333.4 494.6L335.8 502.2L339.3 501.0L336.9 493.5Z" fill="#726f69"/><path d="M335.4 494.0L337.8 501.5L341.2 500.4L338.9 492.9Z" fill="#76736d"/><path d="M337.3 493.4L339.7 500.9L343.1 499.8L340.8 492.4Z" fill="#7a7870"/><path d="M339.2 492.8L341.6 500.3L345.0 499.1L342.7 491.8Z" fill="#7f7c74"/><path d="M341.2 492.2L343.5 499.6L347.0 498.5L344.7 491.2Z" fill="#827f77"/><path d="M343.1 491.7L345.4 499.0L348.9 497.9L346.6 490.6Z" fill="#7d7b73"/><path d="M345.1 491.1L347.4 498.4L350.8 497.2L348.5 490.0Z" fill="#79766f"/><path d="M347.0 490.5L349.3 497.8L352.7 496.6L350.5 489.5Z" fill="#74716b"/><path d="M348.9 489.9L351.2 497.1L354.7 496.0L352.4 488.9Z" fill="#6f6d67"/><path d="M350.9 489.3L353.1 496.5L356.6 495.3L354.3 488.3Z" fill="#6a6863"/><path d="M352.8 488.8L355.0 495.9L358.5 494.7L356.3 487.7Z" fill="#6b6964"/><path d="M354.7 488.2L357.0 495.2L360.4 494.1L358.2 487.1Z" fill="#716f6a"/><path d="M356.7 487.6L358.9 494.6L362.3 493.4L360.2 486.6Z" fill="#777670"/><path d="M358.6 487.0L360.8 494.0L364.3 492.8L362.1 486.0Z" fill="#7d7c76"/><path d="M360.5 486.5L362.7 493.3L366.2 492.2L364.0 485.4Z" fill="#83827c"/><path d="M362.5 485.9L364.6 492.7L368.1 491.5L366.0 484.8Z" fill="#81807a"/><path d="M364.4 485.3L366.6 492.1L370.0 490.9L367.9 484.3Z" fill="#7c7b75"/><path d="M366.3 484.7L368.5 491.4L371.9 490.3L369.8 483.7Z" fill="#777570"/><path d="M308.7 510.4L311.6 518.7L315.0 517.5L312.2 509.2Z" fill="#5d5b56"/><path d="M310.6 509.7L313.5 518.0L316.9 516.8L314.1 508.6Z" fill="#615f5a"/><path d="M312.6 509.1L315.4 517.4L318.8 516.1L316.0 508.0Z" fill="#65635e"/><path d="M314.5 508.5L317.3 516.7L320.7 515.4L317.9 507.3Z" fill="#6d6c66"/><path d="M316.4 507.8L319.2 516.0L322.6 514.8L319.9 506.7Z" fill="#75746f"/><path d="M318.3 507.2L321.1 515.3L324.5 514.1L321.8 506.1Z" fill="#7d7d78"/><path d="M320.3 506.6L323.0 514.6L326.4 513.4L323.7 505.4Z" fill="#848580"/><path d="M322.2 505.9L324.9 513.9L328.3 512.7L325.6 504.8Z" fill="#80817c"/><path d="M324.1 505.3L326.8 513.3L330.2 512.0L327.5 504.2Z" fill="#7c7d77"/><path d="M326.0 504.7L328.7 512.6L332.1 511.3L329.5 503.5Z" fill="#787873"/><path d="M327.9 504.0L330.6 511.9L334.0 510.6L331.4 502.9Z" fill="#75746f"/><path d="M329.9 503.4L332.5 511.2L336.0 510.0L333.3 502.3Z" fill="#71706b"/><path d="M331.8 502.8L334.4 510.5L337.9 509.3L335.2 501.6Z" fill="#6d6b66"/><path d="M333.7 502.1L336.3 509.8L339.8 508.6L337.1 501.0Z" fill="#6f6d68"/><path d="M335.6 501.5L338.2 509.1L341.7 507.9L339.1 500.4Z" fill="#74726c"/><path d="M337.5 500.9L340.1 508.5L343.6 507.2L341.0 499.7Z" fill="#797770"/><path d="M339.5 500.3L342.0 507.8L345.5 506.5L342.9 499.1Z" fill="#7e7b74"/><path d="M341.4 499.6L343.9 507.1L347.4 505.8L344.8 498.5Z" fill="#838078"/><path d="M343.3 499.0L345.9 506.4L349.3 505.2L346.8 497.8Z" fill="#87847b"/><path d="M345.2 498.4L347.8 505.7L351.2 504.5L348.7 497.2Z" fill="#817f77"/><path d="M347.1 497.7L349.7 505.0L353.1 503.8L350.6 496.6Z" fill="#7c7972"/><path d="M349.1 497.1L351.6 504.3L355.0 503.1L352.5 495.9Z" fill="#76746d"/><path d="M351.0 496.5L353.5 503.7L356.9 502.4L354.4 495.3Z" fill="#716f69"/><path d="M352.9 495.8L355.4 503.0L358.8 501.7L356.4 494.7Z" fill="#6c6a64"/><path d="M354.8 495.2L357.3 502.3L360.7 501.1L358.3 494.0Z" fill="#6c6a65"/><path d="M356.7 494.6L359.2 501.6L362.6 500.4L360.2 493.4Z" fill="#72706b"/><path d="M358.7 493.9L361.1 500.9L364.5 499.7L362.1 492.8Z" fill="#787771"/><path d="M360.6 493.3L363.0 500.2L366.4 499.0L364.0 492.1Z" fill="#7e7d77"/><path d="M362.5 492.7L364.9 499.5L368.3 498.3L366.0 491.5Z" fill="#85837d"/><path d="M364.4 492.0L366.8 498.9L370.2 497.6L367.9 490.9Z" fill="#82817a"/><path d="M366.3 491.4L368.7 498.2L372.1 496.9L369.8 490.3Z" fill="#7b7a74"/><path d="M368.3 490.8L370.6 497.5L374.0 496.3L371.7 489.6Z" fill="#75736e"/><path d="M311.3 518.1L314.4 526.4L317.8 525.1L314.8 516.8Z" fill="#5c5a55"/><path d="M313.2 517.4L316.3 525.7L319.7 524.3L316.7 516.2Z" fill="#605e59"/><path d="M315.2 516.7L318.2 524.9L321.6 523.6L318.6 515.5Z" fill="#65635e"/><path d="M317.1 516.0L320.1 524.2L323.5 522.9L320.5 514.8Z" fill="#6e6d68"/><path d="M319.0 515.3L322.0 523.5L325.4 522.1L322.4 514.1Z" fill="#777772"/><path d="M320.9 514.6L323.9 522.7L327.3 521.4L324.3 513.4Z" fill="#80817c"/><path d="M322.8 514.0L325.8 522.0L329.2 520.7L326.2 512.7Z" fill="#888984"/><path d="M324.7 513.3L327.6 521.2L331.0 519.9L328.1 512.0Z" fill="#848580"/><path d="M326.6 512.6L329.5 520.5L332.9 519.2L330.0 511.4Z" fill="#7f807b"/><path d="M328.5 511.9L331.4 519.8L334.8 518.4L331.9 510.7Z" fill="#7b7b76"/><path d="M330.4 511.2L333.3 519.0L336.7 517.7L333.8 510.0Z" fill="#777772"/><path d="M332.3 510.5L335.2 518.3L338.6 517.0L335.7 509.3Z" fill="#73726d"/><path d="M334.2 509.9L337.1 517.6L340.5 516.2L337.6 508.6Z" fill="#6f6d68"/><path d="M336.1 509.2L339.0 516.8L342.4 515.5L339.5 507.9Z" fill="#72706a"/><path d="M338.0 508.5L340.8 516.1L344.2 514.8L341.4 507.2Z" fill="#77756f"/><path d="M339.9 507.8L342.7 515.4L346.1 514.0L343.3 506.6Z" fill="#7c7a73"/><path d="M341.8 507.1L344.6 514.6L348.0 513.3L345.2 505.9Z" fill="#827f77"/><path d="M343.7 506.4L346.5 513.9L349.9 512.6L347.1 505.2Z" fill="#87847c"/><path d="M345.6 505.7L348.4 513.1L351.8 511.8L349.0 504.5Z" fill="#8b887f"/><path d="M347.5 505.1L350.3 512.4L353.7 511.1L350.9 503.8Z" fill="#85827a"/><path d="M349.4 504.4L352.2 511.7L355.6 510.3L352.8 503.1Z" fill="#7f7d75"/><path d="M351.3 503.7L354.1 510.9L357.5 509.6L354.8 502.4Z" fill="#797770"/><path d="M353.2 503.0L355.9 510.2L359.3 508.9L356.7 501.8Z" fill="#73716b"/><path d="M355.1 502.3L357.8 509.5L361.2 508.1L358.6 501.1Z" fill="#6d6b66"/><path d="M357.0 501.6L359.7 508.7L363.1 507.4L360.5 500.4Z" fill="#6d6b66"/><path d="M358.9 500.9L361.6 508.0L365.0 506.7L362.4 499.7Z" fill="#73726c"/><path d="M360.8 500.3L363.5 507.3L366.9 505.9L364.3 499.0Z" fill="#797872"/><path d="M362.7 499.6L365.4 506.5L368.8 505.2L366.2 498.3Z" fill="#807e78"/><path d="M364.7 498.9L367.3 505.8L370.7 504.5L368.1 497.7Z" fill="#86857e"/><path d="M366.6 498.2L369.1 505.0L372.5 503.7L370.0 497.0Z" fill="#82817a"/><path d="M368.5 497.5L371.0 504.3L374.4 503.0L371.9 496.3Z" fill="#7b7973"/><path d="M370.4 496.8L372.9 503.6L376.3 502.2L373.8 495.6Z" fill="#73716c"/><path d="M314.2 525.7L317.5 534.0L320.9 532.6L317.6 524.4Z" fill="#5c5a55"/><path d="M316.1 525.0L319.4 533.2L322.7 531.8L319.5 523.7Z" fill="#605e59"/><path d="M318.0 524.3L321.3 532.5L324.6 531.0L321.4 522.9Z" fill="#65635e"/><path d="M319.8 523.5L323.1 531.7L326.5 530.3L323.2 522.2Z" fill="#6e6d68"/><path d="M321.7 522.8L325.0 530.9L328.4 529.5L325.1 521.5Z" fill="#787873"/><path d="M323.6 522.1L326.9 530.1L330.2 528.7L327.0 520.7Z" fill="#82837e"/><path d="M325.5 521.3L328.7 529.3L332.1 527.9L328.9 520.0Z" fill="#8a8c87"/><path d="M327.4 520.6L330.6 528.5L334.0 527.1L330.8 519.3Z" fill="#858782"/><path d="M329.3 519.9L332.5 527.7L335.8 526.3L332.7 518.5Z" fill="#81827d"/><path d="M331.2 519.1L334.3 526.9L337.7 525.5L334.6 517.8Z" fill="#7d7d78"/><path d="M333.0 518.4L336.2 526.2L339.6 524.7L336.4 517.1Z" fill="#787873"/><path d="M334.9 517.6L338.1 525.4L341.4 524.0L338.3 516.3Z" fill="#74736e"/><path d="M336.8 516.9L339.9 524.6L343.3 523.2L340.2 515.6Z" fill="#706e69"/><path d="M338.7 516.2L341.8 523.8L345.2 522.4L342.1 514.8Z" fill="#73716c"/><path d="M340.6 515.4L343.7 523.0L347.0 521.6L344.0 514.1Z" fill="#797771"/><path d="M342.5 514.7L345.5 522.2L348.9 520.8L345.9 513.4Z" fill="#7f7d76"/><path d="M344.4 514.0L347.4 521.4L350.8 520.0L347.8 512.6Z" fill="#85837b"/><path d="M346.3 513.2L349.3 520.7L352.6 519.2L349.7 511.9Z" fill="#8b8880"/><path d="M348.1 512.5L351.1 519.9L354.5 518.5L351.5 511.2Z" fill="#908d84"/><path d="M350.0 511.8L353.0 519.1L356.4 517.7L353.4 510.4Z" fill="#8a877f"/><path d="M351.9 511.0L354.9 518.3L358.2 516.9L355.3 509.7Z" fill="#838179"/><path d="M353.8 510.3L356.7 517.5L360.1 516.1L357.2 509.0Z" fill="#7d7a73"/><path d="M355.7 509.5L358.6 516.7L362.0 515.3L359.1 508.2Z" fill="#76746d"/><path d="M357.6 508.8L360.5 515.9L363.8 514.5L361.0 507.5Z" fill="#706e68"/><path d="M359.5 508.1L362.3 515.2L365.7 513.7L362.9 506.7Z" fill="#6f6d68"/><path d="M361.3 507.3L364.2 514.4L367.6 513.0L364.7 506.0Z" fill="#74736d"/><path d="M363.2 506.6L366.1 513.6L369.4 512.2L366.6 505.3Z" fill="#7a7872"/><path d="M365.1 505.9L367.9 512.8L371.3 511.4L368.5 504.5Z" fill="#7f7e77"/><path d="M367.0 505.1L369.8 512.0L373.2 510.6L370.4 503.8Z" fill="#85847d"/><path d="M368.9 504.4L371.7 511.2L375.0 509.8L372.3 503.1Z" fill="#82817a"/><path d="M370.8 503.7L373.6 510.4L376.9 509.0L374.2 502.3Z" fill="#7b7973"/><path d="M372.7 502.9L375.4 509.7L378.8 508.2L376.1 501.6Z" fill="#74726c"/><path d="M317.2 533.4L320.8 541.6L324.1 540.1L320.6 532.0Z" fill="#5c5a55"/><path d="M319.1 532.6L322.7 540.8L326.0 539.3L322.5 531.2Z" fill="#605e59"/><path d="M321.0 531.8L324.5 539.9L327.8 538.4L324.3 530.4Z" fill="#64625d"/><path d="M322.8 531.0L326.4 539.1L329.7 537.6L326.2 529.6Z" fill="#6e6d68"/><path d="M324.7 530.2L328.2 538.3L331.5 536.8L328.1 528.8Z" fill="#787873"/><path d="M326.6 529.4L330.0 537.4L333.4 535.9L329.9 528.0Z" fill="#82837e"/><path d="M328.5 528.7L331.9 536.6L335.2 535.1L331.8 527.2Z" fill="#8a8c87"/><path d="M330.3 527.9L333.7 535.8L337.1 534.3L333.7 526.5Z" fill="#868782"/><path d="M332.2 527.1L335.6 534.9L338.9 533.4L335.6 525.7Z" fill="#81827d"/><path d="M334.1 526.3L337.4 534.1L340.8 532.6L337.4 524.9Z" fill="#7c7c77"/><path d="M335.9 525.5L339.3 533.3L342.6 531.8L339.3 524.1Z" fill="#787772"/><path d="M337.8 524.7L341.1 532.4L344.5 530.9L341.2 523.3Z" fill="#73726d"/><path d="M339.7 523.9L343.0 531.6L346.3 530.1L343.0 522.5Z" fill="#706e69"/><path d="M341.5 523.2L344.8 530.8L348.2 529.2L344.9 521.7Z" fill="#75736d"/><path d="M343.4 522.4L346.7 529.9L350.0 528.4L346.8 521.0Z" fill="#7c7973"/><path d="M345.3 521.6L348.5 529.1L351.9 527.6L348.6 520.2Z" fill="#828078"/><path d="M347.1 520.8L350.4 528.2L353.7 526.7L350.5 519.4Z" fill="#89877e"/><path d="M349.0 520.0L352.2 527.4L355.6 525.9L352.4 518.6Z" fill="#8f8c84"/><path d="M350.9 519.2L354.1 526.6L357.4 525.1L354.2 517.8Z" fill="#949188"/><path d="M352.7 518.4L355.9 525.7L359.3 524.2L356.1 517.0Z" fill="#908d85"/><path d="M354.6 517.7L357.8 524.9L361.1 523.4L358.0 516.2Z" fill="#89867e"/><path d="M356.5 516.9L359.6 524.1L362.9 522.6L359.8 515.5Z" fill="#817e77"/><path d="M358.3 516.1L361.5 523.2L364.8 521.7L361.7 514.7Z" fill="#797770"/><path d="M360.2 515.3L363.3 522.4L366.6 520.9L363.6 513.9Z" fill="#73716b"/><path d="M362.1 514.5L365.2 521.6L368.5 520.1L365.4 513.1Z" fill="#72706a"/><path d="M363.9 513.7L367.0 520.7L370.3 519.2L367.3 512.3Z" fill="#75736d"/><path d="M365.8 512.9L368.9 519.9L372.2 518.4L369.2 511.5Z" fill="#797771"/><path d="M367.7 512.2L370.7 519.1L374.0 517.6L371.0 510.7Z" fill="#7d7b75"/><path d="M369.5 511.4L372.6 518.2L375.9 516.7L372.9 510.0Z" fill="#83827b"/><path d="M371.4 510.6L374.4 517.4L377.7 515.9L374.8 509.2Z" fill="#818079"/><path d="M373.3 509.8L376.3 516.6L379.6 515.1L376.6 508.4Z" fill="#7c7a74"/><path d="M375.1 509.0L378.1 515.7L381.4 514.2L378.5 507.6Z" fill="#77756f"/><path d="M320.5 541.0L324.3 549.1L327.6 547.5L323.8 539.5Z" fill="#5c5a55"/><path d="M322.4 540.1L326.1 548.2L329.4 546.7L325.7 538.6Z" fill="#5f5d58"/><path d="M324.2 539.3L328.0 547.4L331.2 545.8L327.5 537.8Z" fill="#63615c"/><path d="M326.1 538.5L329.8 546.5L333.1 544.9L329.4 537.0Z" fill="#6e6d68"/><path d="M327.9 537.6L331.6 545.6L334.9 544.0L331.2 536.1Z" fill="#787873"/><path d="M329.8 536.8L333.4 544.7L336.7 543.1L333.1 535.3Z" fill="#82837e"/><path d="M331.6 536.0L335.3 543.8L338.6 542.2L334.9 534.5Z" fill="#8b8d88"/><path d="M333.5 535.1L337.1 542.9L340.4 541.4L336.8 533.6Z" fill="#868782"/><path d="M335.3 534.3L338.9 542.1L342.2 540.5L338.6 532.8Z" fill="#81827d"/><path d="M337.2 533.5L340.8 541.2L344.0 539.6L340.5 532.0Z" fill="#7c7c77"/><path d="M339.0 532.6L342.6 540.3L345.9 538.7L342.3 531.1Z" fill="#777671"/><path d="M340.8 531.8L344.4 539.4L347.7 537.8L344.2 530.3Z" fill="#72716c"/><path d="M342.7 530.9L346.2 538.5L349.5 536.9L346.0 529.4Z" fill="#706e69"/><path d="M344.5 530.1L348.1 537.7L351.4 536.1L347.9 528.6Z" fill="#76746e"/><path d="M346.4 529.3L349.9 536.8L353.2 535.2L349.7 527.8Z" fill="#7e7b74"/><path d="M348.2 528.4L351.7 535.9L355.0 534.3L351.6 526.9Z" fill="#85837b"/><path d="M350.1 527.6L353.5 535.0L356.8 533.4L353.4 526.1Z" fill="#8d8a82"/><path d="M351.9 526.8L355.4 534.1L358.7 532.5L355.3 525.3Z" fill="#939187"/><path d="M353.8 525.9L357.2 533.2L360.5 531.6L357.1 524.4Z" fill="#98958c"/><path d="M355.6 525.1L359.0 532.4L362.3 530.8L359.0 523.6Z" fill="#96938b"/><path d="M357.5 524.3L360.9 531.5L364.1 529.9L360.8 522.8Z" fill="#8e8b83"/><path d="M359.3 523.4L362.7 530.6L366.0 529.0L362.7 521.9Z" fill="#85827b"/><path d="M361.2 522.6L364.5 529.7L367.8 528.1L364.5 521.1Z" fill="#7d7a73"/><path d="M363.0 521.8L366.3 528.8L369.6 527.2L366.4 520.3Z" fill="#76746e"/><path d="M364.9 520.9L368.2 527.9L371.5 526.4L368.2 519.4Z" fill="#74726c"/><path d="M366.7 520.1L370.0 527.1L373.3 525.5L370.1 518.6Z" fill="#76746e"/><path d="M368.6 519.3L371.8 526.2L375.1 524.6L371.9 517.8Z" fill="#777670"/><path d="M370.4 518.4L373.6 525.3L376.9 523.7L373.7 516.9Z" fill="#7b7973"/><path d="M372.3 517.6L375.5 524.4L378.8 522.8L375.6 516.1Z" fill="#817f78"/><path d="M374.1 516.8L377.3 523.5L380.6 521.9L377.4 515.3Z" fill="#817f78"/><path d="M376.0 515.9L379.1 522.6L382.4 521.1L379.3 514.4Z" fill="#7e7c75"/><path d="M377.8 515.1L381.0 521.8L384.3 520.2L381.1 513.6Z" fill="#7b7872"/><path d="M324.0 548.5L328.0 556.6L331.3 554.9L327.3 546.9Z" fill="#5c5a55"/><path d="M325.8 547.6L329.8 555.6L333.1 554.0L329.1 546.0Z" fill="#5f5d58"/><path d="M327.7 546.7L331.6 554.7L334.9 553.0L330.9 545.1Z" fill="#63615c"/><path d="M329.5 545.8L333.4 553.8L336.7 552.1L332.8 544.3Z" fill="#6d6c67"/><path d="M331.3 545.0L335.2 552.9L338.5 551.2L334.6 543.4Z" fill="#787873"/><path d="M333.1 544.1L337.0 551.9L340.3 550.3L336.4 542.5Z" fill="#82847f"/><path d="M335.0 543.2L338.8 551.0L342.1 549.3L338.3 541.6Z" fill="#8b8d88"/><path d="M336.8 542.3L340.6 550.1L343.9 548.4L340.1 540.7Z" fill="#868782"/><path d="M338.6 541.4L342.4 549.1L345.7 547.5L341.9 539.8Z" fill="#81817c"/><path d="M340.4 540.6L344.3 548.2L347.5 546.5L343.7 539.0Z" fill="#7c7b76"/><path d="M342.3 539.7L346.1 547.3L349.3 545.6L345.6 538.1Z" fill="#767671"/><path d="M344.1 538.8L347.9 546.4L351.1 544.7L347.4 537.2Z" fill="#71706b"/><path d="M345.9 537.9L349.7 545.4L352.9 543.7L349.2 536.3Z" fill="#706e69"/><path d="M347.8 537.0L351.5 544.5L354.7 542.8L351.0 535.4Z" fill="#77756f"/><path d="M349.6 536.1L353.3 543.6L356.5 541.9L352.9 534.5Z" fill="#807d76"/><path d="M351.4 535.3L355.1 542.6L358.3 541.0L354.7 533.7Z" fill="#88867e"/><path d="M353.2 534.4L356.9 541.7L360.1 540.0L356.5 532.8Z" fill="#918e85"/><path d="M355.1 533.5L358.7 540.8L362.0 539.1L358.4 531.9Z" fill="#98958b"/><path d="M356.9 532.6L360.5 539.8L363.8 538.2L360.2 531.0Z" fill="#9d9a90"/><path d="M358.7 531.7L362.3 538.9L365.6 537.2L362.0 530.1Z" fill="#9c9990"/><path d="M360.6 530.8L364.1 538.0L367.4 536.3L363.8 529.3Z" fill="#939088"/><path d="M362.4 530.0L365.9 537.1L369.2 535.4L365.7 528.4Z" fill="#89877f"/><path d="M364.2 529.1L367.7 536.1L371.0 534.5L367.5 527.5Z" fill="#807d76"/><path d="M366.0 528.2L369.5 535.2L372.8 533.5L369.3 526.6Z" fill="#7a7770"/><path d="M367.9 527.3L371.3 534.3L374.6 532.6L371.2 525.7Z" fill="#76746e"/><path d="M369.7 526.4L373.2 533.3L376.4 531.7L373.0 524.8Z" fill="#76746e"/><path d="M371.5 525.5L375.0 532.4L378.2 530.7L374.8 524.0Z" fill="#76756e"/><path d="M373.3 524.7L376.8 531.5L380.0 529.8L376.6 523.1Z" fill="#787770"/><path d="M375.2 523.8L378.6 530.5L381.8 528.9L378.5 522.2Z" fill="#7f7d76"/><path d="M377.0 522.9L380.4 529.6L383.6 527.9L380.3 521.3Z" fill="#807e77"/><path d="M378.8 522.0L382.2 528.7L385.4 527.0L382.1 520.4Z" fill="#7f7d76"/><path d="M380.7 521.1L384.0 527.8L387.2 526.1L383.9 519.5Z" fill="#7e7c75"/><path d="M327.7 556.0L331.9 563.9L335.1 562.2L330.9 554.3Z" fill="#5c5a55"/><path d="M329.5 555.0L333.7 563.0L336.9 561.2L332.7 553.4Z" fill="#5f5d58"/><path d="M331.3 554.1L335.5 562.0L338.7 560.2L334.5 552.4Z" fill="#62605b"/><path d="M333.1 553.2L337.2 561.0L340.5 559.3L336.3 551.5Z" fill="#6d6c67"/><path d="M334.9 552.2L339.0 560.0L342.2 558.3L338.2 550.6Z" fill="#787873"/><path d="M336.7 551.3L340.8 559.1L344.0 557.3L340.0 549.6Z" fill="#83847f"/><path d="M338.5 550.4L342.6 558.1L345.8 556.3L341.8 548.7Z" fill="#8c8e89"/><path d="M340.3 549.4L344.4 557.1L347.6 555.4L343.6 547.8Z" fill="#868883"/><path d="M342.1 548.5L346.2 556.1L349.4 554.4L345.4 546.8Z" fill="#81817c"/><path d="M343.9 547.6L347.9 555.2L351.2 553.4L347.2 545.9Z" fill="#7b7b76"/><path d="M345.7 546.7L349.7 554.2L352.9 552.4L349.0 545.0Z" fill="#767570"/><path d="M347.5 545.7L351.5 553.2L354.7 551.5L350.8 544.1Z" fill="#706e69"/><path d="M349.4 544.8L353.3 552.2L356.5 550.5L352.6 543.1Z" fill="#706e69"/><path d="M351.2 543.9L355.1 551.3L358.3 549.5L354.4 542.2Z" fill="#787670"/><path d="M353.0 542.9L356.9 550.3L360.1 548.5L356.2 541.3Z" fill="#828078"/><path d="M354.8 542.0L358.6 549.3L361.9 547.6L358.0 540.3Z" fill="#8b8980"/><path d="M356.6 541.1L360.4 548.3L363.6 546.6L359.8 539.4Z" fill="#959289"/><path d="M358.4 540.2L362.2 547.4L365.4 545.6L361.6 538.5Z" fill="#9c998f"/><path d="M360.2 539.2L364.0 546.4L367.2 544.6L363.4 537.5Z" fill="#a19e94"/><path d="M362.0 538.3L365.8 545.4L369.0 543.7L365.2 536.6Z" fill="#a2a096"/><path d="M363.8 537.4L367.6 544.4L370.8 542.7L367.1 535.7Z" fill="#98958c"/><path d="M365.6 536.4L369.3 543.5L372.6 541.7L368.9 534.8Z" fill="#8e8b82"/><path d="M367.4 535.5L371.1 542.5L374.3 540.7L370.7 533.8Z" fill="#838179"/><path d="M369.2 534.6L372.9 541.5L376.1 539.7L372.5 532.9Z" fill="#7d7a73"/><path d="M371.0 533.6L374.7 540.5L377.9 538.8L374.3 532.0Z" fill="#797770"/><path d="M372.8 532.7L376.5 539.6L379.7 537.8L376.1 531.0Z" fill="#77756f"/><path d="M374.6 531.8L378.3 538.6L381.5 536.8L377.9 530.1Z" fill="#75736d"/><path d="M376.4 530.9L380.0 537.6L383.3 535.8L379.7 529.2Z" fill="#76746e"/><path d="M378.2 529.9L381.8 536.6L385.0 534.9L381.5 528.3Z" fill="#7c7b74"/><path d="M380.1 529.0L383.6 535.6L386.8 533.9L383.3 527.3Z" fill="#7f7d76"/><path d="M381.9 528.1L385.4 534.7L388.6 532.9L385.1 526.4Z" fill="#807e77"/><path d="M383.7 527.1L387.2 533.7L390.4 531.9L386.9 525.5Z" fill="#817f78"/><path d="M331.6 563.3L336.0 571.2L339.1 569.4L334.8 561.6Z" fill="#5c5a55"/><path d="M333.3 562.4L337.7 570.2L340.9 568.4L336.6 560.6Z" fill="#5e5c57"/><path d="M335.1 561.4L339.5 569.2L342.7 567.3L338.3 559.6Z" fill="#615f5a"/><path d="M336.9 560.4L341.3 568.2L344.4 566.3L340.1 558.6Z" fill="#6d6c67"/><path d="M338.7 559.4L343.0 567.1L346.2 565.3L341.9 557.7Z" fill="#787873"/><path d="M340.5 558.5L344.8 566.1L347.9 564.3L343.7 556.7Z" fill="#83847f"/><path d="M342.3 557.5L346.5 565.1L349.7 563.3L345.5 555.7Z" fill="#8c8e89"/><path d="M344.0 556.5L348.3 564.1L351.5 562.2L347.3 554.7Z" fill="#878883"/><path d="M345.8 555.5L350.1 563.1L353.2 561.2L349.0 553.8Z" fill="#81817c"/><path d="M347.6 554.6L351.8 562.0L355.0 560.2L350.8 552.8Z" fill="#7b7b76"/><path d="M349.4 553.6L353.6 561.0L356.7 559.2L352.6 551.8Z" fill="#75746f"/><path d="M351.2 552.6L355.3 560.0L358.5 558.2L354.4 550.8Z" fill="#6f6d68"/><path d="M353.0 551.6L357.1 559.0L360.3 557.1L356.2 549.9Z" fill="#706e69"/><path d="M354.7 550.6L358.8 557.9L362.0 556.1L358.0 548.9Z" fill="#7a7771"/><path d="M356.5 549.7L360.6 556.9L363.8 555.1L359.7 547.9Z" fill="#84827a"/><path d="M358.3 548.7L362.4 555.9L365.5 554.1L361.5 546.9Z" fill="#8e8c83"/><path d="M360.1 547.7L364.1 554.9L367.3 553.0L363.3 546.0Z" fill="#99968c"/><path d="M361.9 546.7L365.9 553.9L369.1 552.0L365.1 545.0Z" fill="#a09d93"/><path d="M363.7 545.8L367.6 552.8L370.8 551.0L366.9 544.0Z" fill="#a6a399"/><path d="M365.4 544.8L369.4 551.8L372.6 550.0L368.7 543.0Z" fill="#a9a69c"/><path d="M367.2 543.8L371.2 550.8L374.3 549.0L370.4 542.1Z" fill="#9d9a91"/><path d="M369.0 542.8L372.9 549.8L376.1 547.9L372.2 541.1Z" fill="#928f86"/><path d="M370.8 541.9L374.7 548.8L377.9 546.9L374.0 540.1Z" fill="#87847c"/><path d="M372.6 540.9L376.4 547.7L379.6 545.9L375.8 539.1Z" fill="#807e76"/><path d="M374.4 539.9L378.2 546.7L381.4 544.9L377.6 538.2Z" fill="#7b7972"/><path d="M376.1 538.9L380.0 545.7L383.1 543.9L379.3 537.2Z" fill="#78766f"/><path d="M377.9 538.0L381.7 544.7L384.9 542.8L381.1 536.2Z" fill="#74726c"/><path d="M379.7 537.0L383.5 543.7L386.6 541.8L382.9 535.2Z" fill="#74726c"/><path d="M381.5 536.0L385.2 542.6L388.4 540.8L384.7 534.3Z" fill="#7a7872"/><path d="M383.3 535.0L387.0 541.6L390.2 539.8L386.5 533.3Z" fill="#7f7c75"/><path d="M385.1 534.1L388.8 540.6L391.9 538.7L388.3 532.3Z" fill="#827f78"/><path d="M386.8 533.1L390.5 539.6L393.7 537.7L390.0 531.3Z" fill="#85827a"/><path d="M335.6 570.6L340.2 578.4L343.4 576.5L338.8 568.8Z" fill="#5c5a56"/><path d="M337.4 569.6L342.0 577.3L345.1 575.4L340.6 567.8Z" fill="#5e5c57"/><path d="M339.1 568.6L343.7 576.3L346.8 574.3L342.3 566.7Z" fill="#615f5a"/><path d="M340.9 567.6L345.4 575.2L348.6 573.3L344.1 565.7Z" fill="#6c6b66"/><path d="M342.7 566.5L347.2 574.1L350.3 572.2L345.8 564.7Z" fill="#787873"/><path d="M344.4 565.5L348.9 573.1L352.0 571.1L347.6 563.7Z" fill="#83847f"/><path d="M346.2 564.5L350.6 572.0L353.8 570.1L349.3 562.7Z" fill="#8d8f8a"/><path d="M347.9 563.5L352.4 570.9L355.5 569.0L351.1 561.6Z" fill="#878883"/><path d="M349.7 562.4L354.1 569.9L357.2 567.9L352.9 560.6Z" fill="#81817c"/><path d="M351.5 561.4L355.9 568.8L359.0 566.9L354.6 559.6Z" fill="#7a7a75"/><path d="M353.2 560.4L357.6 567.7L360.7 565.8L356.4 558.6Z" fill="#74736e"/><path d="M355.0 559.4L359.3 566.7L362.4 564.8L358.1 557.5Z" fill="#6e6c67"/><path d="M356.7 558.4L361.1 565.6L364.2 563.7L359.9 556.5Z" fill="#706e68"/><path d="M358.5 557.3L362.8 564.5L365.9 562.6L361.7 555.5Z" fill="#7b7972"/><path d="M360.3 556.3L364.5 563.5L367.6 561.6L363.4 554.5Z" fill="#86847c"/><path d="M362.0 555.3L366.3 562.4L369.4 560.5L365.2 553.5Z" fill="#918f86"/><path d="M363.8 554.3L368.0 561.3L371.1 559.4L366.9 552.4Z" fill="#9d9a8f"/><path d="M365.5 553.3L369.7 560.3L372.9 558.4L368.7 551.4Z" fill="#a4a197"/><path d="M367.3 552.2L371.5 559.2L374.6 557.3L370.5 550.4Z" fill="#aaa79d"/><path d="M369.1 551.2L373.2 558.1L376.3 556.2L372.2 549.4Z" fill="#afaca2"/><path d="M370.8 550.2L374.9 557.1L378.1 555.2L374.0 548.4Z" fill="#a29f96"/><path d="M372.6 549.2L376.7 556.0L379.8 554.1L375.7 547.3Z" fill="#96938a"/><path d="M374.3 548.2L378.4 554.9L381.5 553.0L377.5 546.3Z" fill="#8a877e"/><path d="M376.1 547.1L380.1 553.9L383.3 552.0L379.3 545.3Z" fill="#848179"/><path d="M377.9 546.1L381.9 552.8L385.0 550.9L381.0 544.3Z" fill="#7e7b74"/><path d="M379.6 545.1L383.6 551.7L386.7 549.8L382.8 543.3Z" fill="#79766f"/><path d="M381.4 544.1L385.3 550.7L388.5 548.8L384.5 542.2Z" fill="#73716b"/><path d="M383.1 543.0L387.1 549.6L390.2 547.7L386.3 541.2Z" fill="#727069"/><path d="M384.9 542.0L388.8 548.5L391.9 546.6L388.1 540.2Z" fill="#78766f"/><path d="M386.6 541.0L390.5 547.5L393.7 545.6L389.8 539.2Z" fill="#7e7b74"/><path d="M388.4 540.0L392.3 546.4L395.4 544.5L391.6 538.1Z" fill="#838079"/><path d="M390.2 539.0L394.0 545.4L397.1 543.4L393.3 537.1Z" fill="#88857d"/><path d="M339.9 577.8L344.7 585.5L347.8 583.5L343.0 575.9Z" fill="#5c5a56"/><path d="M341.6 576.7L346.4 584.3L349.5 582.3L344.7 574.8Z" fill="#5e5c57"/><path d="M343.3 575.7L348.1 583.2L351.2 581.2L346.5 573.7Z" fill="#605e59"/><path d="M345.1 574.6L349.8 582.1L352.9 580.1L348.2 572.7Z" fill="#6c6b66"/><path d="M346.8 573.5L351.5 581.0L354.6 579.0L349.9 571.6Z" fill="#787873"/><path d="M348.5 572.5L353.2 579.9L356.3 577.9L351.7 570.6Z" fill="#838580"/><path d="M350.3 571.4L354.9 578.8L358.0 576.8L353.4 569.5Z" fill="#8d8f8a"/><path d="M352.0 570.3L356.6 577.7L359.7 575.7L355.1 568.4Z" fill="#878883"/><path d="M353.8 569.3L358.3 576.6L361.4 574.6L356.9 567.4Z" fill="#80817c"/><path d="M355.5 568.2L360.1 575.5L363.1 573.5L358.6 566.3Z" fill="#7a7a75"/><path d="M357.2 567.1L361.8 574.4L364.8 572.4L360.3 565.2Z" fill="#74736e"/><path d="M359.0 566.1L363.5 573.2L366.5 571.2L362.1 564.2Z" fill="#6d6c67"/><path d="M360.7 565.0L365.2 572.1L368.3 570.1L363.8 563.1Z" fill="#706e68"/><path d="M362.4 563.9L366.9 571.0L370.0 569.0L365.5 562.0Z" fill="#7c7a73"/><path d="M364.2 562.9L368.6 569.9L371.7 567.9L367.3 561.0Z" fill="#88857d"/><path d="M365.9 561.8L370.3 568.8L373.4 566.8L369.0 559.9Z" fill="#949188"/><path d="M367.6 560.7L372.0 567.7L375.1 565.7L370.7 558.8Z" fill="#a09d92"/><path d="M369.4 559.7L373.7 566.6L376.8 564.6L372.5 557.8Z" fill="#a8a59b"/><path d="M371.1 558.6L375.4 565.5L378.5 563.5L374.2 556.7Z" fill="#afaca2"/><path d="M372.8 557.5L377.1 564.4L380.2 562.4L376.0 555.6Z" fill="#b6b3a9"/><path d="M374.6 556.5L378.9 563.2L381.9 561.3L377.7 554.6Z" fill="#a8a59c"/><path d="M376.3 555.4L380.6 562.1L383.6 560.1L379.4 553.5Z" fill="#9a978e"/><path d="M378.0 554.3L382.3 561.0L385.3 559.0L381.2 552.4Z" fill="#8c8980"/><path d="M379.8 553.3L384.0 559.9L387.1 557.9L382.9 551.4Z" fill="#86837b"/><path d="M381.5 552.2L385.7 558.8L388.8 556.8L384.6 550.3Z" fill="#7f7d75"/><path d="M383.2 551.2L387.4 557.7L390.5 555.7L386.4 549.2Z" fill="#797770"/><path d="M385.0 550.1L389.1 556.6L392.2 554.6L388.1 548.2Z" fill="#73706a"/><path d="M386.7 549.0L390.8 555.5L393.9 553.5L389.8 547.1Z" fill="#706e68"/><path d="M388.4 548.0L392.5 554.4L395.6 552.4L391.6 546.0Z" fill="#77746e"/><path d="M390.2 546.9L394.2 553.3L397.3 551.3L393.3 545.0Z" fill="#7d7b73"/><path d="M391.9 545.8L395.9 552.1L399.0 550.1L395.0 543.9Z" fill="#848179"/><path d="M393.6 544.8L397.6 551.0L400.7 549.0L396.8 542.8Z" fill="#8b887f"/><path d="M344.3 584.9L349.3 592.4L352.3 590.3L347.4 582.9Z" fill="#5c5a56"/><path d="M346.0 583.8L351.0 591.2L354.0 589.2L349.1 581.8Z" fill="#5e5c57"/><path d="M347.7 582.6L352.7 590.1L355.7 588.0L350.8 580.6Z" fill="#605e59"/><path d="M349.4 581.5L354.3 588.9L357.4 586.8L352.5 579.5Z" fill="#6c6b66"/><path d="M351.1 580.4L356.0 587.8L359.0 585.7L354.2 578.4Z" fill="#787873"/><path d="M352.8 579.3L357.7 586.6L360.7 584.5L355.9 577.3Z" fill="#838580"/><path d="M354.6 578.2L359.4 585.5L362.4 583.4L357.6 576.2Z" fill="#8d8f8a"/><path d="M356.3 577.1L361.1 584.3L364.1 582.2L359.3 575.1Z" fill="#878883"/><path d="M358.0 576.0L362.7 583.2L365.8 581.1L361.0 574.0Z" fill="#80817c"/><path d="M359.7 574.9L364.4 582.0L367.4 579.9L362.8 572.9Z" fill="#7a7a75"/><path d="M361.4 573.8L366.1 580.8L369.1 578.8L364.5 571.8Z" fill="#74736e"/><path d="M363.1 572.7L367.8 579.7L370.8 577.6L366.2 570.7Z" fill="#6d6c67"/><path d="M364.8 571.5L369.5 578.5L372.5 576.5L367.9 569.5Z" fill="#706e68"/><path d="M366.5 570.4L371.1 577.4L374.2 575.3L369.6 568.4Z" fill="#7c7a73"/><path d="M368.2 569.3L372.8 576.2L375.9 574.2L371.3 567.3Z" fill="#89867e"/><path d="M369.9 568.2L374.5 575.1L377.5 573.0L373.0 566.2Z" fill="#959289"/><path d="M371.6 567.1L376.2 573.9L379.2 571.8L374.7 565.1Z" fill="#a19e93"/><path d="M373.3 566.0L377.9 572.8L380.9 570.7L376.4 564.0Z" fill="#aca99f"/><path d="M375.1 564.9L379.6 571.6L382.6 569.5L378.1 562.9Z" fill="#b7b4aa"/><path d="M376.8 563.8L381.2 570.5L384.3 568.4L379.8 561.8Z" fill="#c1beb5"/><path d="M378.5 562.7L382.9 569.3L385.9 567.2L381.5 560.7Z" fill="#b0ada4"/><path d="M380.2 561.6L384.6 568.2L387.6 566.1L383.3 559.6Z" fill="#9d9a91"/><path d="M381.9 560.4L386.3 567.0L389.3 564.9L385.0 558.4Z" fill="#8c8980"/><path d="M383.6 559.3L388.0 565.8L391.0 563.8L386.7 557.3Z" fill="#86837b"/><path d="M385.3 558.2L389.6 564.7L392.7 562.6L388.4 556.2Z" fill="#7f7d75"/><path d="M387.0 557.1L391.3 563.5L394.3 561.5L390.1 555.1Z" fill="#797770"/><path d="M388.7 556.0L393.0 562.4L396.0 560.3L391.8 554.0Z" fill="#73706a"/><path d="M390.4 554.9L394.7 561.2L397.7 559.1L393.5 552.9Z" fill="#706e68"/><path d="M392.1 553.8L396.4 560.1L399.4 558.0L395.2 551.8Z" fill="#77746e"/><path d="M393.8 552.7L398.0 558.9L401.1 556.8L396.9 550.7Z" fill="#7d7b73"/><path d="M395.6 551.6L399.7 557.8L402.7 555.7L398.6 549.6Z" fill="#848179"/><path d="M397.3 550.4L401.4 556.6L404.4 554.5L400.3 548.5Z" fill="#8b887f"/><path d="M348.9 591.8L354.1 599.2L357.0 597.0L351.9 589.7Z" fill="#5c5a56"/><path d="M350.6 590.7L355.7 598.0L358.7 595.8L353.6 588.6Z" fill="#5e5c57"/><path d="M352.3 589.5L357.4 596.8L360.3 594.6L355.3 587.4Z" fill="#605e59"/><path d="M353.9 588.3L359.0 595.6L362.0 593.4L357.0 586.3Z" fill="#6c6b66"/><path d="M355.6 587.2L360.7 594.4L363.7 592.2L358.6 585.1Z" fill="#787873"/><path d="M357.3 586.0L362.3 593.2L365.3 591.0L360.3 584.0Z" fill="#838580"/><path d="M359.0 584.9L364.0 592.0L367.0 589.8L362.0 582.8Z" fill="#8d8f8a"/><path d="M360.7 583.7L365.6 590.8L368.6 588.6L363.7 581.7Z" fill="#878883"/><path d="M362.3 582.6L367.3 589.6L370.3 587.4L365.4 580.5Z" fill="#80817c"/><path d="M364.0 581.4L368.9 588.4L371.9 586.3L367.1 579.3Z" fill="#7a7a75"/><path d="M365.7 580.3L370.6 587.2L373.6 585.1L368.7 578.2Z" fill="#74736e"/><path d="M367.4 579.1L372.2 586.0L375.2 583.9L370.4 577.0Z" fill="#6d6c67"/><path d="M369.1 578.0L373.9 584.8L376.9 582.7L372.1 575.9Z" fill="#706e69"/><path d="M370.8 576.8L375.5 583.6L378.5 581.5L373.8 574.7Z" fill="#7d7a74"/><path d="M372.4 575.7L377.2 582.4L380.2 580.3L375.5 573.6Z" fill="#89877f"/><path d="M374.1 574.5L378.9 581.2L381.8 579.1L377.1 572.4Z" fill="#96938a"/><path d="M375.8 573.3L380.5 580.0L383.5 577.9L378.8 571.3Z" fill="#a29f95"/><path d="M377.5 572.2L382.2 578.8L385.1 576.7L380.5 570.1Z" fill="#b0ada3"/><path d="M379.2 571.0L383.8 577.6L386.8 575.5L382.2 569.0Z" fill="#bebbb2"/><path d="M380.8 569.9L385.5 576.4L388.4 574.3L383.9 567.8Z" fill="#cccac1"/><path d="M382.5 568.7L387.1 575.2L390.1 573.1L385.5 566.7Z" fill="#b7b4ab"/><path d="M384.2 567.6L388.8 574.0L391.7 571.9L387.2 565.5Z" fill="#a19e95"/><path d="M385.9 566.4L390.4 572.8L393.4 570.7L388.9 564.3Z" fill="#8c8980"/><path d="M387.6 565.3L392.1 571.6L395.0 569.5L390.6 563.2Z" fill="#86837b"/><path d="M389.2 564.1L393.7 570.4L396.7 568.3L392.3 562.0Z" fill="#7f7d75"/><path d="M390.9 563.0L395.4 569.2L398.3 567.1L393.9 560.9Z" fill="#797770"/><path d="M392.6 561.8L397.0 568.0L400.0 565.9L395.6 559.7Z" fill="#73706a"/><path d="M394.3 560.6L398.7 566.9L401.7 564.7L397.3 558.6Z" fill="#706e68"/><path d="M396.0 559.5L400.3 565.7L403.3 563.5L399.0 557.4Z" fill="#77746e"/><path d="M397.6 558.3L402.0 564.5L405.0 562.3L400.7 556.3Z" fill="#7d7b73"/><path d="M399.3 557.2L403.6 563.3L406.6 561.1L402.4 555.1Z" fill="#848179"/><path d="M401.0 556.0L405.3 562.1L408.3 559.9L404.0 554.0Z" fill="#8b887f"/><path d="M353.7 598.6L359.0 605.8L361.9 603.6L356.6 596.5Z" fill="#5c5a56"/><path d="M355.3 597.4L360.6 604.6L363.5 602.4L358.3 595.3Z" fill="#5e5c57"/><path d="M357.0 596.2L362.2 603.4L365.2 601.1L359.9 594.1Z" fill="#605e59"/><path d="M358.6 595.0L363.9 602.1L366.8 599.9L361.6 592.9Z" fill="#6c6b66"/><path d="M360.3 593.8L365.5 600.9L368.4 598.6L363.2 591.7Z" fill="#787873"/><path d="M361.9 592.6L367.1 599.6L370.0 597.4L364.9 590.5Z" fill="#838580"/><path d="M363.6 591.4L368.7 598.4L371.7 596.2L366.5 589.3Z" fill="#8d8f8a"/><path d="M365.2 590.2L370.4 597.2L373.3 594.9L368.2 588.1Z" fill="#878883"/><path d="M366.9 589.0L372.0 595.9L374.9 593.7L369.9 586.9Z" fill="#80817c"/><path d="M368.5 587.8L373.6 594.7L376.5 592.4L371.5 585.7Z" fill="#7a7a75"/><path d="M370.2 586.6L375.2 593.4L378.1 591.2L373.2 584.5Z" fill="#74736e"/><path d="M371.8 585.4L376.8 592.2L379.8 590.0L374.8 583.3Z" fill="#6d6c67"/><path d="M373.5 584.2L378.5 590.9L381.4 588.7L376.5 582.1Z" fill="#706e69"/><path d="M375.1 583.1L380.1 589.7L383.0 587.5L378.1 580.9Z" fill="#7d7b74"/><path d="M376.8 581.9L381.7 588.5L384.6 586.2L379.8 579.7Z" fill="#8a877f"/><path d="M378.4 580.7L383.3 587.2L386.3 585.0L381.4 578.5Z" fill="#97948a"/><path d="M380.1 579.5L385.0 586.0L387.9 583.8L383.1 577.3Z" fill="#a3a096"/><path d="M381.7 578.3L386.6 584.7L389.5 582.5L384.7 576.1Z" fill="#b4b1a7"/><path d="M383.4 577.1L388.2 583.5L391.1 581.3L386.4 574.9Z" fill="#c5c3ba"/><path d="M385.1 575.9L389.8 582.3L392.7 580.0L388.0 573.7Z" fill="#d7d5cd"/><path d="M386.7 574.7L391.4 581.0L394.4 578.8L389.7 572.5Z" fill="#bebcb3"/><path d="M388.4 573.5L393.1 579.8L396.0 577.5L391.3 571.3Z" fill="#a4a199"/><path d="M390.0 572.3L394.7 578.5L397.6 576.3L393.0 570.1Z" fill="#8c8980"/><path d="M391.7 571.1L396.3 577.3L399.2 575.1L394.6 568.9Z" fill="#86837b"/><path d="M393.3 569.9L397.9 576.1L400.9 573.8L396.3 567.7Z" fill="#7f7d75"/><path d="M395.0 568.7L399.6 574.8L402.5 572.6L397.9 566.5Z" fill="#797770"/><path d="M396.6 567.5L401.2 573.6L404.1 571.3L399.6 565.3Z" fill="#73706a"/><path d="M398.3 566.3L402.8 572.3L405.7 570.1L401.2 564.1Z" fill="#706e68"/><path d="M399.9 565.1L404.4 571.1L407.3 568.9L402.9 562.9Z" fill="#77746e"/><path d="M401.6 563.9L406.0 569.9L409.0 567.6L404.5 561.7Z" fill="#7d7b73"/><path d="M403.2 562.7L407.7 568.6L410.6 566.4L406.2 560.5Z" fill="#848179"/><path d="M404.9 561.5L409.3 567.4L412.2 565.1L407.9 559.3Z" fill="#8b887f"/><path d="M358.6 605.3L364.1 612.3L366.9 610.0L361.5 603.0Z" fill="#5c5a56"/><path d="M360.2 604.0L365.7 611.0L368.5 608.7L363.1 601.8Z" fill="#5e5c57"/><path d="M361.8 602.8L367.3 609.8L370.1 607.5L364.7 600.6Z" fill="#605e59"/><path d="M363.4 601.6L368.9 608.5L371.7 606.2L366.4 599.3Z" fill="#6c6b66"/><path d="M365.1 600.3L370.4 607.2L373.3 604.9L368.0 598.1Z" fill="#787873"/><path d="M366.7 599.1L372.0 605.9L374.9 603.6L369.6 596.8Z" fill="#838580"/><path d="M368.3 597.8L373.6 604.6L376.5 602.3L371.2 595.6Z" fill="#8d8f8a"/><path d="M369.9 596.6L375.2 603.3L378.1 601.0L372.9 594.4Z" fill="#878883"/><path d="M371.6 595.4L376.8 602.1L379.7 599.8L374.5 593.1Z" fill="#80817c"/><path d="M373.2 594.1L378.4 600.8L381.3 598.5L376.1 591.9Z" fill="#7a7a75"/><path d="M374.8 592.9L380.0 599.5L382.8 597.2L377.7 590.6Z" fill="#74736e"/><path d="M376.4 591.6L381.6 598.2L384.4 595.9L379.3 589.4Z" fill="#6d6c67"/><path d="M378.0 590.4L383.2 596.9L386.0 594.6L381.0 588.2Z" fill="#706e69"/><path d="M379.7 589.2L384.8 595.6L387.6 593.3L382.6 586.9Z" fill="#7d7b74"/><path d="M381.3 587.9L386.3 594.4L389.2 592.0L384.2 585.7Z" fill="#8a8880"/><path d="M382.9 586.7L387.9 593.1L390.8 590.8L385.8 584.4Z" fill="#97958b"/><path d="M384.5 585.4L389.5 591.8L392.4 589.5L387.4 583.2Z" fill="#a4a297"/><path d="M386.2 584.2L391.1 590.5L394.0 588.2L389.1 582.0Z" fill="#b7b5ab"/><path d="M387.8 582.9L392.7 589.2L395.6 586.9L390.7 580.7Z" fill="#cdcac2"/><path d="M389.4 581.7L394.3 587.9L397.2 585.6L392.3 579.5Z" fill="#e2e0d9"/><path d="M391.0 580.5L395.9 586.7L398.8 584.3L393.9 578.2Z" fill="#c5c3bb"/><path d="M392.6 579.2L397.5 585.4L400.3 583.1L395.6 577.0Z" fill="#a8a59d"/><path d="M394.3 578.0L399.1 584.1L401.9 581.8L397.2 575.8Z" fill="#8c8980"/><path d="M395.9 576.7L400.7 582.8L403.5 580.5L398.8 574.5Z" fill="#86837b"/><path d="M397.5 575.5L402.3 581.5L405.1 579.2L400.4 573.3Z" fill="#7f7d75"/><path d="M399.1 574.3L403.8 580.2L406.7 577.9L402.0 572.0Z" fill="#797770"/><path d="M400.7 573.0L405.4 579.0L408.3 576.6L403.7 570.8Z" fill="#73706a"/><path d="M402.4 571.8L407.0 577.7L409.9 575.4L405.3 569.5Z" fill="#706e68"/><path d="M404.0 570.5L408.6 576.4L411.5 574.1L406.9 568.3Z" fill="#77746e"/><path d="M405.6 569.3L410.2 575.1L413.1 572.8L408.5 567.1Z" fill="#7d7b73"/><path d="M407.2 568.1L411.8 573.8L414.7 571.5L410.2 565.8Z" fill="#848179"/><path d="M408.9 566.8L413.4 572.5L416.2 570.2L411.8 564.6Z" fill="#8b887f"/><path d="M363.6 611.8L369.3 618.7L372.1 616.3L366.5 609.5Z" fill="#5c5a56"/><path d="M365.2 610.5L370.9 617.3L373.7 614.9L368.1 608.2Z" fill="#5e5c57"/><path d="M366.8 609.2L372.4 616.0L375.2 613.6L369.7 606.9Z" fill="#605e59"/><path d="M368.4 607.9L374.0 614.7L376.8 612.3L371.3 605.6Z" fill="#6c6b66"/><path d="M370.0 606.7L375.5 613.4L378.3 611.0L372.9 604.3Z" fill="#787873"/><path d="M371.6 605.4L377.1 612.0L379.9 609.6L374.5 603.1Z" fill="#838580"/><path d="M373.2 604.1L378.7 610.7L381.5 608.3L376.0 601.8Z" fill="#8d8f8a"/><path d="M374.8 602.8L380.2 609.4L383.0 607.0L377.6 600.5Z" fill="#878883"/><path d="M376.4 601.5L381.8 608.0L384.6 605.7L379.2 599.2Z" fill="#80817c"/><path d="M378.0 600.2L383.3 606.7L386.1 604.3L380.8 597.9Z" fill="#7a7a75"/><path d="M379.5 599.0L384.9 605.4L387.7 603.0L382.4 596.6Z" fill="#74736e"/><path d="M381.1 597.7L386.4 604.1L389.2 601.7L384.0 595.4Z" fill="#6d6c67"/><path d="M382.7 596.4L388.0 602.7L390.8 600.4L385.6 594.1Z" fill="#706e69"/><path d="M384.3 595.1L389.5 601.4L392.4 599.0L387.2 592.8Z" fill="#7d7b74"/><path d="M385.9 593.8L391.1 600.1L393.9 597.7L388.8 591.5Z" fill="#8a8880"/><path d="M387.5 592.5L392.7 598.8L395.5 596.4L390.4 590.2Z" fill="#97958b"/><path d="M389.1 591.2L394.2 597.4L397.0 595.0L392.0 588.9Z" fill="#a4a297"/><path d="M390.7 590.0L395.8 596.1L398.6 593.7L393.5 587.7Z" fill="#b7b5ab"/><path d="M392.3 588.7L397.3 594.8L400.1 592.4L395.1 586.4Z" fill="#cdcac2"/><path d="M393.9 587.4L398.9 593.5L401.7 591.1L396.7 585.1Z" fill="#e2e0d9"/><path d="M395.5 586.1L400.4 592.1L403.3 589.7L398.3 583.8Z" fill="#c5c3bb"/><path d="M397.0 584.8L402.0 590.8L404.8 588.4L399.9 582.5Z" fill="#a8a59d"/><path d="M398.6 583.5L403.6 589.5L406.4 587.1L401.5 581.2Z" fill="#8c8980"/><path d="M400.2 582.3L405.1 588.2L407.9 585.8L403.1 580.0Z" fill="#86837b"/><path d="M401.8 581.0L406.7 586.8L409.5 584.4L404.7 578.7Z" fill="#7f7d75"/><path d="M403.4 579.7L408.2 585.5L411.0 583.1L406.3 577.4Z" fill="#797770"/><path d="M405.0 578.4L409.8 584.2L412.6 581.8L407.9 576.1Z" fill="#73706a"/><path d="M406.6 577.1L411.3 582.8L414.1 580.5L409.4 574.8Z" fill="#706e68"/><path d="M408.2 575.8L412.9 581.5L415.7 579.1L411.0 573.5Z" fill="#77746e"/><path d="M409.8 574.6L414.5 580.2L417.3 577.8L412.6 572.2Z" fill="#7d7b73"/><path d="M411.4 573.3L416.0 578.9L418.8 576.5L414.2 571.0Z" fill="#848179"/><path d="M412.9 572.0L417.6 577.5L420.4 575.2L415.8 569.7Z" fill="#8b887f"/><path d="M368.9 618.1L374.7 624.8L377.4 622.3L371.7 615.7Z" fill="#5c5a56"/><path d="M370.4 616.8L376.2 623.4L378.9 621.0L373.2 614.4Z" fill="#5e5c57"/><path d="M372.0 615.5L377.7 622.1L380.5 619.6L374.8 613.1Z" fill="#605e59"/><path d="M373.5 614.1L379.2 620.7L382.0 618.2L376.3 611.8Z" fill="#6c6b66"/><path d="M375.1 612.8L380.8 619.3L383.5 616.9L377.9 610.4Z" fill="#787873"/><path d="M376.6 611.5L382.3 618.0L385.0 615.5L379.4 609.1Z" fill="#838580"/><path d="M378.2 610.2L383.8 616.6L386.5 614.1L381.0 607.8Z" fill="#8d8f8a"/><path d="M379.8 608.8L385.3 615.2L388.1 612.8L382.6 606.5Z" fill="#878883"/><path d="M381.3 607.5L386.8 613.9L389.6 611.4L384.1 605.1Z" fill="#80817c"/><path d="M382.9 606.2L388.4 612.5L391.1 610.0L385.7 603.8Z" fill="#7a7a75"/><path d="M384.4 604.9L389.9 611.1L392.6 608.7L387.2 602.5Z" fill="#74736e"/><path d="M386.0 603.5L391.4 609.8L394.2 607.3L388.8 601.1Z" fill="#6d6c67"/><path d="M387.5 602.2L392.9 608.4L395.7 605.9L390.3 599.8Z" fill="#706e69"/><path d="M389.1 600.9L394.5 607.0L397.2 604.5L391.9 598.5Z" fill="#7d7b74"/><path d="M390.7 599.6L396.0 605.6L398.7 603.2L393.5 597.2Z" fill="#8a877f"/><path d="M392.2 598.2L397.5 604.3L400.2 601.8L395.0 595.8Z" fill="#97948a"/><path d="M393.8 596.9L399.0 602.9L401.8 600.4L396.6 594.5Z" fill="#a3a096"/><path d="M395.3 595.6L400.5 601.5L403.3 599.1L398.1 593.2Z" fill="#b4b1a7"/><path d="M396.9 594.3L402.1 600.2L404.8 597.7L399.7 591.9Z" fill="#c5c3ba"/><path d="M398.4 592.9L403.6 598.8L406.3 596.3L401.2 590.5Z" fill="#d7d5cd"/><path d="M400.0 591.6L405.1 597.4L407.8 595.0L402.8 589.2Z" fill="#bebcb3"/><path d="M401.6 590.3L406.6 596.1L409.4 593.6L404.4 587.9Z" fill="#a4a199"/><path d="M403.1 588.9L408.2 594.7L410.9 592.2L405.9 586.6Z" fill="#8c8980"/><path d="M404.7 587.6L409.7 593.3L412.4 590.9L407.5 585.2Z" fill="#86837b"/><path d="M406.2 586.3L411.2 592.0L413.9 589.5L409.0 583.9Z" fill="#7f7d75"/><path d="M407.8 585.0L412.7 590.6L415.5 588.1L410.6 582.6Z" fill="#797770"/><path d="M409.3 583.6L414.2 589.2L417.0 586.8L412.1 581.3Z" fill="#73706a"/><path d="M410.9 582.3L415.8 587.8L418.5 585.4L413.7 579.9Z" fill="#706e68"/><path d="M412.4 581.0L417.3 586.5L420.0 584.0L415.3 578.6Z" fill="#77746e"/><path d="M414.0 579.7L418.8 585.1L421.5 582.6L416.8 577.3Z" fill="#7d7b73"/><path d="M415.6 578.3L420.3 583.7L423.1 581.3L418.4 575.9Z" fill="#848179"/><path d="M417.1 577.0L421.8 582.4L424.6 579.9L419.9 574.6Z" fill="#8b887f"/><path d="M374.2 624.3L380.2 630.8L382.8 628.2L376.9 621.8Z" fill="#5c5a56"/><path d="M375.7 622.9L381.6 629.4L384.3 626.8L378.5 620.5Z" fill="#5e5c57"/><path d="M377.2 621.6L383.1 627.9L385.8 625.4L380.0 619.1Z" fill="#605e59"/><path d="M378.8 620.2L384.6 626.5L387.3 624.0L381.5 617.7Z" fill="#6c6b66"/><path d="M380.3 618.8L386.1 625.1L388.8 622.6L383.0 616.3Z" fill="#787873"/><path d="M381.8 617.4L387.6 623.7L390.3 621.2L384.6 615.0Z" fill="#838580"/><path d="M383.3 616.1L389.1 622.3L391.7 619.8L386.1 613.6Z" fill="#8d8f8a"/><path d="M384.9 614.7L390.6 620.9L393.2 618.4L387.6 612.2Z" fill="#878883"/><path d="M386.4 613.3L392.0 619.5L394.7 616.9L389.1 610.9Z" fill="#80817c"/><path d="M387.9 612.0L393.5 618.1L396.2 615.5L390.6 609.5Z" fill="#7a7a75"/><path d="M389.4 610.6L395.0 616.7L397.7 614.1L392.2 608.1Z" fill="#74736e"/><path d="M390.9 609.2L396.5 615.2L399.2 612.7L393.7 606.8Z" fill="#6d6c67"/><path d="M392.5 607.9L398.0 613.8L400.7 611.3L395.2 605.4Z" fill="#706e69"/><path d="M394.0 606.5L399.5 612.4L402.1 609.9L396.7 604.0Z" fill="#7d7a74"/><path d="M395.5 605.1L400.9 611.0L403.6 608.5L398.2 602.7Z" fill="#89877f"/><path d="M397.0 603.8L402.4 609.6L405.1 607.1L399.8 601.3Z" fill="#96938a"/><path d="M398.6 602.4L403.9 608.2L406.6 605.6L401.3 599.9Z" fill="#a29f95"/><path d="M400.1 601.0L405.4 606.8L408.1 604.2L402.8 598.6Z" fill="#b0ada3"/><path d="M401.6 599.6L406.9 605.4L409.6 602.8L404.3 597.2Z" fill="#bebbb2"/><path d="M403.1 598.3L408.4 604.0L411.0 601.4L405.9 595.8Z" fill="#cccac1"/><path d="M404.6 596.9L409.9 602.5L412.5 600.0L407.4 594.4Z" fill="#b7b4ab"/><path d="M406.2 595.5L411.3 601.1L414.0 598.6L408.9 593.1Z" fill="#a19e95"/><path d="M407.7 594.2L412.8 599.7L415.5 597.2L410.4 591.7Z" fill="#8c8980"/><path d="M409.2 592.8L414.3 598.3L417.0 595.8L411.9 590.3Z" fill="#86837b"/><path d="M410.7 591.4L415.8 596.9L418.5 594.4L413.5 589.0Z" fill="#7f7d75"/><path d="M412.2 590.1L417.3 595.5L420.0 592.9L415.0 587.6Z" fill="#797770"/><path d="M413.8 588.7L418.8 594.1L421.4 591.5L416.5 586.2Z" fill="#73706a"/><path d="M415.3 587.3L420.2 592.7L422.9 590.1L418.0 584.9Z" fill="#706e68"/><path d="M416.8 586.0L421.7 591.3L424.4 588.7L419.6 583.5Z" fill="#77746e"/><path d="M418.3 584.6L423.2 589.8L425.9 587.3L421.1 582.1Z" fill="#7d7b73"/><path d="M419.9 583.2L424.7 588.4L427.4 585.9L422.6 580.8Z" fill="#848179"/><path d="M421.4 581.9L426.2 587.0L428.9 584.5L424.1 579.4Z" fill="#8b887f"/><path d="M379.7 630.3L385.8 636.5L388.4 633.9L382.4 627.7Z" fill="#5c5a56"/><path d="M381.2 628.9L387.2 635.1L389.8 632.5L383.8 626.3Z" fill="#5e5c57"/><path d="M382.7 627.4L388.7 633.6L391.3 631.0L385.3 624.9Z" fill="#605e59"/><path d="M384.1 626.0L390.1 632.2L392.7 629.6L386.8 623.5Z" fill="#6c6b66"/><path d="M385.6 624.6L391.6 630.7L394.2 628.1L388.3 622.1Z" fill="#787873"/><path d="M387.1 623.2L393.0 629.3L395.6 626.7L389.8 620.7Z" fill="#838580"/><path d="M388.6 621.8L394.5 627.8L397.1 625.2L391.3 619.3Z" fill="#8d8f8a"/><path d="M390.1 620.4L395.9 626.4L398.5 623.7L392.7 617.8Z" fill="#878883"/><path d="M391.6 619.0L397.3 624.9L399.9 622.3L394.2 616.4Z" fill="#80817c"/><path d="M393.0 617.6L398.8 623.5L401.4 620.8L395.7 615.0Z" fill="#7a7a75"/><path d="M394.5 616.2L400.2 622.0L402.8 619.4L397.2 613.6Z" fill="#74736e"/><path d="M396.0 614.7L401.7 620.5L404.3 617.9L398.7 612.2Z" fill="#6d6c67"/><path d="M397.5 613.3L403.1 619.1L405.7 616.5L400.2 610.8Z" fill="#706e68"/><path d="M399.0 611.9L404.6 617.6L407.2 615.0L401.7 609.4Z" fill="#7c7a73"/><path d="M400.5 610.5L406.0 616.2L408.6 613.6L403.1 608.0Z" fill="#89867e"/><path d="M402.0 609.1L407.5 614.7L410.1 612.1L404.6 606.6Z" fill="#959289"/><path d="M403.4 607.7L408.9 613.3L411.5 610.7L406.1 605.1Z" fill="#a19e93"/><path d="M404.9 606.3L410.4 611.8L413.0 609.2L407.6 603.7Z" fill="#aca99f"/><path d="M406.4 604.9L411.8 610.4L414.4 607.8L409.1 602.3Z" fill="#b7b4aa"/><path d="M407.9 603.4L413.2 608.9L415.8 606.3L410.6 600.9Z" fill="#c1beb5"/><path d="M409.4 602.0L414.7 607.5L417.3 604.8L412.0 599.5Z" fill="#b0ada4"/><path d="M410.9 600.6L416.1 606.0L418.7 603.4L413.5 598.1Z" fill="#9d9a91"/><path d="M412.3 599.2L417.6 604.6L420.2 601.9L415.0 596.7Z" fill="#8c8980"/><path d="M413.8 597.8L419.0 603.1L421.6 600.5L416.5 595.3Z" fill="#86837b"/><path d="M415.3 596.4L420.5 601.6L423.1 599.0L418.0 593.9Z" fill="#7f7d75"/><path d="M416.8 595.0L421.9 600.2L424.5 597.6L419.5 592.4Z" fill="#797770"/><path d="M418.3 593.6L423.4 598.7L426.0 596.1L421.0 591.0Z" fill="#73706a"/><path d="M419.8 592.2L424.8 597.3L427.4 594.7L422.4 589.6Z" fill="#706e68"/><path d="M421.3 590.7L426.3 595.8L428.9 593.2L423.9 588.2Z" fill="#77746e"/><path d="M422.7 589.3L427.7 594.4L430.3 591.8L425.4 586.8Z" fill="#7d7b73"/><path d="M424.2 587.9L429.1 592.9L431.7 590.3L426.9 585.4Z" fill="#848179"/><path d="M425.7 586.5L430.6 591.5L433.2 588.9L428.4 584.0Z" fill="#8b887f"/><path d="M385.3 636.0L391.5 642.1L394.0 639.4L387.9 633.4Z" fill="#5c5a56"/><path d="M386.7 634.6L392.9 640.6L395.4 637.9L389.3 632.0Z" fill="#5e5c57"/><path d="M388.2 633.1L394.3 639.1L396.8 636.4L390.8 630.5Z" fill="#605e59"/><path d="M389.6 631.7L395.7 637.6L398.2 634.9L392.2 629.1Z" fill="#6c6b66"/><path d="M391.1 630.2L397.1 636.1L399.7 633.4L393.7 627.6Z" fill="#787873"/><path d="M392.5 628.8L398.5 634.6L401.1 631.9L395.1 626.2Z" fill="#838580"/><path d="M394.0 627.3L399.9 633.1L402.5 630.4L396.6 624.7Z" fill="#8d8f8a"/><path d="M395.4 625.9L401.3 631.6L403.9 628.9L398.0 623.3Z" fill="#878883"/><path d="M396.8 624.4L402.7 630.1L405.3 627.4L399.4 621.8Z" fill="#80817c"/><path d="M398.3 623.0L404.1 628.6L406.7 625.9L400.9 620.3Z" fill="#7a7a75"/><path d="M399.7 621.5L405.6 627.1L408.1 624.4L402.3 618.9Z" fill="#74736e"/><path d="M401.2 620.1L407.0 625.6L409.5 622.9L403.8 617.4Z" fill="#6d6c67"/><path d="M402.6 618.6L408.4 624.1L410.9 621.5L405.2 616.0Z" fill="#706e68"/><path d="M404.1 617.1L409.8 622.7L412.3 620.0L406.7 614.5Z" fill="#7c7a73"/><path d="M405.5 615.7L411.2 621.2L413.7 618.5L408.1 613.1Z" fill="#88857d"/><path d="M407.0 614.2L412.6 619.7L415.1 617.0L409.6 611.6Z" fill="#949188"/><path d="M408.4 612.8L414.0 618.2L416.5 615.5L411.0 610.2Z" fill="#a09d92"/><path d="M409.9 611.3L415.4 616.7L417.9 614.0L412.5 608.7Z" fill="#a8a59b"/><path d="M411.3 609.9L416.8 615.2L419.3 612.5L413.9 607.3Z" fill="#afaca2"/><path d="M412.7 608.4L418.2 613.7L420.7 611.0L415.3 605.8Z" fill="#b6b3a9"/><path d="M414.2 607.0L419.6 612.2L422.1 609.5L416.8 604.4Z" fill="#a8a59c"/><path d="M415.6 605.5L421.0 610.7L423.5 608.0L418.2 602.9Z" fill="#9a978e"/><path d="M417.1 604.1L422.4 609.2L424.9 606.5L419.7 601.4Z" fill="#8c8980"/><path d="M418.5 602.6L423.8 607.7L426.3 605.0L421.1 600.0Z" fill="#86837b"/><path d="M420.0 601.2L425.2 606.2L427.7 603.5L422.6 598.5Z" fill="#7f7d75"/><path d="M421.4 599.7L426.6 604.7L429.1 602.0L424.0 597.1Z" fill="#797770"/><path d="M422.9 598.2L428.0 603.2L430.5 600.5L425.5 595.6Z" fill="#73706a"/><path d="M424.3 596.8L429.4 601.7L431.9 599.0L426.9 594.2Z" fill="#706e68"/><path d="M425.8 595.3L430.8 600.2L433.3 597.5L428.4 592.7Z" fill="#77746e"/><path d="M427.2 593.9L432.2 598.7L434.8 596.0L429.8 591.3Z" fill="#7d7b73"/><path d="M428.6 592.4L433.6 597.2L436.2 594.5L431.2 589.8Z" fill="#848179"/><path d="M430.1 591.0L435.0 595.7L437.6 593.0L432.7 588.4Z" fill="#8b887f"/><path d="M391.0 641.6L397.4 647.4L399.8 644.7L393.5 638.9Z" fill="#5b5955"/><path d="M392.4 640.1L398.7 645.9L401.2 643.1L394.9 637.4Z" fill="#5d5b56"/><path d="M393.8 638.6L400.1 644.4L402.5 641.6L396.3 635.9Z" fill="#605e59"/><path d="M395.2 637.1L401.4 642.8L403.9 640.1L397.7 634.4Z" fill="#6a6964"/><path d="M396.6 635.6L402.8 641.3L405.2 638.5L399.1 632.9Z" fill="#757570"/><path d="M398.0 634.1L404.2 639.8L406.6 637.0L400.5 631.4Z" fill="#80817c"/><path d="M399.4 632.6L405.5 638.2L408.0 635.4L402.0 630.0Z" fill="#898b86"/><path d="M400.8 631.1L406.9 636.7L409.3 633.9L403.4 628.5Z" fill="#858681"/><path d="M402.2 629.7L408.2 635.1L410.7 632.4L404.8 627.0Z" fill="#80817c"/><path d="M403.6 628.2L409.6 633.6L412.0 630.8L406.2 625.5Z" fill="#7b7c77"/><path d="M405.0 626.7L411.0 632.1L413.4 629.3L407.6 624.0Z" fill="#767570"/><path d="M406.4 625.2L412.3 630.5L414.8 627.8L409.0 622.5Z" fill="#706e69"/><path d="M407.8 623.7L413.7 629.0L416.1 626.2L410.4 621.0Z" fill="#72706a"/><path d="M409.3 622.2L415.0 627.4L417.5 624.7L411.8 619.5Z" fill="#7c7972"/><path d="M410.7 620.7L416.4 625.9L418.8 623.1L413.2 618.0Z" fill="#86837b"/><path d="M412.1 619.2L417.8 624.4L420.2 621.6L414.6 616.5Z" fill="#918e85"/><path d="M413.5 617.7L419.1 622.8L421.6 620.1L416.0 615.0Z" fill="#9c998e"/><path d="M414.9 616.2L420.5 621.3L422.9 618.5L417.4 613.5Z" fill="#a3a096"/><path d="M416.3 614.7L421.8 619.8L424.3 617.0L418.8 612.0Z" fill="#a9a69c"/><path d="M417.7 613.2L423.2 618.2L425.6 615.5L420.2 610.5Z" fill="#afaca2"/><path d="M419.1 611.7L424.6 616.7L427.0 613.9L421.6 609.0Z" fill="#a4a198"/><path d="M420.5 610.2L425.9 615.1L428.4 612.4L423.0 607.5Z" fill="#98958c"/><path d="M421.9 608.7L427.3 613.6L429.7 610.8L424.4 606.0Z" fill="#8d8a81"/><path d="M423.3 607.2L428.6 612.1L431.1 609.3L425.8 604.5Z" fill="#86847b"/><path d="M424.7 605.7L430.0 610.5L432.4 607.8L427.2 603.0Z" fill="#807d76"/><path d="M426.1 604.2L431.4 609.0L433.8 606.2L428.6 601.5Z" fill="#7a7770"/><path d="M427.5 602.7L432.7 607.5L435.2 604.7L430.0 600.0Z" fill="#74726b"/><path d="M428.9 601.2L434.1 605.9L436.5 603.1L431.4 598.5Z" fill="#73706a"/><path d="M430.3 599.7L435.4 604.4L437.9 601.6L432.8 597.0Z" fill="#79766f"/><path d="M431.7 598.2L436.8 602.8L439.2 600.1L434.2 595.5Z" fill="#7f7c75"/><path d="M433.1 596.7L438.2 601.3L440.6 598.5L435.6 594.0Z" fill="#85827a"/><path d="M434.5 595.2L439.5 599.8L442.0 597.0L437.1 592.6Z" fill="#8b887f"/><path d="M396.8 647.0L403.3 652.6L405.7 649.7L399.3 644.2Z" fill="#5a5853"/><path d="M398.2 645.4L404.6 651.0L407.0 648.1L400.6 642.7Z" fill="#5c5a55"/><path d="M399.5 643.9L405.9 649.4L408.3 646.6L402.0 641.1Z" fill="#5f5d58"/><path d="M400.9 642.4L407.2 647.8L409.6 645.0L403.4 639.6Z" fill="#686762"/><path d="M402.3 640.8L408.6 646.2L410.9 643.4L404.7 638.1Z" fill="#71706b"/><path d="M403.6 639.3L409.9 644.7L412.2 641.8L406.1 636.5Z" fill="#7b7b76"/><path d="M405.0 637.7L411.2 643.1L413.5 640.2L407.4 635.0Z" fill="#848580"/><path d="M406.3 636.2L412.5 641.5L414.9 638.7L408.8 633.4Z" fill="#82827d"/><path d="M407.7 634.7L413.8 639.9L416.2 637.1L410.2 631.9Z" fill="#7f807b"/><path d="M409.1 633.1L415.1 638.3L417.5 635.5L411.5 630.4Z" fill="#7d7e79"/><path d="M410.4 631.6L416.4 636.8L418.8 633.9L412.9 628.8Z" fill="#787873"/><path d="M411.8 630.1L417.7 635.2L420.1 632.3L414.2 627.3Z" fill="#73726d"/><path d="M413.1 628.5L419.1 633.6L421.4 630.8L415.6 625.8Z" fill="#74736c"/><path d="M414.5 627.0L420.4 632.0L422.7 629.2L417.0 624.2Z" fill="#7b7972"/><path d="M415.9 625.4L421.7 630.4L424.1 627.6L418.3 622.7Z" fill="#828078"/><path d="M417.2 623.9L423.0 628.9L425.4 626.0L419.7 621.1Z" fill="#8c8a81"/><path d="M418.6 622.4L424.3 627.3L426.7 624.4L421.0 619.6Z" fill="#969389"/><path d="M419.9 620.8L425.6 625.7L428.0 622.9L422.4 618.1Z" fill="#9d9a90"/><path d="M421.3 619.3L426.9 624.1L429.3 621.3L423.8 616.5Z" fill="#a3a096"/><path d="M422.7 617.8L428.3 622.5L430.6 619.7L425.1 615.0Z" fill="#a8a59c"/><path d="M424.0 616.2L429.6 621.0L431.9 618.1L426.5 613.4Z" fill="#a29f95"/><path d="M425.4 614.7L430.9 619.4L433.2 616.5L427.8 611.9Z" fill="#98958c"/><path d="M426.8 613.1L432.2 617.8L434.6 615.0L429.2 610.4Z" fill="#8e8b82"/><path d="M428.1 611.6L433.5 616.2L435.9 613.4L430.6 608.8Z" fill="#87847c"/><path d="M429.5 610.1L434.8 614.6L437.2 611.8L431.9 607.3Z" fill="#817e76"/><path d="M430.8 608.5L436.1 613.1L438.5 610.2L433.3 605.8Z" fill="#7b7871"/><path d="M432.2 607.0L437.4 611.5L439.8 608.6L434.6 604.2Z" fill="#77756d"/><path d="M433.6 605.5L438.8 609.9L441.1 607.1L436.0 602.7Z" fill="#76746d"/><path d="M434.9 603.9L440.1 608.3L442.4 605.5L437.4 601.1Z" fill="#7b7971"/><path d="M436.3 602.4L441.4 606.7L443.8 603.9L438.7 599.6Z" fill="#817e76"/><path d="M437.6 600.8L442.7 605.2L445.1 602.3L440.1 598.1Z" fill="#86837b"/><path d="M439.0 599.3L444.0 603.6L446.4 600.7L441.4 596.5Z" fill="#8b8880"/><path d="M402.8 652.1L409.3 657.4L411.6 654.5L405.1 649.3Z" fill="#585652"/><path d="M404.1 650.5L410.6 655.8L412.9 652.9L406.4 647.7Z" fill="#5b5954"/><path d="M405.4 649.0L411.9 654.2L414.1 651.3L407.8 646.1Z" fill="#5e5c57"/><path d="M406.7 647.4L413.1 652.6L415.4 649.7L409.1 644.5Z" fill="#65645f"/><path d="M408.0 645.8L414.4 651.0L416.7 648.0L410.4 642.9Z" fill="#6d6c67"/><path d="M409.3 644.2L415.7 649.3L417.9 646.4L411.7 641.4Z" fill="#767570"/><path d="M410.6 642.6L416.9 647.7L419.2 644.8L413.0 639.8Z" fill="#7e7f7a"/><path d="M412.0 641.1L418.2 646.1L420.5 643.2L414.3 638.2Z" fill="#7e7f7a"/><path d="M413.3 639.5L419.5 644.5L421.7 641.6L415.6 636.6Z" fill="#7f807b"/><path d="M414.6 637.9L420.7 642.8L423.0 639.9L416.9 635.0Z" fill="#7f807b"/><path d="M415.9 636.3L422.0 641.2L424.3 638.3L418.3 633.5Z" fill="#7b7b76"/><path d="M417.2 634.7L423.2 639.6L425.5 636.7L419.6 631.9Z" fill="#777670"/><path d="M418.5 633.2L424.5 638.0L426.8 635.1L420.9 630.3Z" fill="#76756f"/><path d="M419.8 631.6L425.8 636.4L428.0 633.4L422.2 628.7Z" fill="#7b7972"/><path d="M421.1 630.0L427.0 634.7L429.3 631.8L423.5 627.1Z" fill="#7f7d75"/><path d="M422.5 628.4L428.3 633.1L430.6 630.2L424.8 625.6Z" fill="#88857d"/><path d="M423.8 626.8L429.6 631.5L431.8 628.6L426.1 624.0Z" fill="#908e84"/><path d="M425.1 625.3L430.8 629.9L433.1 627.0L427.5 622.4Z" fill="#97948b"/><path d="M426.4 623.7L432.1 628.3L434.4 625.3L428.8 620.8Z" fill="#9d9a90"/><path d="M427.7 622.1L433.4 626.6L435.6 623.7L430.1 619.2Z" fill="#a29f96"/><path d="M429.0 620.5L434.6 625.0L436.9 622.1L431.4 617.7Z" fill="#9f9c93"/><path d="M430.3 618.9L435.9 623.4L438.2 620.5L432.7 616.1Z" fill="#97948b"/><path d="M431.7 617.4L437.2 621.8L439.4 618.8L434.0 614.5Z" fill="#8e8b82"/><path d="M433.0 615.8L438.4 620.1L440.7 617.2L435.3 612.9Z" fill="#88857d"/><path d="M434.3 614.2L439.7 618.5L442.0 615.6L436.6 611.3Z" fill="#827f77"/><path d="M435.6 612.6L440.9 616.9L443.2 614.0L438.0 609.8Z" fill="#7c7971"/><path d="M436.9 611.0L442.2 615.3L444.5 612.4L439.3 608.2Z" fill="#7a776f"/><path d="M438.2 609.5L443.5 613.7L445.7 610.7L440.6 606.6Z" fill="#7a7770"/><path d="M439.5 607.9L444.7 612.0L447.0 609.1L441.9 605.0Z" fill="#7e7c74"/><path d="M440.9 606.3L446.0 610.4L448.3 607.5L443.2 603.4Z" fill="#838078"/><path d="M442.2 604.7L447.3 608.8L449.5 605.9L444.5 601.9Z" fill="#87847c"/><path d="M443.5 603.1L448.5 607.2L450.8 604.2L445.8 600.3Z" fill="#8c8980"/><path d="M408.8 657.0L415.5 662.1L417.7 659.1L411.1 654.1Z" fill="#575550"/><path d="M410.1 655.4L416.7 660.4L418.9 657.4L412.3 652.5Z" fill="#5a5853"/><path d="M411.3 653.8L417.9 658.8L420.1 655.8L413.6 650.9Z" fill="#5d5b56"/><path d="M412.6 652.2L419.1 657.1L421.3 654.1L414.9 649.2Z" fill="#63615c"/><path d="M413.8 650.5L420.3 655.4L422.5 652.4L416.1 647.6Z" fill="#696863"/><path d="M415.1 648.9L421.5 653.8L423.7 650.8L417.4 646.0Z" fill="#70706b"/><path d="M416.4 647.3L422.7 652.1L424.9 649.1L418.6 644.4Z" fill="#787873"/><path d="M417.6 645.7L424.0 650.4L426.1 647.4L419.9 642.7Z" fill="#7b7c77"/><path d="M418.9 644.0L425.2 648.8L427.3 645.8L421.2 641.1Z" fill="#7e7f7a"/><path d="M420.2 642.4L426.4 647.1L428.6 644.1L422.4 639.5Z" fill="#81837e"/><path d="M421.4 640.8L427.6 645.5L429.8 642.5L423.7 637.9Z" fill="#7e7f79"/><path d="M422.7 639.2L428.8 643.8L431.0 640.8L425.0 636.3Z" fill="#7a7a74"/><path d="M424.0 637.6L430.0 642.1L432.2 639.1L426.2 634.6Z" fill="#797872"/><path d="M425.2 635.9L431.2 640.5L433.4 637.5L427.5 633.0Z" fill="#7a7971"/><path d="M426.5 634.3L432.4 638.8L434.6 635.8L428.8 631.4Z" fill="#7c7a72"/><path d="M427.8 632.7L433.6 637.1L435.8 634.1L430.0 629.8Z" fill="#848179"/><path d="M429.0 631.1L434.9 635.5L437.0 632.5L431.3 628.1Z" fill="#8b887f"/><path d="M430.3 629.4L436.1 633.8L438.3 630.8L432.6 626.5Z" fill="#918e85"/><path d="M431.5 627.8L437.3 632.1L439.5 629.2L433.8 624.9Z" fill="#97948b"/><path d="M432.8 626.2L438.5 630.5L440.7 627.5L435.1 623.3Z" fill="#9c9990"/><path d="M434.1 624.6L439.7 628.8L441.9 625.8L436.3 621.7Z" fill="#9c9990"/><path d="M435.3 623.0L440.9 627.2L443.1 624.2L437.6 620.0Z" fill="#97948b"/><path d="M436.6 621.3L442.1 625.5L444.3 622.5L438.9 618.4Z" fill="#8f8c83"/><path d="M437.9 619.7L443.3 623.8L445.5 620.8L440.1 616.8Z" fill="#89867d"/><path d="M439.1 618.1L444.6 622.2L446.7 619.2L441.4 615.2Z" fill="#838077"/><path d="M440.4 616.5L445.8 620.5L447.9 617.5L442.7 613.5Z" fill="#7d7a72"/><path d="M441.7 614.8L447.0 618.8L449.2 615.8L443.9 611.9Z" fill="#7c7a71"/><path d="M442.9 613.2L448.2 617.2L450.4 614.2L445.2 610.3Z" fill="#7d7b72"/><path d="M444.2 611.6L449.4 615.5L451.6 612.5L446.5 608.7Z" fill="#817e76"/><path d="M445.4 610.0L450.6 613.8L452.8 610.9L447.7 607.1Z" fill="#858279"/><path d="M446.7 608.4L451.8 612.2L454.0 609.2L449.0 605.4Z" fill="#88867d"/><path d="M448.0 606.7L453.0 610.5L455.2 607.5L450.2 603.8Z" fill="#8c8980"/><path d="M414.9 661.7L421.7 666.5L423.8 663.4L417.1 658.7Z" fill="#55534f"/><path d="M416.1 660.0L422.9 664.8L424.9 661.7L418.3 657.0Z" fill="#595752"/><path d="M417.3 658.3L424.0 663.1L426.1 660.0L419.5 655.4Z" fill="#5c5a55"/><path d="M418.5 656.7L425.2 661.4L427.2 658.3L420.7 653.7Z" fill="#615f5a"/><path d="M419.8 655.0L426.3 659.7L428.4 656.6L421.9 652.0Z" fill="#65635e"/><path d="M421.0 653.4L427.5 658.0L429.6 654.9L423.1 650.4Z" fill="#6b6a65"/><path d="M422.2 651.7L428.6 656.3L430.7 653.2L424.4 648.7Z" fill="#73726d"/><path d="M423.4 650.0L429.8 654.5L431.9 651.5L425.6 647.0Z" fill="#787873"/><path d="M424.6 648.4L430.9 652.8L433.0 649.8L426.8 645.4Z" fill="#7e7f7a"/><path d="M425.8 646.7L432.1 651.1L434.2 648.1L428.0 643.7Z" fill="#838580"/><path d="M427.0 645.0L433.3 649.4L435.3 646.4L429.2 642.0Z" fill="#81827c"/><path d="M428.2 643.4L434.4 647.7L436.5 644.7L430.4 640.4Z" fill="#7e7e78"/><path d="M429.4 641.7L435.6 646.0L437.6 643.0L431.6 638.7Z" fill="#7b7b74"/><path d="M430.7 640.1L436.7 644.3L438.8 641.2L432.8 637.1Z" fill="#7a7871"/><path d="M431.9 638.4L437.9 642.6L440.0 639.5L434.1 635.4Z" fill="#79776f"/><path d="M433.1 636.7L439.0 640.9L441.1 637.8L435.3 633.7Z" fill="#7f7d75"/><path d="M434.3 635.1L440.2 639.2L442.3 636.1L436.5 632.1Z" fill="#85837a"/><path d="M435.5 633.4L441.3 637.5L443.4 634.4L437.7 630.4Z" fill="#8b8880"/><path d="M436.7 631.7L442.5 635.8L444.6 632.7L438.9 628.7Z" fill="#908e85"/><path d="M437.9 630.1L443.7 634.1L445.7 631.0L440.1 627.1Z" fill="#96938a"/><path d="M439.1 628.4L444.8 632.4L446.9 629.3L441.3 625.4Z" fill="#9a978e"/><path d="M440.4 626.7L446.0 630.7L448.0 627.6L442.5 623.7Z" fill="#96938a"/><path d="M441.6 625.1L447.1 629.0L449.2 625.9L443.7 622.1Z" fill="#908d84"/><path d="M442.8 623.4L448.3 627.3L450.4 624.2L445.0 620.4Z" fill="#8a877e"/><path d="M444.0 621.8L449.4 625.6L451.5 622.5L446.2 618.8Z" fill="#848178"/><path d="M445.2 620.1L450.6 623.9L452.7 620.8L447.4 617.1Z" fill="#7e7b72"/><path d="M446.4 618.4L451.7 622.2L453.8 619.1L448.6 615.4Z" fill="#7f7c73"/><path d="M447.6 616.8L452.9 620.4L455.0 617.4L449.8 613.8Z" fill="#817e75"/><path d="M448.8 615.1L454.0 618.7L456.1 615.7L451.0 612.1Z" fill="#848178"/><path d="M450.0 613.4L455.2 617.0L457.3 614.0L452.2 610.4Z" fill="#87847b"/><path d="M451.3 611.8L456.4 615.3L458.4 612.3L453.4 608.8Z" fill="#8a877e"/><path d="M452.5 610.1L457.5 613.6L459.6 610.6L454.6 607.1Z" fill="#8d8a81"/><path d="M421.1 666.1L428.0 670.6L430.0 667.5L423.2 663.0Z" fill="#53514c"/><path d="M422.3 664.4L429.1 668.9L431.1 665.7L424.4 661.3Z" fill="#575550"/><path d="M423.4 662.7L430.2 667.1L432.2 664.0L425.5 659.6Z" fill="#5a5853"/><path d="M424.6 661.0L431.3 665.4L433.3 662.2L426.7 657.9Z" fill="#5e5c57"/><path d="M425.7 659.3L432.4 663.6L434.4 660.5L427.8 656.2Z" fill="#615f5a"/><path d="M426.9 657.6L433.5 661.9L435.5 658.7L429.0 654.5Z" fill="#66645f"/><path d="M428.1 655.9L434.6 660.1L436.6 657.0L430.1 652.8Z" fill="#6c6b66"/><path d="M429.2 654.2L435.7 658.4L437.6 655.2L431.3 651.1Z" fill="#72726d"/><path d="M430.4 652.4L436.8 656.6L438.7 653.5L432.4 649.4Z" fill="#7a7a75"/><path d="M431.5 650.7L437.9 654.9L439.8 651.8L433.6 647.7Z" fill="#81827d"/><path d="M432.7 649.0L439.0 653.2L440.9 650.0L434.8 646.0Z" fill="#82837d"/><path d="M433.8 647.3L440.1 651.4L442.0 648.3L435.9 644.3Z" fill="#81817b"/><path d="M435.0 645.6L441.2 649.7L443.1 646.5L437.1 642.6Z" fill="#7f8079"/><path d="M436.1 643.9L442.2 647.9L444.2 644.8L438.2 640.9Z" fill="#7e7e77"/><path d="M437.3 642.2L443.3 646.2L445.3 643.0L439.4 639.1Z" fill="#7b7a72"/><path d="M438.5 640.5L444.4 644.4L446.4 641.3L440.5 637.4Z" fill="#7e7c74"/><path d="M439.6 638.8L445.5 642.7L447.5 639.5L441.7 635.7Z" fill="#807e75"/><path d="M440.8 637.1L446.6 640.9L448.6 637.8L442.8 634.0Z" fill="#848279"/><path d="M441.9 635.4L447.7 639.2L449.7 636.0L444.0 632.3Z" fill="#8a877e"/><path d="M443.1 633.7L448.8 637.4L450.8 634.3L445.2 630.6Z" fill="#8f8c84"/><path d="M444.2 632.0L449.9 635.7L451.9 632.6L446.3 628.9Z" fill="#949189"/><path d="M445.4 630.3L451.0 633.9L453.0 630.8L447.5 627.2Z" fill="#949188"/><path d="M446.5 628.6L452.1 632.2L454.1 629.1L448.6 625.5Z" fill="#908d84"/><path d="M447.7 626.9L453.2 630.5L455.2 627.3L449.8 623.8Z" fill="#8d8a81"/><path d="M448.8 625.2L454.3 628.7L456.3 625.6L450.9 622.1Z" fill="#8a877e"/><path d="M450.0 623.5L455.4 627.0L457.4 623.8L452.1 620.4Z" fill="#858279"/><path d="M451.2 621.8L456.5 625.2L458.5 622.1L453.2 618.7Z" fill="#858279"/><path d="M452.3 620.1L457.6 623.5L459.6 620.3L454.4 617.0Z" fill="#858279"/><path d="M453.5 618.4L458.7 621.7L460.6 618.6L455.5 615.3Z" fill="#86837a"/><path d="M454.6 616.6L459.8 620.0L461.7 616.8L456.7 613.6Z" fill="#86837a"/><path d="M455.8 614.9L460.9 618.2L462.8 615.1L457.9 611.9Z" fill="#85827a"/><path d="M456.9 613.2L462.0 616.5L463.9 613.3L459.0 610.2Z" fill="#8c8981"/><path d="M427.4 670.2L434.4 674.5L436.2 671.3L429.4 667.1Z" fill="#514f4a"/><path d="M428.5 668.5L435.4 672.7L437.3 669.5L430.5 665.3Z" fill="#54524d"/><path d="M429.6 666.7L436.5 670.9L438.3 667.7L431.6 663.6Z" fill="#575550"/><path d="M430.7 665.0L437.5 669.1L439.3 665.9L432.7 661.9Z" fill="#5a5853"/><path d="M431.8 663.3L438.5 667.3L440.4 664.1L433.8 660.1Z" fill="#5d5b56"/><path d="M432.9 661.5L439.5 665.5L441.4 662.3L434.9 658.4Z" fill="#605e59"/><path d="M434.0 659.8L440.6 663.8L442.4 660.5L436.0 656.6Z" fill="#64625d"/><path d="M435.1 658.0L441.6 662.0L443.5 658.7L437.1 654.9Z" fill="#696863"/><path d="M436.2 656.3L442.6 660.2L444.5 657.0L438.1 653.1Z" fill="#72716c"/><path d="M437.3 654.5L443.7 658.4L445.5 655.2L439.2 651.4Z" fill="#7a7b76"/><path d="M438.4 652.8L444.7 656.6L446.6 653.4L440.3 649.6Z" fill="#80817c"/><path d="M439.5 651.0L445.7 654.8L447.6 651.6L441.4 647.9Z" fill="#83847f"/><path d="M440.6 649.3L446.8 653.0L448.6 649.8L442.5 646.1Z" fill="#858681"/><path d="M441.7 647.5L447.8 651.2L449.7 648.0L443.6 644.4Z" fill="#888983"/><path d="M442.7 645.8L448.8 649.5L450.7 646.2L444.7 642.7Z" fill="#83837c"/><path d="M443.8 644.0L449.9 647.7L451.7 644.5L445.8 640.9Z" fill="#7f7d76"/><path d="M444.9 642.3L450.9 645.9L452.7 642.7L446.9 639.2Z" fill="#7b7870"/><path d="M446.0 640.6L451.9 644.1L453.8 640.9L448.0 637.4Z" fill="#7d7a72"/><path d="M447.1 638.8L453.0 642.3L454.8 639.1L449.1 635.7Z" fill="#827f77"/><path d="M448.2 637.1L454.0 640.5L455.8 637.3L450.2 633.9Z" fill="#87847c"/><path d="M449.3 635.3L455.0 638.7L456.9 635.5L451.3 632.2Z" fill="#8c8981"/><path d="M450.4 633.6L456.0 637.0L457.9 633.7L452.4 630.4Z" fill="#8f8c84"/><path d="M451.5 631.8L457.1 635.2L458.9 632.0L453.5 628.7Z" fill="#918e85"/><path d="M452.6 630.1L458.1 633.4L460.0 630.2L454.6 626.9Z" fill="#928f86"/><path d="M453.7 628.3L459.1 631.6L461.0 628.4L455.7 625.2Z" fill="#949188"/><path d="M454.8 626.6L460.2 629.8L462.0 626.6L456.8 623.4Z" fill="#918e85"/><path d="M455.9 624.8L461.2 628.0L463.1 624.8L457.9 621.7Z" fill="#8d8a81"/><path d="M457.0 623.1L462.2 626.2L464.1 623.0L459.0 620.0Z" fill="#8a877e"/><path d="M458.1 621.4L463.3 624.5L465.1 621.2L460.1 618.2Z" fill="#87847b"/><path d="M459.2 619.6L464.3 622.7L466.2 619.5L461.1 616.5Z" fill="#827f76"/><path d="M460.3 617.9L465.3 620.9L467.2 617.7L462.2 614.7Z" fill="#7c7970"/><path d="M461.4 616.1L466.4 619.1L468.2 615.9L463.3 613.0Z" fill="#8c8980"/><path d="M433.8 674.1L719.4 839.1L721.2 835.9L435.6 670.9Z" fill="#4f4d48"/><path d="M434.8 672.3L720.4 837.3L722.3 834.1L436.7 669.1Z" fill="#52504b"/><path d="M435.8 670.5L721.5 835.5L723.3 832.3L437.7 667.3Z" fill="#55534e"/><path d="M436.9 668.8L722.5 833.7L724.3 830.5L438.7 665.5Z" fill="#585651"/><path d="M437.9 667.0L723.5 831.9L725.4 828.7L439.8 663.8Z" fill="#5b5954"/><path d="M438.9 665.2L724.5 830.1L726.4 826.9L440.8 662.0Z" fill="#5d5b56"/><path d="M440.0 663.4L725.6 828.4L727.4 825.1L441.8 660.2Z" fill="#605e59"/><path d="M441.0 661.6L726.6 826.6L728.5 823.3L442.9 658.4Z" fill="#65635e"/><path d="M442.0 659.8L727.6 824.8L729.5 821.6L443.9 656.6Z" fill="#6e6d68"/><path d="M443.1 658.0L728.7 823.0L730.5 819.8L444.9 654.8Z" fill="#777772"/><path d="M444.1 656.3L729.7 821.2L731.6 818.0L446.0 653.0Z" fill="#7f807b"/><path d="M445.1 654.5L730.7 819.4L732.6 816.2L447.0 651.3Z" fill="#848580"/><path d="M446.2 652.7L731.8 817.6L733.6 814.4L448.0 649.5Z" fill="#888a85"/><path d="M447.2 650.9L732.8 815.8L734.7 812.6L449.0 647.7Z" fill="#8d8f8a"/><path d="M448.2 649.1L733.8 814.1L735.7 810.8L450.1 645.9Z" fill="#878781"/><path d="M449.3 647.3L734.9 812.3L736.7 809.1L451.1 644.1Z" fill="#7f7e78"/><path d="M450.3 645.5L735.9 810.5L737.7 807.3L452.1 642.3Z" fill="#78766e"/><path d="M451.3 643.8L736.9 808.7L738.8 805.5L453.2 640.5Z" fill="#7a766e"/><path d="M452.3 642.0L738.0 806.9L739.8 803.7L454.2 638.8Z" fill="#7e7c74"/><path d="M453.4 640.2L739.0 805.1L740.8 801.9L455.2 637.0Z" fill="#848078"/><path d="M454.4 638.4L740.0 803.3L741.9 800.1L456.3 635.2Z" fill="#88867e"/><path d="M455.4 636.6L741.0 801.6L742.9 798.3L457.3 633.4Z" fill="#8d8a82"/><path d="M456.5 634.8L742.1 799.8L743.9 796.6L458.3 631.6Z" fill="#918e85"/><path d="M457.5 633.0L743.1 798.0L745.0 794.8L459.4 629.8Z" fill="#959289"/><path d="M458.5 631.3L744.1 796.2L746.0 793.0L460.4 628.0Z" fill="#99968d"/><path d="M459.6 629.5L745.2 794.4L747.0 791.2L461.4 626.2Z" fill="#96948a"/><path d="M460.6 627.7L746.2 792.6L748.1 789.4L462.5 624.5Z" fill="#928e86"/><path d="M461.6 625.9L747.2 790.8L749.1 787.6L463.5 622.7Z" fill="#8c8a80"/><path d="M462.7 624.1L748.3 789.1L750.1 785.8L464.5 620.9Z" fill="#88847c"/><path d="M463.7 622.3L749.3 787.3L751.2 784.1L465.5 619.1Z" fill="#807d74"/><path d="M464.7 620.5L750.3 785.5L752.2 782.3L466.6 617.3Z" fill="#77746c"/><path d="M465.8 618.7L751.4 783.7L753.2 780.5L467.6 615.5Z" fill="#8c8980"/></g></g>
<defs><mask id="lowclip" maskUnits="userSpaceOnUse" x="0" y="0" width="1024" height="1024"><path d="M467.2 337.2L460.7 333.7L454.3 330.4L447.7 327.5L441.1 324.8L434.5 322.5L427.8 320.5L421.1 318.9L414.4 317.6L407.6 316.7L400.8 316.2L394.0 316.2L387.2 316.5L380.5 317.3L373.9 318.6L367.3 320.3L360.9 322.5L354.7 325.1L348.7 328.2L342.9 331.8L337.5 335.8L332.3 340.2L327.5 344.9L323.0 350.0L318.9 355.4L315.2 361.0L311.8 366.9L308.8 373.0L306.2 379.3L303.8 385.7L301.9 392.4L300.2 399.1L298.9 406.0L297.9 413.0L297.2 420.1L296.7 427.3L296.6 434.6L296.7 442.0L297.1 449.4L297.8 456.9L298.8 464.5L300.0 472.1L301.4 479.7L303.1 487.4L305.1 495.1L307.2 502.8L309.6 510.5L312.2 518.1L315.1 525.8L318.1 533.4L321.4 541.0L324.9 548.5L328.6 555.9L332.4 563.2L336.5 570.5L340.8 577.7L345.2 584.7L349.8 591.6L354.5 598.4L359.4 605.1L364.5 611.5L369.7 617.9L375.0 624.0L380.5 630.0L386.1 635.7L391.8 641.3L397.6 646.6L403.6 651.7L409.6 656.6L415.7 661.2L421.9 665.6L428.1 669.7L434.5 673.6L719.5 838.2L752.5 781.0L467.5 616.4L463.2 613.9L458.8 611.0L454.4 608.0L450.0 604.7L445.6 601.1L441.2 597.4L436.7 593.4L432.4 589.2L428.0 584.8L423.7 580.2L419.5 575.4L415.4 570.5L411.3 565.4L407.4 560.1L403.6 554.7L399.8 549.2L396.3 543.6L392.8 537.8L389.5 532.0L386.4 526.1L383.4 520.2L380.5 514.2L377.9 508.2L375.4 502.2L373.1 496.2L371.1 490.2L369.2 484.2L367.5 478.3L366.0 472.5L364.7 466.7L363.6 461.0L362.7 455.4L362.0 450.0L361.6 444.7L361.3 439.6L361.2 434.6L361.3 429.8L361.6 425.2L362.0 420.9L362.6 416.8L363.3 412.9L364.2 409.2L365.2 405.8L366.4 402.7L367.6 399.9L368.8 397.3L370.2 394.9L371.6 392.8L373.0 390.9L374.5 389.3L375.9 387.8L377.5 386.5L379.0 385.4L380.6 384.4L382.3 383.5L384.1 382.8L386.0 382.1L388.0 381.6L390.3 381.2L392.7 380.9L395.2 380.7L398.0 380.8L401.0 381.0L404.1 381.4L407.5 382.0L411.0 382.9L414.6 384.0L418.4 385.3L422.4 386.9L426.4 388.7L430.6 390.8L434.8 393.2Z" fill="#fff"/><path d="M467.1 337.2L465.0 336.2L462.8 335.5L460.4 335.2L457.9 335.1L455.3 335.4L452.7 336.0L450.1 337.0L447.5 338.2L444.9 339.7L442.4 341.6L439.9 343.6L437.6 346.0L435.5 348.5L433.5 351.2L431.7 354.1L430.1 357.0L428.8 360.1L427.7 363.2L426.8 366.4L426.2 369.5L425.9 372.6L425.9 375.6L426.1 378.5L426.6 381.3L427.4 383.9L428.4 386.2L429.7 388.4L431.2 390.2L432.9 391.9L434.9 393.2L538.8 453.2L571.1 397.2Z" fill="#000"/></mask></defs><g mask="url(#lowclip)" opacity="1">
<path d="M953.3 113.0L1024.0 153.8M903.8 113.0L1024.0 182.4M854.4 113.0L1024.0 210.9M0.0 138.2L43.7 113.0M805.0 113.0L1024.0 239.5M0.0 166.8L93.1 113.0M706.1 113.0L1024.0 296.5M0.0 223.8L192.0 113.0M656.7 113.0L1024.0 325.1M0.0 252.4L241.4 113.0M607.2 113.0L1024.0 353.6M0.0 280.9L290.8 113.0M557.8 113.0L1024.0 382.2M0.0 309.5L340.3 113.0M458.9 113.0L1024.0 439.2M0.0 366.5L439.1 113.0M409.5 113.0L1024.0 467.8M0.0 395.1L488.6 113.0M360.1 113.0L1024.0 496.3M0.0 423.6L538.0 113.0M310.6 113.0L1024.0 524.9M0.0 452.2L587.4 113.0M211.8 113.0L1024.0 581.9M0.0 509.2L686.3 113.0M162.3 113.0L1024.0 610.5M0.0 537.8L735.7 113.0M112.9 113.0L1024.0 639.0M0.0 566.3L785.2 113.0M63.5 113.0L1024.0 667.6M0.0 594.9L834.6 113.0M0.0 133.4L1024.0 724.6M0.0 651.9L933.5 113.0M0.0 162.0L1024.0 753.2M0.0 680.5L982.9 113.0M0.0 190.5L1024.0 781.7M0.0 709.0L1024.0 117.8M0.0 219.1L1024.0 810.3M0.0 737.6L1024.0 146.4M0.0 276.1L1024.0 867.3M0.0 794.6L1024.0 203.4M0.0 304.7L1024.0 895.9M0.0 823.2L1024.0 232.0M0.0 333.2L1024.0 924.4M0.0 851.7L1024.0 260.5M0.0 361.8L1024.0 953.0M0.0 880.3L1024.0 289.1M0.0 418.8L1011.8 1003.0M0.0 937.3L1024.0 346.1M0.0 447.4L962.4 1003.0M0.0 965.9L1024.0 374.7M0.0 475.9L912.9 1003.0M0.0 994.4L1024.0 403.2M0.0 504.5L863.5 1003.0M34.6 1003.0L1024.0 431.8M0.0 561.5L764.6 1003.0M133.4 1003.0L1024.0 488.8M0.0 590.1L715.2 1003.0M182.9 1003.0L1024.0 517.4M0.0 618.6L665.8 1003.0M232.3 1003.0L1024.0 545.9M0.0 647.2L616.3 1003.0M281.7 1003.0L1024.0 574.5M0.0 704.2L517.5 1003.0M380.6 1003.0L1024.0 631.5M0.0 732.8L468.0 1003.0M430.0 1003.0L1024.0 660.1M0.0 761.3L418.6 1003.0M479.5 1003.0L1024.0 688.6M0.0 789.9L369.2 1003.0M528.9 1003.0L1024.0 717.2M0.0 846.9L270.3 1003.0M627.8 1003.0L1024.0 774.2M0.0 875.5L220.9 1003.0M677.2 1003.0L1024.0 802.8M0.0 904.0L171.4 1003.0M726.6 1003.0L1024.0 831.3M0.0 932.6L122.0 1003.0M776.1 1003.0L1024.0 859.9M0.0 989.6L23.1 1003.0M874.9 1003.0L1024.0 916.9M924.4 1003.0L1024.0 945.5M973.8 1003.0L1024.0 974.0M1023.2 1003.0L1024.0 1002.6" stroke="#000" stroke-opacity="0.035" stroke-width="1" fill="none"/>
<path d="M1002.7 113.0L1024.0 125.3M755.5 113.0L1024.0 268.0M0.0 195.3L142.5 113.0M508.4 113.0L1024.0 410.7M0.0 338.0L389.7 113.0M261.2 113.0L1024.0 553.4M0.0 480.7L636.9 113.0M14.0 113.0L1024.0 696.1M0.0 623.4L884.0 113.0M0.0 247.6L1024.0 838.8M0.0 766.1L1024.0 174.9M0.0 390.3L1024.0 981.5M0.0 908.8L1024.0 317.6M0.0 533.0L814.1 1003.0M84.0 1003.0L1024.0 460.3M0.0 675.7L566.9 1003.0M331.2 1003.0L1024.0 603.0M0.0 818.4L319.7 1003.0M578.3 1003.0L1024.0 745.7M0.0 961.1L72.6 1003.0M825.5 1003.0L1024.0 888.4" stroke="#000" stroke-opacity="0.09" stroke-width="1" fill="none"/>
<line x1="884" y1="113" x2="0" y2="623.4" stroke="#3bd13b" stroke-opacity="0.6" stroke-width="1.3"/>
</g>
<path d="M467.1 337.2L465.6 336.4L463.9 335.8L462.2 335.4L460.4 335.2L458.5 335.1L456.6 335.2L454.7 335.5L452.7 336.0L450.7 336.7L448.8 337.5L446.8 338.6L444.9 339.7L443.0 341.1L441.1 342.6L439.3 344.2L437.6 346.0L436.0 347.8L434.5 349.8L433.0 351.9L431.7 354.1L430.5 356.3L429.4 358.6L428.5 360.9L427.7 363.2L427.0 365.6L426.5 368.0L426.1 370.3L425.9 372.6L425.8 374.9L425.9 377.1L426.2 379.2L426.6 381.3L427.1 383.2L427.8 385.1L428.7 386.8L429.7 388.4L430.8 389.8L432.0 391.1L433.4 392.2L434.9 393.2" fill="none" stroke="#000" stroke-width="1.4"/>
<path d="M467.1 617.0L465.6 616.2L463.9 615.6L462.2 615.2L460.4 615.0L458.5 614.9L456.6 615.0L454.7 615.3L452.7 615.8L450.7 616.5L448.8 617.3L446.8 618.4L444.9 619.5L443.0 620.9L441.1 622.4L439.3 624.0L437.6 625.8L436.0 627.6L434.5 629.6L433.0 631.7L431.7 633.9L430.5 636.1L429.4 638.4L428.5 640.7L427.7 643.0L427.0 645.4L426.5 647.8L426.1 650.1L425.9 652.4L425.8 654.7L425.9 656.9L426.2 659.0L426.6 661.1L427.1 663.0L427.8 664.9L428.7 666.6L429.7 668.2L430.8 669.6L432.0 670.9L433.4 672.0L434.9 673.0" fill="none" stroke="#000" stroke-width="1.4"/>
<path d="M693.5 468.8L715.2 494.1L716.3 494.9L717.3 495.8L718.1 497.0L718.8 498.2L719.3 499.7L719.7 501.2L719.9 502.9L720.0 504.7L719.9 506.5L719.6 508.4L719.2 510.4L718.6 512.4L717.8 514.3L717.0 516.2L716.0 518.1L714.8 519.9L713.6 521.7L712.3 523.3L710.9 524.8L709.4 526.1L707.9 527.3L706.3 528.3L704.7 529.2L703.2 529.8L701.6 530.3L700.1 530.5L698.7 530.6L697.3 530.4L696.0 530.0L694.8 529.5L661.2 524.7L661.2 524.7L659.3 523.4L657.5 521.8L656.0 519.9L654.7 517.8L653.7 515.4L652.9 512.8L652.4 510.1L652.2 507.2L652.2 504.2L652.6 501.1L653.1 497.9L654.0 494.8L655.1 491.7L656.5 488.6L658.0 485.6L659.8 482.7L661.8 480.0L664.0 477.5L666.3 475.2L668.7 473.1L671.2 471.3L673.8 469.8L676.4 468.5L679.1 467.6L681.7 467.0L684.3 466.7L686.7 466.7L689.1 467.1L691.4 467.8L693.5 468.8Z" fill="url(#coneg)"/>
<path d="M693.5 468.8L691.9 468.0L690.3 467.4L688.5 466.9L686.7 466.7L684.9 466.6L683.0 466.8L681.0 467.1L679.1 467.6L677.1 468.2L675.1 469.1L673.2 470.1L671.2 471.3L669.3 472.6L667.5 474.1L665.7 475.8L664.0 477.5L662.4 479.4L660.8 481.4L659.4 483.4L658.0 485.6L656.8 487.8L655.8 490.1L654.8 492.4L654.0 494.8L653.3 497.2L652.8 499.5L652.5 501.9L652.2 504.2L652.2 506.4L652.3 508.6L652.5 510.8L652.9 512.8L653.5 514.8L654.2 516.6L655.0 518.3L656.0 519.9L657.1 521.3L658.4 522.6L659.7 523.8L661.2 524.7" fill="none" stroke="#000" stroke-width="1.4"/>
<path d="M694.8 529.5L696.3 530.1L698.0 530.5L699.8 530.5L701.6 530.3L703.6 529.7L705.5 528.8L707.5 527.6L709.4 526.1L711.2 524.4L712.9 522.5L714.5 520.4L716.0 518.1L717.2 515.8L718.2 513.3L719.0 510.9L719.6 508.4L719.9 506.1L720.0 503.8L719.8 501.6L719.3 499.7L718.6 497.9L717.7 496.4L716.5 495.1L715.2 494.1L713.7 493.5L712.0 493.1L710.2 493.1L708.4 493.3L706.4 493.9L704.5 494.8L702.5 496.0L700.6 497.5L698.8 499.2L697.1 501.1L695.5 503.2L694.0 505.5L692.8 507.8L691.8 510.3L691.0 512.7L690.4 515.2L690.1 517.5L690.0 519.8L690.2 522.0L690.7 523.9L691.4 525.7L692.3 527.2L693.5 528.5L694.8 529.5Z" fill="#858582" stroke="#000" stroke-width="1.5"/>
<path d="M699.2 522.3L700.3 522.7L701.5 522.9L702.8 522.8L704.1 522.5L705.5 521.9L706.9 521.0L708.2 519.9L709.5 518.6L710.6 517.2L711.6 515.6L712.5 513.9L713.2 512.2L713.7 510.5L713.9 508.8L714.0 507.2L713.8 505.7L713.5 504.3L712.9 503.2L712.1 502.2L711.2 501.5L710.1 501.1L708.9 500.9L707.6 501.0L706.3 501.3L704.9 501.9L703.5 502.8L702.2 503.9L700.9 505.2L699.8 506.6L698.8 508.2L697.9 509.9L697.2 511.6L696.7 513.3L696.5 515.0L696.4 516.6L696.6 518.1L696.9 519.5L697.5 520.6L698.3 521.6L699.2 522.3Z" fill="#6d6b66" stroke="#000" stroke-width="1.4"/>
<path d="M711.2 501.5L712.0 502.1L712.7 502.8L713.2 503.7L713.6 504.8L713.9 505.9L714.0 507.2L714.0 508.5L713.8 509.9L713.4 511.4L713.0 512.8L712.4 514.2L711.6 515.6L710.8 516.9L709.9 518.2L708.9 519.3L707.8 520.3L706.7 521.2L705.5 521.9L704.4 522.4L703.2 522.8L702.1 522.9L701.1 522.9L700.1 522.7L699.2 522.3L698.5 521.6L698.9 521.6L699.3 521.5L699.7 521.2L700.3 520.8L701.0 520.2L701.6 519.5L702.4 518.6L703.1 517.6L703.9 516.5L704.7 515.3L705.5 514.0L706.3 512.8L707.0 511.4L707.7 510.1L708.3 508.9L708.9 507.6L709.4 506.4L709.8 505.4L710.1 504.4L710.3 503.6L710.4 502.8L710.4 502.3L710.3 501.9L710.0 501.6Z" fill="#a29f96"/>
<path d="M698.5 521.6L698.9 521.6L699.3 521.5L699.7 521.2L700.3 520.8L701.0 520.2L701.6 519.5L702.4 518.6L703.1 517.6L703.9 516.5L704.7 515.3L705.5 514.0L706.3 512.8L707.0 511.4L707.7 510.1L708.3 508.9L708.9 507.6L709.4 506.4L709.8 505.4L710.1 504.4L710.3 503.6L710.4 502.8L710.4 502.3L710.3 501.9L710.0 501.6" fill="none" stroke="#111" stroke-width="1.1"/>
<path d="M699.2 522.3L700.3 522.7L701.5 522.9L702.8 522.8L704.1 522.5L705.5 521.9L706.9 521.0L708.2 519.9L709.5 518.6L710.6 517.2L711.6 515.6L712.5 513.9L713.2 512.2L713.7 510.5L713.9 508.8L714.0 507.2L713.8 505.7L713.5 504.3L712.9 503.2L712.1 502.2L711.2 501.5L710.1 501.1L708.9 500.9L707.6 501.0L706.3 501.3L704.9 501.9L703.5 502.8L702.2 503.9L700.9 505.2L699.8 506.6L698.8 508.2L697.9 509.9L697.2 511.6L696.7 513.3L696.5 515.0L696.4 516.6L696.6 518.1L696.9 519.5L697.5 520.6L698.3 521.6L699.2 522.3Z" fill="none" stroke="#000" stroke-width="1.4"/>
<line x1="699.3" y1="508.7" x2="722" y2="521.8" stroke="#ff5050" stroke-width="1.2" stroke-opacity="0.85"/>
<path d="M661.2 524.7L434.9 393.2M434.5 673.6L659.6 803.5" stroke="#111" stroke-width="1" stroke-dasharray="1.2 2.2" stroke-opacity="0.6" fill="none"/>
<path d="M692.6 746.4L751.9 781.1L753.3 782.1L754.6 783.4L755.7 785.0L756.6 786.9L757.2 789.0L757.6 791.3L757.8 793.8L757.8 796.4L757.5 799.2L756.9 802.1L756.2 805.0L755.2 808.0L754.0 810.9L752.7 813.9L751.1 816.8L749.4 819.6L747.5 822.2L745.5 824.7L743.5 827.0L741.3 829.2L739.1 831.1L736.8 832.7L734.5 834.1L732.3 835.1L730.1 835.9L728.0 836.4L725.9 836.6L724.0 836.5L722.2 836.0L720.6 835.3L659.6 803.5L659.6 803.5L657.6 802.2L655.9 800.5L654.3 798.6L653.0 796.4L652.0 794.0L651.2 791.4L650.6 788.6L650.4 785.6L650.4 782.5L650.8 779.4L651.4 776.2L652.2 773.0L653.4 769.8L654.8 766.6L656.4 763.6L658.2 760.7L660.2 757.9L662.4 755.3L664.8 752.9L667.3 750.8L669.8 749.0L672.5 747.4L675.2 746.1L677.9 745.1L680.5 744.5L683.2 744.2L685.7 744.3L688.1 744.6L690.4 745.3L692.6 746.4Z" fill="url(#thrg)"/>
<path d="M692.0 747.4L690.5 746.6L688.8 746.0L687.1 745.6L685.3 745.4L683.5 745.3L681.6 745.4L679.7 745.7L677.8 746.2L675.8 746.9L673.9 747.7L672.0 748.7L670.1 749.9L668.2 751.2L666.4 752.7L664.6 754.3L662.9 756.0L661.3 757.9L659.8 759.8L658.4 761.9L657.1 764.0L655.9 766.2L654.8 768.4L653.9 770.7L653.1 773.0L652.5 775.4L652.0 777.7L651.6 780.0L651.4 782.3L651.3 784.5L651.4 786.7L651.7 788.8L652.1 790.8L652.6 792.7L653.3 794.5L654.1 796.2L655.1 797.8L656.2 799.2L657.4 800.4L658.8 801.6L660.2 802.5" fill="none" stroke="#0a0a0a" stroke-width="2.2"/>
<path d="M696.6 750.1L695.1 749.3L693.4 748.7L691.7 748.3L689.9 748.0L688.1 748.0L686.2 748.1L684.3 748.4L682.4 748.9L680.4 749.6L678.5 750.4L676.6 751.4L674.7 752.6L672.8 753.9L671.0 755.3L669.2 756.9L667.5 758.7L665.9 760.5L664.4 762.5L663.0 764.5L661.7 766.6L660.5 768.8L659.4 771.1L658.5 773.4L657.7 775.7L657.1 778.0L656.6 780.3L656.2 782.7L656.0 784.9L655.9 787.2L656.0 789.3L656.3 791.4L656.7 793.4L657.2 795.4L657.9 797.2L658.7 798.9L659.7 800.4L660.8 801.8L662.0 803.1L663.4 804.2L664.8 805.2" fill="none" stroke="#0a0a0a" stroke-width="2.2"/>
<path d="M706.6 755.9L705.1 755.1L703.5 754.5L701.8 754.1L700.0 753.9L698.2 753.8L696.4 753.9L694.5 754.3L692.6 754.8L690.6 755.4L688.7 756.3L686.8 757.3L684.9 758.5L683.0 759.8L681.2 761.3L679.5 762.9L677.8 764.6L676.2 766.4L674.7 768.4L673.3 770.5L672.0 772.6L670.8 774.8L669.7 777.0L668.8 779.3L668.0 781.6L667.3 783.9L666.8 786.3L666.4 788.6L666.2 790.8L666.1 793.1L666.2 795.2L666.4 797.3L666.8 799.3L667.4 801.2L668.0 803.0L668.8 804.7L669.8 806.2L670.9 807.6L672.1 808.9L673.4 810.0L674.8 810.9" fill="none" stroke="#0a0a0a" stroke-width="2.2"/>
<path d="M716.5 761.6L715.0 760.8L713.4 760.2L711.8 759.8L710.0 759.6L708.2 759.6L706.4 759.7L704.5 760.1L702.6 760.6L700.7 761.2L698.8 762.1L696.9 763.1L695.0 764.3L693.2 765.6L691.4 767.1L689.6 768.7L688.0 770.5L686.4 772.3L684.9 774.3L683.5 776.3L682.1 778.5L681.0 780.6L679.9 782.9L678.9 785.2L678.1 787.5L677.5 789.8L676.9 792.1L676.6 794.4L676.3 796.7L676.2 798.9L676.3 801.0L676.5 803.1L676.9 805.1L677.4 807.0L678.1 808.8L678.8 810.5L679.8 812.0L680.8 813.4L682.0 814.6L683.3 815.7L684.7 816.6" fill="none" stroke="#0a0a0a" stroke-width="2.2"/>
<path d="M726.5 767.3L725.0 766.6L723.5 766.0L721.8 765.7L720.1 765.4L718.3 765.4L716.5 765.6L714.7 765.9L712.8 766.4L710.9 767.1L709.0 768.0L707.1 769.0L705.2 770.2L703.4 771.5L701.6 773.0L699.9 774.6L698.2 776.4L696.6 778.2L695.1 780.2L693.7 782.3L692.4 784.4L691.2 786.6L690.2 788.8L689.2 791.1L688.4 793.4L687.7 795.7L687.2 798.0L686.8 800.3L686.5 802.6L686.5 804.8L686.5 806.9L686.7 809.0L687.1 811.0L687.5 812.9L688.2 814.7L689.0 816.3L689.9 817.8L690.9 819.2L692.1 820.4L693.3 821.5L694.7 822.4" fill="none" stroke="#0a0a0a" stroke-width="2.2"/>
<path d="M736.7 773.2L735.2 772.5L733.7 772.0L732.1 771.6L730.4 771.4L728.6 771.4L726.8 771.5L725.0 771.9L723.1 772.4L721.3 773.1L719.4 774.0L717.5 775.0L715.7 776.2L713.8 777.6L712.1 779.1L710.3 780.7L708.7 782.4L707.1 784.3L705.6 786.3L704.2 788.3L702.9 790.4L701.7 792.6L700.6 794.9L699.7 797.1L698.9 799.5L698.2 801.8L697.6 804.1L697.2 806.3L697.0 808.6L696.9 810.8L696.9 812.9L697.1 815.0L697.4 817.0L697.9 818.9L698.5 820.6L699.3 822.3L700.1 823.8L701.2 825.1L702.3 826.4L703.5 827.4L704.9 828.3" fill="none" stroke="#0a0a0a" stroke-width="2.2"/>
<path d="M746.3 778.8L744.9 778.1L743.3 777.5L741.7 777.2L740.1 777.0L738.3 777.0L736.6 777.2L734.7 777.5L732.9 778.1L731.0 778.8L729.2 779.6L727.3 780.7L725.5 781.9L723.7 783.2L721.9 784.7L720.2 786.4L718.6 788.1L717.0 790.0L715.5 792.0L714.1 794.0L712.8 796.1L711.6 798.3L710.5 800.6L709.5 802.8L708.7 805.1L708.0 807.4L707.5 809.7L707.1 812.0L706.8 814.3L706.7 816.5L706.7 818.6L706.9 820.6L707.2 822.6L707.6 824.5L708.2 826.2L709.0 827.9L709.8 829.4L710.8 830.7L711.9 831.9L713.2 833.0L714.5 833.9" fill="none" stroke="#0a0a0a" stroke-width="2.2"/>
<path d="M720.6 835.3L722.2 836.0L724.0 836.5L725.9 836.6L728.0 836.4L730.1 835.9L732.3 835.1L734.5 834.1L736.8 832.7L739.1 831.1L741.3 829.2L743.5 827.0L745.5 824.7L747.5 822.2L749.4 819.6L751.1 816.8L752.7 813.9L754.0 810.9L755.2 808.0L756.2 805.0L756.9 802.1L757.5 799.2L757.8 796.4L757.8 793.8L757.6 791.3L757.2 789.0L756.6 786.9L755.7 785.0L754.6 783.4L753.3 782.1L751.9 781.1L750.2 780.3L748.4 779.9L746.5 779.7L744.4 779.9L742.3 780.4L740.1 781.2L737.9 782.3L735.6 783.6L733.3 785.3L731.1 787.2L728.9 789.3L726.9 791.6L724.9 794.1L723.0 796.8L721.3 799.6L719.7 802.4L718.4 805.4L717.2 808.4L716.2 811.3L715.5 814.3L714.9 817.1L714.6 819.9L714.6 822.5L714.8 825.0L715.2 827.3L715.8 829.4L716.7 831.3L717.8 832.9L719.1 834.2L720.6 835.3Z" fill="#7d7d7a" stroke="#000" stroke-width="2.2"/>
<path d="M724.4 828.7L725.7 829.3L727.1 829.7L728.7 829.8L730.3 829.8L732.0 829.4L733.7 828.9L735.5 828.1L737.3 827.1L739.0 825.9L740.8 824.5L742.4 822.9L744.1 821.2L745.6 819.3L747.0 817.3L748.3 815.2L749.5 813.0L750.5 810.7L751.4 808.5L752.1 806.2L752.6 804.0L753.0 801.8L753.1 799.6L753.1 797.6L752.9 795.7L752.5 793.9L752.0 792.3L751.2 790.8L750.3 789.5L749.3 788.5L748.1 787.6L746.7 787.0L745.3 786.6L743.7 786.5L742.1 786.6L740.4 786.9L738.7 787.4L736.9 788.2L735.1 789.2L733.4 790.4L731.6 791.8L730.0 793.4L728.3 795.2L726.8 797.1L725.4 799.1L724.1 801.2L722.9 803.4L721.9 805.6L721.0 807.9L720.3 810.1L719.8 812.4L719.4 814.6L719.3 816.7L719.3 818.7L719.5 820.7L719.9 822.4L720.4 824.1L721.2 825.5L722.1 826.8L723.1 827.8L724.4 828.7Z" fill="url(#holeg)" stroke="#000" stroke-width="2"/>
</g>
</svg>
<div style="position:absolute;left:0;top:0;width:1024px;height:113px;background:#f2f2f2"></div>
<div style="position:absolute;left:0;top:109px;width:1024px;height:1px;background:#dddddd"></div>
<div style="position:absolute;left:0;top:0;width:1024px;height:113px;font-family:'Liberation Sans',sans-serif;font-size:10px;line-height:12px;color:#3a3a3a;white-space:nowrap">
<div style="position:absolute;left:9.0px;top:34.0px;font-size:10.5px;transform:scaleX(0.965);transform-origin:0 0">SHEET METAL</div>
<div style="position:absolute;left:121.2px;top:34.0px;font-size:10.5px;transform:scaleX(1.022);transform-origin:0 0">PLASTIC</div>
<div style="position:absolute;left:209.5px;top:34.0px;font-size:10.5px;transform:scaleX(0.923);transform-origin:0 0">UTILITIES</div>
<div style="position:absolute;left:297.4px;top:34.0px;font-size:10.5px;transform:scaleX(1.037);transform-origin:0 0">MANAGE</div>
<div style="position:absolute;left:65.8px;top:94.5px;font-size:10.5px;transform:scaleX(0.983);transform-origin:0 0">AUTOMATE</div>
<div style="position:absolute;left:276.8px;top:94.5px;font-size:10.5px;transform:scaleX(1.013);transform-origin:0 0">MODIFY</div>
<div style="position:absolute;left:494.5px;top:94.5px;font-size:10.5px;transform:scaleX(0.983);transform-origin:0 0">ASSEMBLE</div>
<div style="position:absolute;left:611.7px;top:94.5px;font-size:10.5px;transform:scaleX(0.951);transform-origin:0 0">CONFIGURE</div>
<div style="position:absolute;left:709.6px;top:94.5px;font-size:10.5px;transform:scaleX(0.962);transform-origin:0 0">CONSTRUCT</div>
<div style="position:absolute;left:808.2px;top:94.5px;font-size:10.5px;transform:scaleX(0.953);transform-origin:0 0">INSPECT</div>
<div style="position:absolute;left:920.7px;top:94.5px;font-size:10.5px;transform:scaleX(0.966);transform-origin:0 0">INSERT</div>
<div style="position:absolute;left:562.3px;top:7.5px;font-size:12px;line-height:14px;color:#333">coffee part</div>
</div>
<svg style="position:absolute;left:0;top:0" width="1024" height="113" viewBox="0 0 1024 113">
<g fill="#dcdcdc">
<rect x="51.6" y="54.5" width="1" height="51"/><rect x="145.6" y="54.5" width="1" height="51"/><rect x="457.6" y="54.5" width="1" height="51"/><rect x="597.3" y="54.5" width="1" height="51"/><rect x="695" y="54.5" width="1" height="51"/><rect x="794.8" y="54.5" width="1" height="51"/><rect x="873.5" y="54.5" width="1" height="51"/><rect x="1013.5" y="54.5" width="1" height="51"/>
</g>
<!-- dropdown triangles -->
<g fill="#3a3a3a"><path d="M125.2 97.1h5.6l-2.8 3.6z"/><path d="M319.1 97.1h5.6l-2.8 3.6z"/><path d="M553.5 97.1h5.6l-2.8 3.6z"/><path d="M673.2 97.1h5.6l-2.8 3.6z"/><path d="M775.4 97.1h5.6l-2.8 3.6z"/><path d="M852.5 97.1h5.6l-2.8 3.6z"/><path d="M959.2 97.1h5.6l-2.8 3.6z"/></g>
<!-- title cube -->
<g>
<path d="M549.9 7l7 3.9v7.8l-7 3.9l-7-3.9v-7.8z" fill="#ff8a3d"/>
<path d="M542.9 10.9l7 3.9l7-3.9l-7-3.9z" fill="#ffc494"/>
<path d="M549.9 14.8v7.8l7-3.9v-7.8z" fill="#f26a00"/>
</g>
<!-- mirror -->
<path d="M11 85.3L24.4 57.2V85.3Z" fill="#f8f8f8" stroke="#555" stroke-width="1.2"/>
<path d="M26 56.7L40.8 85.8H26Z" fill="#5eaae4"/>
<!-- automate -->
<g>
<path d="M88 59 Q97 66 98.4 70 Q101 66 110 62" fill="none" stroke="#5b9fd6" stroke-width="3.6"/>
<path d="M92.5 66 L98.4 80 L104 66 Z" fill="#5b9fd6" stroke="#5b9fd6" stroke-width="2"/>
<path d="M95.6 68.5 L98.4 76 L101.2 68.5Z" fill="#f1f1f1"/>
<rect x="84.4" y="55.4" width="6.4" height="6" fill="#f8f8f8" stroke="#555" stroke-width="1.1"/>
<path d="M111.3 57.3L115.7 61.8L111.3 66.3L106.8 61.8Z" fill="#f8f8f8" stroke="#555" stroke-width="1.1"/>
<circle cx="98.4" cy="80.9" r="5.8" fill="#5b9fd6"/>
<circle cx="98.4" cy="80.9" r="3.6" fill="#f8f8f8" stroke="#666" stroke-width="1.1"/>
<path d="M98.4 79v3.8M96.5 80.9h3.8" stroke="#666" stroke-width="0.9"/>
</g>
<!-- press pull -->
<g>
<path d="M159.8 61.2h6.4v25.3h-6.4z" fill="#d9d9d9"/>
<path d="M159.8 61.2l5.4-5.2h5v5.2z" fill="#f4f4f4"/>
<path d="M163.6 86.5h-4.4V60.8l5.6-5.4h5.2" fill="none" stroke="#555" stroke-width="1.1"/>
<path d="M166.2 61.2h9.1v25.3h-9.1z" fill="#64aee6"/>
<path d="M166.2 61.2l5.4-5.8h9.1l-5.4 5.8z" fill="#8ecaf6"/>
<path d="M175.3 61.2l5.4-5.8v25.8l-5.4 5.3z" fill="#4590cc"/>
<path d="M178.5 70.3h7" stroke="#fff" stroke-width="3"/>
<path d="M179 70.3h6.5" stroke="#333" stroke-width="1.2"/><path d="M184 67.5l4.2 2.8l-4.2 2.8z" fill="#333"/>
</g>
<!-- fillet -->
<g>
<path d="M201.6 62.5h10c6.5 0 12 5 14.2 13.2v10.7h-24.2z" fill="#d9d9d9"/>
<path d="M201.7 62.4l7.1-6.5h9.2l-4.5 6.3z" fill="#f4f4f4"/>
<path d="M213.2 62.3l5.3-6.8c7.4 0.8 13.4 5.8 14.7 12.8l-7.4 7.2c-1.8-7-6.4-12-12.6-13.2z" fill="#64aee6"/>
<path d="M225.8 75.6l7.4-7.2v14.4l-7.2 3.6z" fill="#bdbdbd"/>
<path d="M201.1 86.5V62.5l7.4-7.1h9.6M201.1 86.5h25l7.2-6.6v-12" fill="none" stroke="#555" stroke-width="1.1"/>
</g>
<!-- chamfer -->
<g>
<path d="M244.4 62.5h10.6l13.1 13.1v10.8h-23.7z" fill="#d9d9d9"/>
<path d="M244.5 62.4l7-6.5h8.6l-5.1 6.5z" fill="#f4f4f4"/>
<path d="M255 62.5l6.8-7l14.1 13.8l-7.6 6.7z" fill="#64aee6"/>
<path d="M268.3 76l7.6-6.7v12.5l-7.6 4.6z" fill="#bdbdbd"/>
<path d="M243.9 86.5V62.5l7.4-7.1h9.8M243.9 86.5h24.5l7.5-6.6v-10.6" fill="none" stroke="#555" stroke-width="1.1"/>
</g>
<!-- shell -->
<g>
<path d="M287.5 86.5V62.5l7.4-7.1h23.6v23.8l-7.3 7.3z" fill="#d9d9d9" stroke="#555" stroke-width="1.1"/>
<path d="M288 62.4l7-6.5h23l-6.8 6.5z" fill="#f4f4f4"/>
<path d="M311.2 62.6l6.8-6.3v22.8l-6.8 6.9z" fill="#bdbdbd"/>
<rect x="290.3" y="65.5" width="18.4" height="17.5" fill="#f0f0f0"/>
<path d="M291.3 66.3h4.8v9h8.3v6.8h-13.1z" fill="#8ecaf6"/>
<path d="M291.3 66.3h4.8v9l-4.8 6.8z" fill="#4590cc"/>
</g>
<!-- combine -->
<g>
<path d="M330.1 69.1h18.1v17.4h-18.1z" fill="#64aee6"/>
<path d="M330.1 69.1l4.4-4h5.9v4z" fill="#8ecaf6"/>
<path d="M348.2 76.6l3.8-3.8v10l-3.8 3.7z" fill="#4590cc"/>
<path d="M340.4 59.1h17.8v17.5h-17.8z" fill="#64aee6"/>
<path d="M340.4 59.1l4.1-4h17.4l-3.7 4z" fill="#8ecaf6"/>
<path d="M358.2 59.1l3.7-4v17.3l-3.7 4.2z" fill="#4590cc"/>
</g>
<!-- split body -->
<g>
<path d="M374.8 60.8h22.4v9.95h-22.4z" fill="#64aee6"/>
<path d="M374.8 60.8l6.6-5.7h21.6l-5.8 5.7z" fill="#8ecaf6"/>
<path d="M397.2 60.8l5.8-5.7v9.4l-5.8 5.8z" fill="#4590cc"/>
<path d="M372.6 73.7h24.6l7.5-7.9" fill="none" stroke="#fff" stroke-width="3.4"/>
<path d="M372.6 73.7h24.6l7.5-7.9" fill="none" stroke="#1e8de0" stroke-width="1.3"/>
<path d="M375.2 76.1h22v9.6h-22z" fill="#d9d9d9"/>
<path d="M397.2 76.1l5.4-4.9v9.1l-5.4 5.4z" fill="#bdbdbd"/>
<path d="M375.2 76.1v9.6h22l5.4-5.4v-9.1" fill="none" stroke="#555" stroke-width="1.1"/>
</g>
<!-- move -->
<g fill="#333">
<path d="M432.2 60v22M421 70.95h22.5" stroke="#333" stroke-width="2.2"/>
<path d="M432.2 55.4l-5 6.8h10z"/><path d="M432.2 86.5l-5-6.8h10z"/>
<path d="M416.5 70.9l6.8-5v10z"/><path d="M448 70.9l-6.8-5v10z"/>
</g>
<!-- new component -->
<g>
<path d="M470.4 86.6V74.8h27v8l-4 3.8z" fill="#d9d9d9" stroke="#555" stroke-width="1.1"/>
<path d="M483.2 86.4V75" stroke="#555" stroke-width="1"/>
<path d="M483.2 75l4-3.6h10.2l-4 3.6z" fill="#f4f4f4" stroke="#555" stroke-width="0.9"/>
<path d="M493.4 75l4-3.6v11.4l-4 3.6z" fill="#bdbdbd"/>
<path d="M470.2 61.6l3-2.8h12v13.2l-2.5 2.8h-12.5z" fill="#64aee6"/>
<path d="M470.4 61.8l3-2.9h11.8l-3 2.9z" fill="#8ecaf6"/>
<path d="M482.2 61.8l3-2.9v13l-3 2.9z" fill="#4590cc"/>
<path d="M493.60 55.50L494.86 60.25L499.12 57.78L496.65 62.04L501.40 63.30L496.65 64.56L499.12 68.82L494.86 66.35L493.60 71.10L492.34 66.35L488.08 68.82L490.55 64.56L485.80 63.30L490.55 62.04L488.08 57.78L492.34 60.25Z" fill="#f7a800" stroke="#e08a00" stroke-width="0.5"/>
</g>
<!-- joint -->
<g stroke="#555" stroke-width="1.05">
<path d="M515.8 83.6V64.2l7-6.8v19.9z" fill="#d9d9d9"/>
<path d="M522.8 58.6h4.6v10.4h-4.6z" fill="#e8e8e8"/>
<ellipse cx="525.1" cy="58.6" rx="2.3" ry="1.4" fill="#f4f4f4"/>
<path d="M542.4 66.5v17.8l-6.9-5.8V59.6z" fill="#d9d9d9"/>
<path d="M530.4 67.8h5.1v10.8h-5.1z" fill="#e8e8e8"/>
<ellipse cx="532.95" cy="67.8" rx="2.55" ry="1.4" fill="#f4f4f4"/>
</g>
<path d="M524 69.7v5M533.6 62.7v5.7" stroke="#1e8de0" stroke-width="1.1"/>
<!-- bom -->
<g>
<rect x="556.4" y="55.3" width="6.3" height="6.2" fill="#64aee6" stroke="#555" stroke-width="0.9"/>
<rect x="556.4" y="61.5" width="6.3" height="5.9" fill="#f8f8f8" stroke="#555" stroke-width="0.9"/>
<rect x="562.7" y="61.5" width="6.2" height="5.9" fill="#f8f8f8" stroke="#555" stroke-width="0.9"/>
<path d="M561.5 69v15.4M561.5 72.2h7.3M561.5 77.3h7.3M561.5 82.4h7.3" stroke="#777" stroke-width="1"/>
<rect x="571.4" y="63" width="16.3" height="23.6" fill="#f8f8f8" stroke="#555" stroke-width="1"/>
<rect x="571.4" y="62.7" width="16.5" height="3.8" fill="#555"/>
<path d="M575.5 66.5v20M571.4 70.5h16.3M571.4 74.5h16.3M571.4 78.5h16.3M571.4 82.5h16.3" stroke="#555" stroke-width="0.8"/>
</g>
<!-- configure 1 -->
<g>
<path d="M610.6 82.5V62.1l6.7-6.5h20.2v21.4" fill="#d9d9d9" stroke="#555" stroke-width="1.1"/>
<path d="M611.1 62.1l6.4-6h19.5l-6.4 6z" fill="#f4f4f4"/>
<path d="M631 62.3l6.3-6.1v21h-6.3z" fill="#bdbdbd"/>
<path d="M610.6 82.5h17" stroke="#555" stroke-width="1.1"/>
<rect x="627" y="76" width="15.5" height="10" fill="#f1f1f1"/>
<path d="M628.2 77.8h13.7M628.2 84h13.7" stroke="#555" stroke-width="1.6"/>
<path d="M632 75v5.6" stroke="#1e8de0" stroke-width="2"/><path d="M638.2 81.2v5.8" stroke="#555" stroke-width="1.8"/>
</g>
<!-- configure 2 -->
<g>
<rect x="653.6" y="55.6" width="29" height="27.6" fill="#f8f8f8" stroke="#555" stroke-width="1.1"/>
<rect x="653.1" y="55.1" width="30" height="5.3" fill="#555"/><rect x="655.5" y="57" width="3.5" height="1.8" fill="#f8f8f8"/>
<rect x="656.9" y="64.4" width="22.6" height="14.8" fill="none" stroke="#555" stroke-width="1"/>
<path d="M661.3 64.4v14.8M666.4 64.4v14.8M656.9 69.3h22.6M656.9 74.2h22.6" stroke="#555" stroke-width="1"/>
<rect x="669.5" y="76" width="16" height="10" fill="#f1f1f1"/>
<path d="M671 77.8h13.7M671 84h13.7" stroke="#555" stroke-width="1.6"/>
<path d="M675 75v5.6" stroke="#1e8de0" stroke-width="2"/><path d="M681 81.2v5.8" stroke="#555" stroke-width="1.8"/>
</g>
<!-- construct -->
<g>
<path d="M731.4 63.7h8.8v22.1h-8.8z" fill="#d9d9d9"/>
<path d="M731.4 63.7l8.8-8.2h8.5l-8.5 8.2z" fill="#f8f8f8"/>
<path d="M739.5 85.8h-8.6V63.7l8.9-8.2h8.2" fill="none" stroke="#555" stroke-width="1.1"/>
<path d="M740.2 63.7l8.5-8.2v21.8l-8.5 8.5z" fill="#56c27a"/>
<path d="M752.1 64l8.9-8.5v21.6l-8.9 8.7z" fill="#e8935c"/>
</g>
<!-- inspect -->
<g>
<path d="M822.5 67.1h25" stroke="#555" stroke-width="1.1"/>
<path d="M821.2 67.1l3.4-2.4v4.8zM848.5 67.1l-3.4-2.4v4.8z" fill="#555"/>
<path d="M821.3 63v9M848.4 63v9" stroke="#555" stroke-width="1.1"/>
<rect x="821.2" y="73" width="27.3" height="5.8" fill="#f5a300"/>
<path d="M824.5 73v2M828.3 73v2M832 73v2M835.8 73v2M839.5 73v2M843.3 73v2" stroke="#6a4a00" stroke-width="0.8"/>
</g>
<!-- insert 1 -->
<g>
<path d="M890.5 84.5V64.3l3-5.4h22v22.8l-3 2.8z" fill="#d9d9d9" stroke="#555" stroke-width="1.1"/>
<path d="M908.2 64.2l7.1-5.2v22.3l-7.1 3z" fill="#bdbdbd"/>
<path d="M885.8 59.5h9.8v-3.8l7.9 5.4l-7.9 5.4v-3.8h-9.8z" fill="#1e8de0"/>
<path d="M904.8 84.2l4.5-4.5M906.5 80l3-3a2.6 2.6 0 0 1 3.6 3.6l-3 3M910.2 80.5l3.5-3.5a2.6 2.6 0 0 0 -3.6 -3.6l-3.5 3.5" fill="none" stroke="#fff" stroke-width="4"/>
<path d="M903.2 82.8l4-4a2.4 2.4 0 0 1 3.4 3.4l-4 4a2.4 2.4 0 0 1 -3.4 -3.4zM909.2 76.8l4-4a2.4 2.4 0 0 1 3.4 3.4l-4 4a2.4 2.4 0 0 1 -3.4 -3.4z" fill="none" stroke="#333" stroke-width="1.8"/>
</g>
<!-- bolt -->
<g>
<path d="M931 57.5l1.3-1.2h21.4l1.3 1.2v6.2h-24z" fill="#7ab8ea"/>
<path d="M937 56.3h13v7.4h-13z" fill="#64aee6"/><path d="M950 56.3h3.7l1.3 1.2v6.2h-5z" fill="#4590cc"/>
<path d="M936 63.7h14v21.7l-1.5 1.4h-11l-1.5-1.4z" fill="#7ab8ea"/>
<path d="M936 66.5h14M936 69.3h14M936 72.1h14M936 74.9h14M936 77.7h14M936 80.5h14M936 83.3h14" stroke="#4f97d4" stroke-width="0.8"/>
<path d="M953.8 72.9v13.9M947 79.9h13.7" stroke="#f1f1f1" stroke-width="5"/>
<path d="M953.8 73.5v12.9M947.6 79.9h12.6" stroke="#1fa84a" stroke-width="2.6"/>
</g>
<!-- image -->
<g>
<rect x="973.4" y="55.8" width="28.4" height="29" fill="#7cc0f0" stroke="#4a90cf" stroke-width="0.6"/>
<path d="M973.4 84.8V72.5c3-3 6-5 9-4.2c3 0.8 6 5.5 9 6c2.5 0.4 4-3 6-3c2 0 3.2 2 4.4 4v9.5z" fill="#4a90cf"/>
<circle cx="993.9" cy="63.7" r="3" fill="#fff8c4"/>
</g>
</svg>

<svg style="position:absolute;left:0;top:960px" width="1024" height="64" viewBox="0 960 1024 64">
<rect x="457.3" y="973.3" width="236.5" height="22" fill="#f0f0f0"/>
<g fill="#333">
<path d="M481.4 983.5h5.2l-2.6 3z"/><path d="M592.2 982.9h5.7l-2.85 3.4z"/><path d="M622.7 982.9h5.4l-2.7 3.4z"/><path d="M653.5 982.9h5.4l-2.7 3.4z"/><path d="M684.3 982.9h5.7l-2.85 3.4z"/>
</g>
<!-- orbit -->
<g>
<path d="M468.4 992.6V980.5" stroke="#333" stroke-width="2.6"/><path d="M468.4 992V980.8" stroke="#fff" stroke-width="1"/>
<path d="M468.4 977l-3 3.6h6z" fill="#fff" stroke="#333" stroke-width="1"/>
<path d="M464.5 988.6c-3.5-0.6-4.5-2-4.2-3c0.6-2 5-3.3 9-3c4 0.2 6.8 1.6 6.8 3c0 1.5-3 2.8-7 3" fill="none" stroke="#333" stroke-width="1.2"/>
<path d="M461.5 988.5l3.8-2.2v4.4z" fill="#333"/>
</g>
<!-- pan fit -->
<g>
<path d="M494.5 980.5l2.5-3l1.8 1.6l2.4-1.2l1.8 1.2l3-1.6v3z" fill="#999" stroke="#444" stroke-width="0.8"/>
<rect x="493.6" y="980.5" width="14.8" height="11.6" fill="#fff" stroke="#444" stroke-width="1.2"/>
<rect x="496.8" y="984" width="8.4" height="4.4" fill="#a9b0bd" stroke="#444" stroke-width="0.9"/>
</g>
<!-- hand -->
<g stroke-linecap="round">
<path d="M523.3 986V981M526.3 985V978.6M529.3 985V979.2M532.3 986V981.6" stroke="#333" stroke-width="3"/>
<path d="M522 985.5h11.8v2.5c0 2.5-1.5 4.5-3.5 4.5h-4.8c-1.2 0-2-0.6-2.8-1.6l-3.6-4.6c-0.8-1 0.4-2.2 1.4-1.4l1.5 1.2z" fill="#fff" stroke="#333" stroke-width="1"/>
<path d="M523.3 986.5V981M526.3 986V978.6M529.3 986V979.2M532.3 986.5V981.6" stroke="#fff" stroke-width="1.3"/>
</g>
<!-- zoom +- -->
<g>
<circle cx="549.5" cy="983" r="4.4" fill="#dbeeee" stroke="#333" stroke-width="1.3"/>
<path d="M552.6 986.2l3.3 3.5" stroke="#333" stroke-width="2.4"/>
<path d="M556 979.3h4.2M558.1 977.2v4.2M556 983.2h5" stroke="#333" stroke-width="0.9"/>
</g>
<!-- zoom window -->
<g>
<rect x="570.8" y="977.2" width="14.5" height="14" fill="none" stroke="#555" stroke-width="0.8" stroke-dasharray="1.5 1.2"/>
<circle cx="577" cy="983.2" r="5.3" fill="#dbeeee" stroke="#333" stroke-width="1.3"/>
<path d="M580.8 987l4.3 4.5" stroke="#333" stroke-width="2.4"/>
</g>
<!-- display -->
<g>
<rect x="604.3" y="977.2" width="15" height="11.2" rx="1" fill="#f4f4f4" stroke="#555" stroke-width="0.9"/>
<rect x="606.2" y="979" width="11.2" height="7.6" fill="#90aed8" stroke="#2c4a86" stroke-width="0.9"/>
<path d="M609.5 988.6h4.6l1 2.6h-6.6z" fill="#fff" stroke="#555" stroke-width="0.8"/>
</g>
<!-- grid -->
<g>
<rect x="635.2" y="977.2" width="15.5" height="15.5" rx="1" fill="#6d7380" stroke="#555" stroke-width="0.6"/>
<path d="M635.2 980.3h15.5M635.2 983.4h15.5M635.2 986.5h15.5M635.2 989.6h15.5M638.3 977.2v15.5M641.4 977.2v15.5M644.5 977.2v15.5M647.6 977.2v15.5" stroke="#f4f4f4" stroke-width="1.1"/>
</g>
<!-- viewports -->
<g>
<rect x="666" y="977.8" width="15" height="13" rx="1" fill="#2f4f8f"/>
<rect x="667.2" y="979" width="5.8" height="4.8" fill="#a9c0e6"/><rect x="674" y="979" width="5.8" height="4.8" fill="#a9c0e6"/>
<rect x="667.2" y="984.8" width="5.8" height="4.8" fill="#a9c0e6"/><rect x="674" y="984.8" width="5.8" height="4.8" fill="#a9c0e6"/>
</g>
</svg>

<svg style="position:absolute;left:0;top:1000px" width="1024" height="24" viewBox="0 1000 1024 24">
<rect x="0" y="1003" width="1024" height="21" fill="#f1f1f1"/>
<rect x="0" y="1002.8" width="1024" height="1" fill="#d8d8d8"/>
<defs>
<g id="sk"><rect x="0.5" y="0.5" width="14" height="8" fill="#fff" stroke="#888" stroke-width="1"/><rect x="0" y="0" width="2" height="2.4" fill="#1e8de0"/><rect x="13" y="0" width="2" height="2.4" fill="#1e8de0"/><rect x="3.5" y="3.5" width="8" height="2" fill="#888"/><rect x="3.5" y="3" width="1.6" height="2.4" fill="#1e8de0"/><rect x="10" y="3" width="1.6" height="2.4" fill="#1e8de0"/></g>
<g id="ex"><path d="M0 5l3.5-4h10v5h-13.5z" fill="#64aee6"/><path d="M0.3 5l3.5-4h9.7l-3.5 4z" fill="#8ecaf6"/><path d="M10 5l3.5-4v6l-3.5 3z" fill="#4590cc"/><path d="M14.5 5V1M13.3 2.2l1.2-1.6l1.2 1.6" stroke="#222" stroke-width="0.8" fill="none"/></g>
<g id="rv"><path d="M0.5 6c1.2-3.2 3.2-5.2 6-5.5h2.2v3.8h6.2v2.2v2h-14.4z" fill="#7cbcf0"/><path d="M6.5 4.3l2.2-3.8v3.8z" fill="#4590cc"/><path d="M8.7 4.3h6.2v2.2h-6.2z" fill="#64aee6"/></g>
</defs>
<use href="#sk" x="1" y="1019"/>
<g><path d="M25.3 1024v-1.6l5-3.4h3l-3 3.4v1.6" fill="#d9d9d9" stroke="#555" stroke-width="0.9"/><path d="M30.3 1024v-1.6l4.5-3.8v5.4z" fill="#56c27a"/><path d="M36 1024v-1l5-4.4v5.4z" fill="#e8935c"/></g>
<use href="#sk" x="49" y="1019"/>
<use href="#ex" x="73" y="1019"/>
<use href="#rv" x="97.5" y="1019"/>
<use href="#rv" x="121.2" y="1019"/>
<use href="#rv" x="145" y="1019"/>
<path d="M169.5 1024v-2.2l3.5-2.8h11.3v5" fill="#fff" stroke="#777" stroke-width="0.9"/><path d="M180 1024v-1.5l4.3-3v4.5z" fill="#bbb"/>
<use href="#sk" x="193" y="1019"/>
<use href="#ex" x="217" y="1019"/>
<use href="#sk" x="241" y="1019"/>
<use href="#ex" x="265.2" y="1019"/>
<g><rect x="291.4" y="1019.3" width="12" height="6" fill="#fff" stroke="#555" stroke-width="0.9"/><path d="M295 1024l8-3" stroke="#1e8de0" stroke-width="1.6"/></g>
<g><rect x="315.5" y="1019.3" width="12" height="6" fill="#fff" stroke="#555" stroke-width="0.9"/><path d="M319 1024l8-3" stroke="#1e8de0" stroke-width="1.6"/></g>
<path d="M327 1013.2h11.8v3.2l-4.6 4.6v3h-2.6v-3l-4.6-4.6z" fill="#5a5a5a"/>
</svg>

<div style="position:absolute;left:0;top:0;width:1024px;height:1024px;font-family:'Liberation Sans',sans-serif;color:#000;font-size:37.5px;line-height:40px;white-space:nowrap">
<div style="position:absolute;left:507.9px;top:127.7px;transform:translateX(-50%) scaleX(1.025)">Coffee maker water heater</div>
<div style="position:absolute;left:509.7px;top:176.5px;transform:translateX(-50%) scaleX(1.022)">3D tube by using the Sweep,</div>
<div style="position:absolute;left:507.6px;top:227.3px;transform:translateX(-50%) scaleX(0.995)">Revolve, Shell and Thread</div>
<div style="position:absolute;left:514px;top:274.8px;transform:translateX(-50%) scaleX(1.05)">commands.</div>
</div>

</body></html>
